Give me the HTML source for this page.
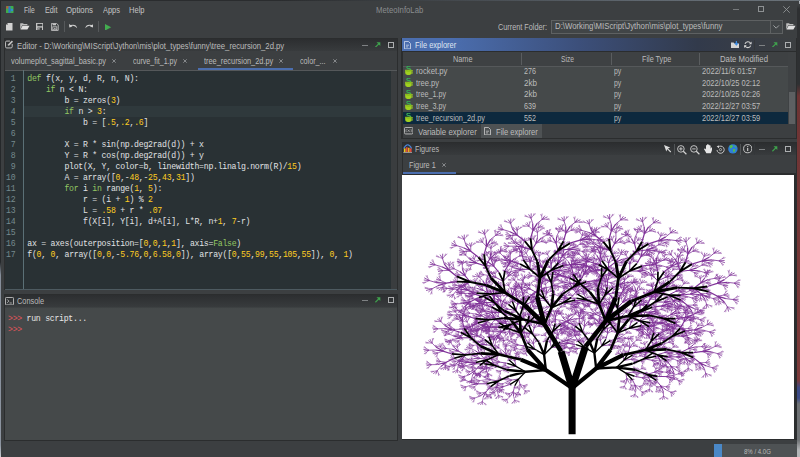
<!DOCTYPE html>
<html><head><meta charset="utf-8"><title>MeteoInfoLab</title>
<style>
html,body{margin:0;padding:0;background:#3c3f41;}
body{width:800px;height:457px;position:relative;overflow:hidden;font-family:"Liberation Sans", sans-serif;}
div,span,svg{position:absolute;box-sizing:border-box;}
.t{white-space:pre;line-height:12px;height:12px;transform-origin:0 50%;font-family:"Liberation Sans", sans-serif;}
.cl,.ln,.con{letter-spacing:-0.27px;}
.cl,.ln{font-family:"Liberation Mono", monospace;font-size:8.2px;line-height:12px;height:12px;white-space:pre;color:#E0E2E4;}
.cl{left:27.3px;}
.ln{left:5px;width:10.3px;text-align:right;color:#768a8e;}
b{font-weight:normal;}
.k{color:#93C763;} .n{color:#FFCD22;}
.con{font-family:"Liberation Mono", monospace;font-size:8.2px;line-height:12px;height:12px;white-space:pre;color:#e6e6e6;left:8px;}
.con i{font-style:normal;color:#e0555a;}
</style></head><body>
<!-- window frame -->
<div style="left:0;top:0;width:800px;height:457px;background:#3c3f41;"></div>
<div style="left:0;top:0;width:1.4px;height:457px;background:linear-gradient(#25282a 0,#25282a 262px,#868e9a 275px,#8c94a0 445px,#c8ccd0 457px);"></div>
<div style="left:797.3px;top:0;width:2.7px;height:457px;background:linear-gradient(#3c3f41 0,#3c3f41 5px,#2e3032 9px,#2e3032 84px,#6e3434 96px,#7c3a3a 380px,#3c4a86 388px,#3c4a86 398px,#6e7174 404px,#6e7174 440px,#b4b6b8 450px);"></div>
<div style="left:798.7px;top:0;width:1.3px;height:4px;background:linear-gradient(#c8ccd2,#9aa0a6);"></div>
<div style="left:0;top:0;width:800px;height:1px;background:linear-gradient(90deg,#2a2c2e 0,#2a2c2e 35%,#5f676f 80%,#6a7279 100%);"></div>

<!-- editor panel -->
<div style="left:3.5px;top:37.6px;width:394.5px;height:252.4px;background:#2b2d2e;"></div>
<div style="left:4.5px;top:38.8px;width:392.5px;height:12.2px;background:linear-gradient(#2c2e30,#383b3d);"></div>
<div style="left:4.5px;top:51px;width:392.5px;height:19.6px;background:#3c3f41;"></div>
<div style="left:4.5px;top:69.8px;width:392.5px;height:0.9px;background:#55585a;"></div>
<div style="left:197.5px;top:68px;width:95px;height:1.8px;background:#4b6eaf;"></div>
<div style="left:4.5px;top:70.7px;width:386.5px;height:218.3px;background:#293134;"></div>
<div style="left:391px;top:70.7px;width:6px;height:218.3px;background:#3a3d3f;"></div>
<div style="left:23.5px;top:105.8px;width:367.5px;height:11px;background:#2F393C;"></div>
<div style="left:23.2px;top:70px;width:1px;height:219px;background:#5b7076;"></div>
<div style="left:4.5px;top:288.6px;width:392.5px;height:1px;background:#4d5a60;"></div>
<div class="cl" style="top:72.80px"><b class="k">def</b> f(x, y, d, R, n, N):</div><div class="ln" style="top:72.80px">1</div><div class="cl" style="top:83.82px">    <b class="k">if</b> n &lt; N:</div><div class="ln" style="top:83.82px">2</div><div class="cl" style="top:94.84px">        b = zeros(<b class="n">3</b>)</div><div class="ln" style="top:94.84px">3</div><div class="cl" style="top:105.86px">        <b class="k">if</b> n &gt; <b class="n">3</b>:</div><div class="ln" style="top:105.86px">4</div><div class="cl" style="top:116.88px">            b = [<b class="n">.5</b>,<b class="n">.2</b>,<b class="n">.6</b>]</div><div class="ln" style="top:116.88px">5</div><div class="cl" style="top:127.90px"></div><div class="ln" style="top:127.90px">6</div><div class="cl" style="top:138.92px">        X = R * sin(np.deg2rad(d)) + x</div><div class="ln" style="top:138.92px">7</div><div class="cl" style="top:149.94px">        Y = R * cos(np.deg2rad(d)) + y</div><div class="ln" style="top:149.94px">8</div><div class="cl" style="top:160.96px">        plot(X, Y, color=b, linewidth=np.linalg.norm(R)/<b class="n">15</b>)</div><div class="ln" style="top:160.96px">9</div><div class="cl" style="top:171.98px">        A = array([<b class="n">0</b>,-<b class="n">48</b>,-<b class="n">25</b>,<b class="n">43</b>,<b class="n">31</b>])</div><div class="ln" style="top:171.98px">10</div><div class="cl" style="top:183.00px">        <b class="k">for</b> i <b class="k">in</b> range(<b class="n">1</b>, <b class="n">5</b>):</div><div class="ln" style="top:183.00px">11</div><div class="cl" style="top:194.02px">            r = (i + <b class="n">1</b>) % <b class="n">2</b></div><div class="ln" style="top:194.02px">12</div><div class="cl" style="top:205.04px">            L = <b class="n">.58</b> + r * <b class="n">.07</b></div><div class="ln" style="top:205.04px">13</div><div class="cl" style="top:216.06px">            f(X[i], Y[i], d+A[i], L*R, n+<b class="n">1</b>, <b class="n">7</b>-r)</div><div class="ln" style="top:216.06px">14</div><div class="cl" style="top:227.08px"></div><div class="ln" style="top:227.08px">15</div><div class="cl" style="top:238.10px">ax = axes(outerposition=[<b class="n">0</b>,<b class="n">0</b>,<b class="n">1</b>,<b class="n">1</b>], axis=<b class="k">False</b>)</div><div class="ln" style="top:238.10px">16</div><div class="cl" style="top:249.12px">f(<b class="n">0</b>, <b class="n">0</b>, array([<b class="n">0</b>,<b class="n">0</b>,-<b class="n">5.76</b>,<b class="n">0</b>,<b class="n">6.58</b>,<b class="n">0</b>]), array([<b class="n">0</b>,<b class="n">55</b>,<b class="n">99</b>,<b class="n">55</b>,<b class="n">105</b>,<b class="n">55</b>]), <b class="n">0</b>, <b class="n">1</b>)</div><div class="ln" style="top:249.12px">17</div>

<!-- console panel -->
<div style="left:3.5px;top:293.5px;width:394.5px;height:147.5px;background:#2b2d2e;"></div>
<div style="left:4.5px;top:294.5px;width:392.5px;height:12.4px;background:linear-gradient(#2c2e30,#383b3d);"></div>
<div style="left:4.5px;top:307px;width:392.5px;height:133px;background:linear-gradient(#3a3d3f 0,#45494a 1.6px);"></div>
<div class="con" style="top:313px"><i>&gt;&gt;&gt;</i> run script...</div>
<div class="con" style="top:324px"><i>&gt;&gt;&gt;</i></div>

<!-- file explorer panel -->
<div style="left:401.3px;top:37.8px;width:395.7px;height:101.7px;background:#2b2d2e;"></div>
<div style="left:402px;top:38.2px;width:394px;height:13px;background:linear-gradient(90deg,#4b6eaf 0,#4b6eaf 12%,#3c4f7a 45%,#323a4b 75%,#3c3f41 100%);"></div>
<div style="left:402.5px;top:51.5px;width:393.5px;height:72.5px;background:#45494a;"></div>
<div style="left:402.5px;top:51.5px;width:385.5px;height:14.5px;background:#3e4143;"></div>
<div style="left:402.5px;top:65.6px;width:385.5px;height:1px;background:#55585a;"></div>
<div style="left:521.3px;top:52.5px;width:1px;height:12.5px;background:#5a5d5f;"></div>
<div style="left:610.8px;top:52.5px;width:1px;height:12.5px;background:#5a5d5f;"></div>
<div style="left:698.8px;top:52.5px;width:1px;height:12.5px;background:#5a5d5f;"></div>
<div style="left:402.5px;top:112.2px;width:385.5px;height:11.4px;background:#0d293e;"></div>
<div style="left:788px;top:51.5px;width:8px;height:72.5px;background:#3f4244;"></div>
<div style="left:789.4px;top:92px;width:5.2px;height:31.6px;background:#5d6062;"></div>
<div style="left:402.5px;top:124.2px;width:393.5px;height:14px;background:#3c3f41;"></div>
<div style="left:481.2px;top:124.2px;width:61px;height:13.6px;background:#4e5254;"></div>

<!-- figures panel -->
<div style="left:401.5px;top:142px;width:395.5px;height:297.5px;background:#2b2d2e;"></div>
<div style="left:402.5px;top:143px;width:393.5px;height:12.4px;background:linear-gradient(#2c2e30,#383b3d);"></div>
<div style="left:402.5px;top:155.4px;width:393.5px;height:17.8px;background:#3c3f41;"></div>
<div style="left:402.5px;top:172.3px;width:53px;height:1.6px;background:#4b6eaf;"></div>
<div style="left:402.1px;top:174.5px;width:392.2px;height:264px;background:#fff;"></div>
<svg style="left:0;top:0" width="800" height="457" viewBox="0 0 800 457" fill="none" stroke-linecap="butt" stroke-linejoin="miter" stroke-miterlimit="10">
<path stroke="#803399" stroke-width=".8" d="M518.6 379l1.4 5.2l2.3 3.8m-2.3-3.8l-.2 4.8M518.6 379l-6.8 1l-5.1 1.8m5.1-1.8l-6.3-.2M516.1 366.3l-6.8 1l-5.1 1.7m5.1-1.7l-6.4-.2M516.1 366.3l-1.2-5.1l-2.2-3.9m2.2 3.9l.4-4.8M534.6 349.2l-6.7 1l-5.1 1.7m5.1-1.7l-6.4-.2M534.6 349.2l-1.2-5.1l-2.1-3.9m2.1 3.9l.4-4.9M551.4 347.5l-1.2-5.1l-2.2-3.9m2.2 3.9l.4-4.8M551.4 347.5l6.8-.8l5.2-1.6m-5.2 1.6l6.3 .4M584.9 347.5l-6.8 1l-5.1 1.8m5.1-1.8l-6.3-.2M584.9 347.5l-1.2-5.1l-2.2-3.9m2.2 3.9l.4-4.8M601.7 345.9l-1.2-5.2l-2.2-3.9m2.2 3.9l.4-4.8M601.7 345.9l6.8-.9l5.2-1.5m-5.2 1.5l6.3 .4M623.9 360.3l-1.2-5.2l-2.2-3.9m2.2 3.9l.4-4.8M623.9 360.3l6.8-.9l5.2-1.5m-5.2 1.5l6.3 .4M625.8 373l6.8-.8l5.2-1.6m-5.2 1.6l6.3 .4M625.8 373l1 5.2l1.9 4m-1.9-4l-.7 4.8"/>
<path stroke="#803399" stroke-width=".89" d="M514.8 385.8l-1.5 5.7l.2 4.8m-.2-4.8l-3 4.9M510.2 384.4l-7.1 2.3l-5.1 2.8m5.1-2.8l-7 .9M498.4 381l-1.5 5.8l.3 4.7m-.3-4.7l-2.9 4.9M498.4 381l-7.5-1.2l-6.3 .1m6.3-.1l-6.4-2.3M507.3 363.3l-7.6-1.2l-6.2 .1m6.2-.1l-6.4-2.3M509.1 359.9l-2.9-5.5l-3.6-3.9m3.6 3.9l-1-5.3M494.8 365.6l-7.1 2.2l-5.1 2.8m5.1-2.8l-7.1 .9M494.8 365.6l-2.9-5.5l-3.6-3.9m3.6 3.9l-1.1-5.3M487.5 359.6l-1.4 5.8l.2 4.7m-.2-4.7l-3 4.9M487.5 359.6l-7.5-1.2l-6.3 .1m6.3-.1l-6.4-2.3M492.3 345.7l-7.5-1.2l-6.3 0m6.3 0l-6.5-2.4M492.3 345.7l1.7-5.7l0-4.8m0 4.8l3.2-4.8M525.8 346.2l-7.5-1.2l-6.3 .1m6.3-.1l-6.4-2.3M527.7 342.8l-2.9-5.5l-3.6-3.9m3.6 3.9l-1-5.3M532.4 333.9l-7.6-1.2l-6.3 0m6.3 0l-6.4-2.4M532.4 333.9l1.7-5.7l0-4.8m0 4.8l3.2-4.9M555.5 340.9l1.7-5.7l0-4.7m0 4.7l3.2-4.8M560 342.4l7.2-2.1l5.2-2.7m-5.2 2.7l7.1-.7M552.8 331.4l-2.9-5.5l-3.6-3.9m3.6 3.9l-1-5.3M552.8 331.4l7.2-2.1l5.2-2.7m-5.2 2.7l7.1-.7M508.8 328.8l-7.1 2.3l-5.1 2.7m5.1-2.7l-7 .8M508.8 328.8l-2.9-5.5l-3.6-3.9m3.6 3.9l-1-5.3M526.7 324l-2.9-5.5l-3.6-3.9m3.6 3.9l-1.1-5.3M526.7 324l7.2-2.1l5.2-2.7m-5.2 2.7l7-.7M511.1 324.4l-1.5 5.8l.2 4.7m-.2-4.7l-3 4.9M511.1 324.4l-7.6-1.2l-6.2 .1m6.2-.1l-6.4-2.4M515.8 310.5l-7.5-1.3l-6.3 .1m6.3-.1l-6.4-2.3M515.8 310.5l1.8-5.8l0-4.7m0 4.7l3.2-4.8M544.8 299l-7.5-1.2l-6.3 0m6.3 0l-6.4-2.4M544.8 299l1.8-5.7l0-4.8m0 4.8l3.2-4.9M563.1 302.8l1.8-5.7l0-4.7m0 4.7l3.2-4.8M563.1 302.8l7.5 1.4l6.3 .1m-6.3-.1l6.3 2.6M576.1 344.6l-7.5-1.3l-6.3 .1m6.3-.1l-6.4-2.3M578 341.1l-2.9-5.4l-3.6-3.9m3.6 3.9l-1.1-5.4M582.6 332.2l-7.5-1.2l-6.3 .1m6.3-.1l-6.4-2.3M582.6 332.2l1.8-5.7l0-4.7m0 4.7l3.2-4.8M605.8 339.2l1.7-5.7l0-4.7m0 4.7l3.2-4.8M610.3 340.7l7.2-2.1l5.2-2.6m-5.2 2.6l7-.7M603.1 329.7l-2.9-5.4l-3.6-3.9m3.6 3.9l-1-5.4M603.1 329.7l7.2-2.1l5.2-2.6m-5.2 2.6l7-.7M611 324.3l-7.6-1.2l-6.2 .1m6.2-.1l-6.4-2.3M611 324.3l1.7-5.7l0-4.7m0 4.7l3.2-4.8M629.3 328.2l1.7-5.7l0-4.8m0 4.8l3.2-4.8M629.3 328.2l7.4 1.4l6.3 .1m-6.3-.1l6.3 2.5M628 353.6l1.7-5.7l0-4.7m0 4.7l3.2-4.8M632.5 355.1l7.2-2.1l5.2-2.6m-5.2 2.6l7-.7M644.1 358.8l1.7-5.7l0-4.7m0 4.7l3.2-4.8M644.1 358.8l7.5 1.4l6.2 .1m-6.2-.1l6.3 2.5M634.4 376.3l7.5 1.4l6.3 .1m-6.3-.1l6.3 2.5M632.4 379.7l2.7 5.5l3.4 4m-3.4-4l.8 5.3M647 374.4l7.2-2.1l5.2-2.7m-5.2 2.7l7.1-.7M647 374.4l2.7 5.5l3.4 4m-3.4-4l.8 5.4M651.3 341l-2.9-5.4l-3.6-3.9m3.6 3.9l-1.1-5.4M651.3 341l7.2-2.1l5.2-2.6m-5.2 2.6l7-.7M657.3 354.7l7.2-2.1l5.2-2.7m-5.2 2.7l7-.7M657.3 354.7l2.6 5.5l3.4 4m-3.4-4l.8 5.3M587 300l-7.1 2.3l-5.1 2.7m5.1-2.7l-7 .8M587 300l-2.9-5.5l-3.6-3.9m3.6 3.9l-1-5.3M604.9 295.2l-2.9-5.5l-3.6-3.9m3.6 3.9l-1-5.3M604.9 295.2l7.2-2.1l5.2-2.7m-5.2 2.7l7.1-.7M633.6 307l-2.8-5.4l-3.6-3.9m3.6 3.9l-1.1-5.4M633.6 307l7.2-2.1l5.2-2.6m-5.2 2.6l7.1-.7M639.7 320.7l7.2-2.1l5.2-2.7m-5.2 2.7l7-.7M639.7 320.7l2.6 5.5l3.4 4m-3.4-4l.8 5.4"/>
<path stroke="#803399" stroke-width="1" d="M490.6 386.7l-4.8 5.4l-2.5 5m2.5-5l-5.9 4.1M486.7 383.8l-8.6 0l-6.9 1.2m6.9-1.2l-7.8-1.4M484.2 363.8l-8.6 0l-6.9 1.2m6.9-1.2l-7.8-1.4M485.2 359.7l-4.9-5.4l-5.1-3.7m5.1 3.7l-2.7-5.7M479.8 365.3l-4.9 5.5l-2.5 4.9m2.5-4.9l-5.9 4M475.8 362.4l-8.6 0l-6.9 1.2m6.9-1.2l-7.8-1.4M465.6 355l-4.8 5.4l-2.5 5m2.5-5l-5.9 4.1M465.6 355l-7.1-3.8l-6.4-2m6.4 2l-5.2-4.5M485 339.7l-7.1-3.8l-6.5-2m6.5 2l-5.3-4.5M488.9 336.7l.1-6.5l-1.4-5.2m1.4 5.2l2-5.9M470.8 337.8l-8.7 0l-6.8 1.2m6.8-1.2l-7.7-1.4M470.8 337.8l.1-6.5l-1.4-5.3m1.4 5.3l2.1-5.9M525 327.9l-7.1-3.8l-6.5-2m6.5 2l-5.2-4.5M528.9 324.9l.2-6.5l-1.5-5.2m1.5 5.2l2-5.9M555.2 323.4l.2-6.6l-1.5-5.2m1.5 5.2l2-5.8M560.6 324.2l7.3-3.6l4.9-3.8m-4.9 3.8l7.5-2M498.2 327l-8.6 0l-6.9 1.2m6.9-1.2l-7.8-1.4M499.2 322.9l-4.8-5.4l-5.2-3.7m5.2 3.7l-2.8-5.7M501.6 312.4l-8.7 0l-6.8 1.2m6.8-1.2l-7.7-1.5M501.6 312.4l.1-6.6l-1.4-5.2m1.4 5.2l2.1-5.9M529.1 316l.2-6.6l-1.5-5.2m1.5 5.2l2-5.9M534.5 316.8l7.3-3.6l4.8-3.8m-4.8 3.8l7.5-2M523.2 306l-4.8-5.4l-5.1-3.7m5.1 3.7l-2.8-5.7M523.2 306l7.3-3.6l4.9-3.8m-4.9 3.8l7.5-2M503.3 330.1l-4.8 5.4l-2.6 5m2.6-5l-5.9 4.1M499.3 327.2l-8.6 0l-6.8 1.2m6.8-1.2l-7.7-1.5M489.2 319.8l-4.9 5.4l-2.5 5m2.5-5l-5.9 4.1M489.2 319.8l-7.1-3.8l-6.5-2m6.5 2l-5.3-4.6M508.5 304.4l-7.1-3.7l-6.5-2m6.5 2l-5.3-4.6M512.4 301.5l.1-6.6l-1.4-5.2m1.4 5.2l2.1-5.8M494.3 302.6l-8.6 0l-6.9 1.2m6.9-1.2l-7.8-1.5M494.3 302.6l.2-6.6l-1.5-5.2m1.5 5.2l2-5.8M490.3 294.1l-4.9 5.4l-2.5 5m2.5-5l-5.9 4.1M490.3 294.1l-7.1-3.8l-6.5-2m6.5 2l-5.3-4.5M503.2 281.3l-7.1-3.8l-6.5-2m6.5 2l-5.2-4.5M503.2 281.3l5.1-5.3l2.7-4.9m-2.7 4.9l6.1-4M537.5 293l-7.1-3.8l-6.5-2m6.5 2l-5.3-4.5M541.4 290l.1-6.5l-1.4-5.2m1.4 5.2l2.1-5.9M551.3 282.4l-7-3.7l-6.5-2.1m6.5 2.1l-5.3-4.6M551.3 282.4l5.1-5.3l2.8-4.9m-2.8 4.9l6.1-3.9M571.2 297.4l5-5.4l2.8-4.8m-2.8 4.8l6.1-3.9M575 300.4l8.6 .2l6.9-1m-6.9 1l7.7 1.6M573.9 286.6l.1-6.5l-1.4-5.3m1.4 5.3l2-5.9M573.9 286.6l8.6 .3l6.9-1m-6.9 1l7.7 1.6M530 269.3l-8.7 0l-6.8 1.2m6.8-1.2l-7.7-1.4M530 269.3l.1-6.6l-1.4-5.2m1.4 5.2l2-5.8M551.2 270.3l.1-6.6l-1.4-5.2m1.4 5.2l2.1-5.8M551.2 270.3l8.6 .2l6.9-1m-6.9 1l7.7 1.6M575.3 326.2l-7.1-3.8l-6.5-2m6.5 2l-5.3-4.5M579.2 323.3l.1-6.6l-1.4-5.2m1.4 5.2l2.1-5.9M605.5 321.7l.2-6.5l-1.5-5.2m1.5 5.2l2-5.9M610.9 322.5l7.3-3.5l4.8-3.9m-4.8 3.9l7.5-2M603.6 318.3l-7.1-3.7l-6.5-2m6.5 2l-5.2-4.6M607.5 315.4l.2-6.6l-1.5-5.2m1.5 5.2l2-5.8M617.5 307.8l-7.1-3.8l-6.5-2m6.5 2l-5.3-4.5M617.5 307.8l5-5.3l2.8-4.9m-2.8 4.9l6.1-4M637.3 322.7l5.1-5.3l2.7-4.9m-2.7 4.9l6.1-3.9M641.1 325.7l8.6 .3l6.9-1m-6.9 1l7.7 1.6M640 312l.1-6.6l-1.4-5.2m1.4 5.2l2.1-5.8M640 312l8.6 .2l6.9-1m-6.9 1l7.7 1.7M652.1 353.3l5.1-5.3l2.8-4.9m-2.8 4.9l6.1-3.9M655.9 356.4l8.7 .2l6.9-1m-6.9 1l7.7 1.6M657.5 376.4l8.6 .2l6.9-1m-6.9 1l7.7 1.6M656.3 380.5l4.6 5.5l5 3.8m-5-3.8l2.5 5.8M653.7 333l.2-6.5l-1.5-5.3m1.5 5.3l2-5.9M659.1 333.8l7.2-3.5l4.9-3.9m-4.9 3.9l7.6-2M673 335.8l.1-6.5l-1.4-5.2m1.4 5.2l2-5.9M673 335.8l8.6 .3l6.9-1m-6.9 1l7.7 1.6M667.7 356.7l8.7 .2l6.9-1m-6.9 1l7.7 1.6M666.6 360.7l4.6 5.6l4.9 3.8m-4.9-3.8l2.5 5.8M681 352.4l7.2-3.6l4.9-3.8m-4.9 3.8l7.5-2M681 352.4l4.5 5.5l5 3.8m-5-3.8l2.6 5.8M576.5 298.2l-8.7 0l-6.8 1.2m6.8-1.2l-7.7-1.4M577.4 294.1l-4.8-5.4l-5.1-3.7m5.1 3.7l-2.8-5.7M579.8 283.6l-8.6 0l-6.9 1.2m6.9-1.2l-7.8-1.5M579.8 283.6l.2-6.6l-1.5-5.2m1.5 5.2l2-5.9M607.3 287.2l.2-6.6l-1.4-5.2m1.4 5.2l2-5.9M612.7 288l7.3-3.6l4.9-3.8m-4.9 3.8l7.5-2M601.5 277.2l-4.9-5.4l-5.1-3.7m5.1 3.7l-2.7-5.7M601.5 277.2l7.2-3.6l4.9-3.8m-4.9 3.8l7.5-2M608.5 269.9l-8.7 0l-6.8 1.2m6.8-1.2l-7.7-1.4M608.5 269.9l.1-6.6l-1.4-5.2m1.4 5.2l2-5.8M629.7 270.9l.1-6.6l-1.4-5.2m1.4 5.2l2.1-5.8M629.7 270.9l8.6 .2l6.9-1m-6.9 1l7.7 1.7M636.1 299l.1-6.5l-1.4-5.3m1.4 5.3l2.1-5.9M641.5 299.8l7.2-3.5l4.9-3.9m-4.9 3.9l7.6-2M655.4 301.8l.1-6.5l-1.4-5.2m1.4 5.2l2-5.9M655.4 301.8l8.6 .3l6.9-1m-6.9 1l7.7 1.6M650.1 322.7l8.7 .2l6.9-1m-6.9 1l7.7 1.6M649 326.8l4.6 5.5l4.9 3.8m-4.9-3.8l2.5 5.8M663.4 318.4l7.2-3.6l4.9-3.8m-4.9 3.8l7.5-2M663.4 318.4l4.5 5.5l5 3.8m-5-3.8l2.5 5.8M657.7 281l-4.8-5.4l-5.1-3.6m5.1 3.6l-2.8-5.7M657.7 281l7.3-3.5l4.9-3.9m-4.9 3.9l7.5-2M668.5 295l7.3-3.6l4.9-3.8m-4.9 3.8l7.5-2M668.5 295l4.6 5.5l5 3.8m-5-3.8l2.5 5.8"/>
<path stroke="#803399" stroke-width="1.12" d="M454.3 358.3l-8.1 4l-5.5 4.3m5.5-4.3l-8.4 2.2M451.9 354l-8.9-2.9l-7.7-1.1m7.7 1.1l-7.1-4.1M460.9 332.5l-8.9-2.8l-7.8-1.1m7.8 1.1l-7.2-4.1M464.3 328.6l-1.9-7.2l-3.2-5.5m3.2 5.5l.4-6.8M491.7 307.1l-8.9-2.9l-7.8-1m7.8 1l-7.2-4.1M495.1 303.2l-1.9-7.3l-3.2-5.4m3.2 5.4l.5-6.7M523.5 296.8l-1.9-7.2l-3.2-5.5m3.2 5.5l.4-6.8M529.6 296.8l6.9-5.3l4.2-5m-4.2 5l7.6-3.5M477.9 323l-8.2 4l-5.4 4.3m5.4-4.3l-8.4 2.3M475.5 318.7l-9-2.9l-7.7-1m7.7 1l-7.1-4M484.4 297.3l-8.9-2.9l-7.7-1m7.7 1l-7.2-4M487.8 293.4l-1.9-7.2l-3.1-5.5m3.1 5.5l.5-6.8M479 297.4l-8.2 4l-5.4 4.3m5.4-4.3l-8.4 2.2M476.6 293l-8.9-2.8l-7.8-1.1m7.8 1.1l-7.2-4.1M470.3 282l-8.1 4l-5.5 4.3m5.5-4.3l-8.4 2.3M470.3 282l-5.1-6.2l-5.5-4.3m5.5 4.3l-2.8-6.5M499.1 272.6l-5.1-6.2l-5.6-4.2m5.6 4.2l-2.8-6.5M504.8 270.9l4-6.7l1.5-5.9m-1.5 5.9l5.4-5.4M485.5 266l-8.9-2.9l-7.7-1m7.7 1l-7.1-4M485.5 266l4-6.7l1.5-5.9m-1.5 5.9l5.5-5.4M547.2 273.8l-5.1-6.3l-5.6-4.2m5.6 4.2l-2.8-6.4M552.9 272l4-6.7l1.5-5.8m-1.5 5.8l5.5-5.4M581 279.2l3.9-6.7l1.6-5.9m-1.6 5.9l5.5-5.4M586.1 281.8l9.5-1.2l7.3-2.4m-7.3 2.4l9 .4M520.1 264l-8.9-2.9l-7.8-1m7.8 1l-7.2-4M523.5 260.1l-1.9-7.2l-3.2-5.5m3.2 5.5l.4-6.8M532 250l-8.9-2.9l-7.7-1m7.7 1l-7.2-4M532 250l4-6.7l1.5-5.9m-1.5 5.9l5.4-5.4M558.3 262.9l4-6.8l1.5-5.8m-1.5 5.8l5.4-5.3M563.4 265.5l9.6-1.3l7.2-2.3m-7.2 2.3l8.9 .4M558 250.6l-1.8-7.2l-3.2-5.5m3.2 5.5l.4-6.8M558 250.6l9.5-1.3l7.3-2.3m-7.3 2.3l9 .5M613.4 299.1l-5.2-6.2l-5.5-4.2m5.5 4.2l-2.8-6.5M619.1 297.4l3.9-6.7l1.5-5.9m-1.5 5.9l5.5-5.4M647.1 304.6l4-6.8l1.5-5.8m-1.5 5.8l5.4-5.3M652.2 307.2l9.6-1.3l7.2-2.3m-7.2 2.3l8.9 .5M680.1 328.4l3.9-6.7l1.6-5.9m-1.6 5.9l5.5-5.4M685.2 331l9.5-1.2l7.3-2.4m-7.3 2.4l9 .4M693.1 352.7l9.5-1.3l7.2-2.3m-7.2 2.3l8.9 .5M693 357.4l6.8 5.3l6.5 3.2m-6.5-3.2l4.5 5.8M569.9 278.3l-8.9-2.9l-7.7-1m7.7 1l-7.1-4.1M573.3 274.4l-1.8-7.3l-3.2-5.4m3.2 5.4l.4-6.7M601.7 268l-1.8-7.2l-3.2-5.5m3.2 5.5l.4-6.8M607.9 268l6.8-5.3l4.2-5m-4.2 5l7.6-3.5M598.6 264.6l-8.9-2.8l-7.8-1.1m7.8 1.1l-7.2-4.1M601.9 260.7l-1.8-7.2l-3.2-5.5m3.2 5.5l.4-6.8M610.5 250.6l-8.9-2.9l-7.7-1m7.7 1l-7.2-4M610.5 250.6l4-6.7l1.5-5.9m-1.5 5.9l5.4-5.4M636.8 263.5l4-6.7l1.5-5.9m-1.5 5.9l5.4-5.4M641.9 266.1l9.6-1.3l7.2-2.3m-7.2 2.3l8.9 .5M636.5 251.2l-1.9-7.2l-3.1-5.4m3.1 5.4l.5-6.8M636.5 251.2l9.5-1.2l7.3-2.4m-7.3 2.4l9 .4M662.5 294.4l3.9-6.7l1.5-5.9m-1.5 5.9l5.5-5.4M667.6 297.1l9.5-1.3l7.3-2.3m-7.3 2.3l8.9 .4M675.4 318.7l9.6-1.3l7.2-2.3m-7.2 2.3l8.9 .5M675.4 323.4l6.8 5.3l6.5 3.3m-6.5-3.3l4.5 5.9M658 271.9l-1.9-7.3l-3.1-5.4m3.1 5.4l.5-6.7M664.1 271.8l6.9-5.2l4.2-5.1m-4.2 5.1l7.6-3.5M680 271.5l-1.9-7.2l-3.2-5.4m3.2 5.4l.4-6.8M680 271.5l9.5-1.2l7.2-2.4m-7.2 2.4l8.9 .4M680.6 295.3l9.6-1.3l7.2-2.3m-7.2 2.3l8.9 .5M680.6 300l6.7 5.3l6.6 3.2m-6.6-3.2l4.5 5.8M693.8 288.3l6.9-5.3l4.1-5m-4.1 5l7.6-3.5M693.8 288.3l6.7 5.2l6.6 3.3m-6.6-3.3l4.5 5.9"/>
<path stroke="#803399" stroke-width="1.26" d="M456.8 281.6l-10.7 1.5l-8.1 2.6m8.1-2.6l-10-.5M456.8 276.4l-7.5-6l-7.4-3.6m7.4 3.6l-5.1-6.5M478.4 257.3l-7.6-6l-7.3-3.6m7.3 3.6l-5-6.5M484.1 254.3l2.3-8l-.1-6.7m.1 6.7l4.3-6.9M524.9 241.2l-7.6-5.9l-7.4-3.6m7.4 3.6l-5-6.6M530.6 238.3l2.3-8l-.2-6.7m.2 6.7l4.3-6.9M563.5 241.2l2.3-8l-.1-6.7m.1 6.7l4.3-6.9M569.9 243.2l10.1-3.1l7.2-3.8m-7.2 3.8l9.9-1.1M603.4 241.9l-7.6-6l-7.4-3.6m7.4 3.6l-5-6.5M609.1 238.9l2.2-8l-.1-6.7m.1 6.7l4.4-6.9M642 241.8l2.3-8l-.1-6.7m.1 6.7l4.3-6.9M648.4 243.8l10.1-3.1l7.2-3.8m-7.2 3.8l9.9-1.1M685.5 262.1l2.3-8l-.2-6.7m.2 6.7l4.3-6.9M691.9 264.1l10.1-3.1l7.2-3.8m-7.2 3.8l9.9-1.1M707.2 286.5l10-3.1l7.2-3.8m-7.2 3.8l9.9-1.1M708.6 291.6l9 4.6l8.2 2.4m-8.2-2.4l6.7 5.7"/>
<path stroke="#803399" stroke-width=".55" d="M520 384.2l3.4 1.5l3.1 .7m-3.1-.7l2.7 1.9M522.3 388l2.7 2.7l2.8 1.8m-2.8-1.8l1.7 2.9M520 384.2l-2.1 2.6l-1 2.3m1-2.3l-2.6 1.9M519.8 389l-1.5 3.2l-.3 2.7m.3-2.7l-2.2 2.6M513.3 391.5l2.7 2.7l2.8 1.8m-2.8-1.8l1.6 2.9M513.3 391.5l-3.6 2l-2.4 2.1m2.4-2.1l-3.8 1.2M511.8 380l-2.1 2.6l-1 2.4m1-2.4l-2.6 2M506.7 381.8l-3.6 1.9l-2.4 2.1m2.4-2.1l-3.9 1.2M511.8 380l-3.4-1.6l-3-.8m3 .8l-2.6-2M505.5 379.8l-4.3-1.2l-3.6-.3m3.6 .3l-3.4-1.7M503.1 386.7l-1.5 3.2l-.3 2.8m.3-2.8l-2.2 2.7M503.1 386.7l-4.2-1.2l-3.6-.3m3.6 .3l-3.4-1.7M496.9 386.8l2.7 2.7l2.8 1.8m-2.8-1.8l1.7 2.9M496.9 386.8l-3.6 2l-2.4 2.1m2.4-2.1l-3.8 1.2M490.9 379.8l-3.6 2l-2.4 2.1m2.4-2.1l-3.9 1.2M490.9 379.8l-2.6-2.8l-2.7-1.8m2.7 1.8l-1.5-2.9M509.3 367.3l-2.1 2.6l-1 2.4m1-2.4l-2.6 2M504.2 369l-3.6 2l-2.4 2.1m2.4-2.1l-3.9 1.2M509.3 367.3l-3.4-1.6l-3.1-.8m3.1 .8l-2.6-2M502.9 367.1l-4.2-1.2l-3.6-.3m3.6 .3l-3.4-1.7M499.7 362.1l-3.6 2l-2.4 2.1m2.4-2.1l-3.8 1.2M499.7 362.1l-2.5-2.8l-2.7-1.8m2.7 1.8l-1.5-2.9M514.9 361.2l-3.4-1.6l-3.1-.8m3.1 .8l-2.6-2M512.7 357.3l-2.6-2.8l-2.7-1.9m2.7 1.9l-1.5-2.9M514.9 361.2l2.1-2.6l1.1-2.3m-1.1 2.3l2.7-1.9M515.3 356.4l1.6-3.2l.5-2.7m-.5 2.7l2.3-2.6M506.2 354.4l-4.2-1.1l-3.6-.4m3.6 .4l-3.4-1.8M506.2 354.4l1.6-3.1l.5-2.8m-.5 2.8l2.4-2.6M487.7 367.8l-1.5 3.3l-.4 2.7m.4-2.7l-2.2 2.6M487.7 367.8l-4.2-1.1l-3.6-.4m3.6 .4l-3.5-1.8M491.9 360.1l-4.2-1.1l-3.6-.4m3.6 .4l-3.5-1.8M491.9 360.1l1.6-3.2l.5-2.7m-.5 2.7l2.3-2.5M486.1 365.4l2.7 2.7l2.7 1.8m-2.7-1.8l1.6 2.9M486.1 365.4l-3.6 2l-2.4 2.1m2.4-2.1l-3.9 1.2M480 358.4l-3.6 2l-2.4 2.1m2.4-2.1l-3.8 1.2M480 358.4l-2.6-2.8l-2.7-1.8m2.7 1.8l-1.5-2.9M484.8 344.5l-3.7 2l-2.4 2.1m2.4-2.1l-3.8 1.2M484.8 344.5l-2.6-2.8l-2.7-1.9m2.7 1.9l-1.5-2.9M494 340l-2.5-2.8l-2.7-1.8m2.7 1.8l-1.5-2.9M494 340l3.7-1.9l2.5-2m-2.5 2l3.9-1.1M527.9 350.2l-2.1 2.6l-1 2.3m1-2.3l-2.6 2M522.8 351.9l-3.7 2l-2.4 2.1m2.4-2.1l-3.8 1.2M527.9 350.2l-3.4-1.6l-3.1-.8m3.1 .8l-2.6-2M521.5 350l-4.2-1.2l-3.6-.3m3.6 .3l-3.4-1.7M518.3 345l-3.6 2l-2.4 2.1m2.4-2.1l-3.9 1.2M518.3 345l-2.6-2.8l-2.7-1.8m2.7 1.8l-1.5-2.9M533.4 344.1l-3.4-1.6l-3-.8m3 .8l-2.5-2M531.3 340.2l-2.6-2.8l-2.7-1.9m2.7 1.9l-1.5-3M533.4 344.1l2.2-2.6l1.1-2.3m-1.1 2.3l2.7-1.9M533.8 339.2l1.6-3.1l.6-2.8m-.6 2.8l2.4-2.6M524.8 337.3l-4.2-1.1l-3.6-.4m3.6 .4l-3.4-1.8M524.8 337.3l1.6-3.1l.5-2.8m-.5 2.8l2.3-2.6M524.8 332.7l-3.6 2l-2.4 2m2.4-2l-3.8 1.2M524.8 332.7l-2.6-2.8l-2.7-1.9m2.7 1.9l-1.5-2.9M534.1 328.2l-2.6-2.8l-2.7-1.9m2.7 1.9l-1.5-2.9M534.1 328.2l3.7-1.9l2.5-2m-2.5 2l3.9-1.1M550.2 342.4l-3.4-1.6l-3-.8m3 .8l-2.5-2M548 338.5l-2.5-2.8l-2.7-1.9m2.7 1.9l-1.5-2.9M550.2 342.4l2.2-2.6l1.1-2.3m-1.1 2.3l2.7-1.9M550.6 337.6l1.6-3.2l.5-2.7m-.5 2.7l2.4-2.6M557.2 335.2l-2.5-2.8l-2.7-1.8m2.7 1.8l-1.5-2.9M557.2 335.2l3.7-1.9l2.5-2m-2.5 2l3.9-1.1M558.2 346.7l2.2-2.5l1.1-2.3m-1.1 2.3l2.7-1.9M563.4 345.1l3.7-1.9l2.5-2m-2.5 2l3.9-1.1M558.2 346.7l3.3 1.7l3 .9m-3-.9l2.5 2.1M564.5 347.1l4.2 1.3l3.6 .4m-3.6-.4l3.3 1.8M567.2 340.3l1.6-3.2l.5-2.7m-.5 2.7l2.4-2.6M567.2 340.3l4.2 1.3l3.5 .4m-3.5-.4l3.3 1.8M549.9 325.9l-4.2-1.1l-3.6-.4m3.6 .4l-3.4-1.8M549.9 325.9l1.6-3.1l.5-2.8m-.5 2.8l2.4-2.6M560 329.3l1.6-3.2l.5-2.7m-.5 2.7l2.3-2.6M560 329.3l4.1 1.3l3.6 .4m-3.6-.4l3.4 1.8M501.7 331.1l-1.5 3.2l-.4 2.7m.4-2.7l-2.2 2.6M501.7 331.1l-4.2-1.2l-3.6-.4m3.6 .4l-3.5-1.8M505.9 323.3l-4.2-1.1l-3.6-.4m3.6 .4l-3.4-1.8M505.9 323.3l1.6-3.1l.5-2.8m-.5 2.8l2.3-2.6M523.8 318.5l-4.2-1.1l-3.6-.4m3.6 .4l-3.5-1.8M523.8 318.5l1.6-3.2l.5-2.7m-.5 2.7l2.3-2.5M533.9 321.9l1.6-3.2l.5-2.7m-.5 2.7l2.3-2.6M533.9 321.9l4.1 1.2l3.6 .5m-3.6-.5l3.4 1.9M509.6 330.2l2.7 2.7l2.8 1.7m-2.8-1.7l1.6 2.9M509.6 330.2l-3.6 2l-2.4 2m2.4-2l-3.8 1.1M503.5 323.2l-3.6 2l-2.4 2.1m2.4-2.1l-3.8 1.2M503.5 323.2l-2.5-2.8l-2.7-1.8m2.7 1.8l-1.5-2.9M508.3 309.2l-3.6 2l-2.4 2.1m2.4-2.1l-3.9 1.2M508.3 309.2l-2.6-2.7l-2.7-1.9m2.7 1.9l-1.5-3M517.6 304.7l-2.6-2.7l-2.7-1.9m2.7 1.9l-1.5-3M517.6 304.7l3.7-1.9l2.4-2m-2.4 2l3.8-1M537.3 297.8l-3.6 2l-2.4 2m2.4-2l-3.8 1.1M537.3 297.8l-2.6-2.8l-2.7-1.9m2.7 1.9l-1.5-2.9M546.6 293.3l-2.6-2.8l-2.7-1.9m2.7 1.9l-1.5-2.9M546.6 293.3l3.7-1.9l2.5-2m-2.5 2l3.9-1.1M564.9 297.1l-2.6-2.8l-2.7-1.8m2.7 1.8l-1.5-2.9M564.9 297.1l3.7-1.9l2.4-2m-2.4 2l3.8-1.1M570.6 304.2l3.7-1.9l2.5-2m-2.5 2l3.9-1M570.6 304.2l2.4 2.9l2.6 1.9m-2.6-1.9l1.4 3M578.1 348.5l-2 2.6l-1 2.4m1-2.4l-2.6 2M573 350.3l-3.6 2l-2.4 2m2.4-2l-3.8 1.1M578.1 348.5l-3.3-1.6l-3.1-.8m3.1 .8l-2.6-2M571.8 348.3l-4.2-1.1l-3.6-.4m3.6 .4l-3.4-1.8M568.6 343.3l-3.7 2l-2.3 2.1m2.3-2.1l-3.8 1.2M568.6 343.3l-2.6-2.7l-2.7-1.9m2.7 1.9l-1.5-3M583.7 342.4l-3.4-1.6l-3-.8m3 .8l-2.6-2M581.5 338.5l-2.5-2.8l-2.7-1.8m2.7 1.8l-1.5-2.9M583.7 342.4l2.2-2.5l1.1-2.4m-1.1 2.4l2.7-2M584.1 337.6l1.6-3.2l.5-2.7m-.5 2.7l2.4-2.6M575.1 335.7l-4.2-1.2l-3.6-.3m3.6 .3l-3.5-1.7M575.1 335.7l1.6-3.2l.5-2.7m-.5 2.7l2.3-2.6M575.1 331l-3.6 2l-2.4 2.1m2.4-2.1l-3.9 1.2M575.1 331l-2.6-2.8l-2.7-1.8m2.7 1.8l-1.5-2.9M584.4 326.5l-2.6-2.8l-2.7-1.8m2.7 1.8l-1.5-2.9M584.4 326.5l3.7-1.9l2.5-2m-2.5 2l3.9-1.1M600.5 340.7l-3.4-1.6l-3.1-.8m3.1 .8l-2.6-2M598.3 336.8l-2.5-2.8l-2.7-1.8m2.7 1.8l-1.5-2.9M600.5 340.7l2.2-2.5l1.1-2.3m-1.1 2.3l2.6-1.9M600.9 335.9l1.6-3.2l.5-2.7m-.5 2.7l2.4-2.5M607.5 333.5l-2.6-2.7l-2.6-1.9m2.6 1.9l-1.5-3M607.5 333.5l3.7-1.9l2.5-2m-2.5 2l3.9-1.1M608.5 345l2.2-2.5l1.1-2.3m-1.1 2.3l2.6-1.9M613.7 343.5l3.7-1.9l2.5-2m-2.5 2l3.8-1.1M608.5 345l3.3 1.7l3 .9m-3-.9l2.5 2.1M614.8 345.4l4.2 1.3l3.5 .5m-3.5-.5l3.3 1.8M617.5 338.6l1.6-3.2l.5-2.7m-.5 2.7l2.3-2.5M617.5 338.6l4.1 1.3l3.6 .4m-3.6-.4l3.4 1.8M600.2 324.3l-4.2-1.2l-3.6-.3m3.6 .3l-3.5-1.7M600.2 324.3l1.6-3.2l.5-2.7m-.5 2.7l2.3-2.6M610.3 327.6l1.6-3.2l.5-2.7m-.5 2.7l2.3-2.5M610.3 327.6l4.1 1.3l3.6 .4m-3.6-.4l3.4 1.8M603.4 323.1l-3.6 2l-2.4 2.1m2.4-2.1l-3.8 1.2M603.4 323.1l-2.5-2.8l-2.7-1.8m2.7 1.8l-1.5-2.9M612.7 318.6l-2.6-2.8l-2.7-1.8m2.7 1.8l-1.5-2.9M612.7 318.6l3.7-1.9l2.5-2m-2.5 2l3.9-1.1M631 322.5l-2.6-2.8l-2.7-1.9m2.7 1.9l-1.5-2.9M631 322.5l3.7-1.9l2.5-2m-2.5 2l3.9-1.1M636.7 329.6l3.7-1.9l2.5-2m-2.5 2l3.9-1.1M636.7 329.6l2.5 2.9l2.6 1.9m-2.6-1.9l1.3 2.9M622.7 355.1l-3.4-1.6l-3.1-.8m3.1 .8l-2.6-2M620.5 351.2l-2.5-2.8l-2.7-1.8m2.7 1.8l-1.5-2.9M622.7 355.1l2.2-2.5l1.1-2.3m-1.1 2.3l2.6-1.9M623.1 350.3l1.6-3.2l.5-2.7m-.5 2.7l2.4-2.5M629.7 347.9l-2.6-2.7l-2.7-1.9m2.7 1.9l-1.5-3M629.7 347.9l3.7-1.9l2.5-2m-2.5 2l3.9-1.1M630.7 359.4l2.2-2.5l1.1-2.3m-1.1 2.3l2.6-1.9M635.9 357.9l3.7-1.9l2.5-2m-2.5 2l3.8-1.1M630.7 359.4l3.3 1.7l3 .9m-3-.9l2.5 2.1M637 359.8l4.2 1.3l3.5 .5m-3.5-.5l3.3 1.8M639.7 353l1.6-3.2l.5-2.7m-.5 2.7l2.3-2.5M639.7 353l4.1 1.3l3.6 .4m-3.6-.4l3.4 1.8M645.8 353.1l-2.5-2.8l-2.7-1.8m2.7 1.8l-1.5-2.9M645.8 353.1l3.7-1.9l2.5-2m-2.5 2l3.9-1.1M651.6 360.2l3.7-1.9l2.5-2m-2.5 2l3.9-1.1M651.6 360.2l2.4 2.9l2.6 1.9m-2.6-1.9l1.4 2.9M632.6 372.2l2.2-2.5l1.1-2.3m-1.1 2.3l2.7-1.9M637.8 370.6l3.7-1.9l2.5-2m-2.5 2l3.9-1M632.6 372.2l3.3 1.7l3 .9m-3-.9l2.5 2.1M638.9 372.6l4.2 1.3l3.6 .4m-3.6-.4l3.3 1.8M641.9 377.7l3.7-1.9l2.5-2m-2.5 2l3.9-1.1M641.9 377.7l2.5 2.8l2.6 1.9m-2.6-1.9l1.3 3M626.8 378.2l3.3 1.7l3 .9m-3-.9l2.4 2.1M628.7 382.2l2.5 2.8l2.6 2m-2.6-2l1.3 3M626.8 378.2l-2.3 2.5l-1.3 2.3m1.3-2.3l-2.8 1.8M626.1 383l-1.7 3.1l-.7 2.8m.7-2.8l-2.5 2.6M635.1 385.2l4.1 1.2l3.6 .5m-3.6-.5l3.4 1.9M635.1 385.2l-1.8 3.1l-.6 2.7m.6-2.7l-2.4 2.5M654.2 372.3l1.6-3.2l.6-2.7m-.6 2.7l2.4-2.6M654.2 372.3l4.2 1.2l3.6 .5m-3.6-.5l3.3 1.9M649.7 379.9l4.1 1.3l3.6 .4m-3.6-.4l3.4 1.8M649.7 379.9l-1.8 3.1l-.6 2.7m.6-2.7l-2.4 2.5M648.4 335.6l-4.2-1.2l-3.6-.3m3.6 .3l-3.5-1.7M648.4 335.6l1.6-3.2l.5-2.7m-.5 2.7l2.3-2.6M658.5 338.9l1.6-3.2l.5-2.7m-.5 2.7l2.3-2.5M658.5 338.9l4.1 1.3l3.6 .4m-3.6-.4l3.4 1.8M664.5 352.6l1.6-3.2l.5-2.7m-.5 2.7l2.3-2.6M664.5 352.6l4.1 1.2l3.6 .5m-3.6-.5l3.4 1.9M659.9 360.2l4.2 1.2l3.5 .5m-3.5-.5l3.3 1.9M659.9 360.2l-1.7 3.1l-.7 2.7m.7-2.7l-2.5 2.5M579.9 302.3l-1.4 3.2l-.4 2.7m.4-2.7l-2.3 2.6M579.9 302.3l-4.2-1.2l-3.6-.4m3.6 .4l-3.4-1.7M584.1 294.5l-4.2-1.1l-3.6-.4m3.6 .4l-3.4-1.8M584.1 294.5l1.6-3.1l.5-2.8m-.5 2.8l2.4-2.6M602 289.7l-4.2-1.1l-3.6-.4m3.6 .4l-3.4-1.8M602 289.7l1.6-3.2l.5-2.7m-.5 2.7l2.4-2.5M612.1 293.1l1.6-3.2l.5-2.7m-.5 2.7l2.4-2.6M612.1 293.1l4.1 1.2l3.6 .5m-3.6-.5l3.4 1.9M630.8 301.6l-4.2-1.2l-3.6-.3m3.6 .3l-3.5-1.7M630.8 301.6l1.6-3.2l.5-2.7m-.5 2.7l2.3-2.6M640.8 304.9l1.7-3.2l.5-2.7m-.5 2.7l2.3-2.5M640.8 304.9l4.2 1.3l3.6 .4m-3.6-.4l3.4 1.8M646.9 318.6l1.6-3.2l.5-2.7m-.5 2.7l2.3-2.6M646.9 318.6l4.1 1.2l3.6 .5m-3.6-.5l3.4 1.9M642.3 326.2l4.2 1.3l3.5 .4m-3.5-.4l3.3 1.8M642.3 326.2l-1.7 3.1l-.7 2.7m.7-2.7l-2.5 2.5"/>
<path stroke="#803399" stroke-width=".58" d="M513.5 396.3l1.2 3.7l1.9 2.7m-1.9-2.7l0 3.5M510.3 396.4l-3.3 2.9l-2 2.7m2-2.7l-3.9 1.9M498 389.5l-3.3 2.8l-2 2.7m2-2.7l-3.9 2M496.1 387.6l-5-.6l-4 .3m4-.3l-4.3-1.3M497.2 391.5l1.2 3.7l1.8 2.8m-1.8-2.8l0 3.5M494 391.7l-3.4 2.8l-2 2.7m2-2.7l-3.8 2M485.8 392.1l1.2 3.7l1.9 2.8m-1.9-2.8l0 3.6M485.8 392.1l-4.9 .9l-3.6 1.4m3.6-1.4l-4.6 0M484.6 379.9l-4.9 .8l-3.6 1.4m3.6-1.4l-4.6 0M484.5 377.5l-3.7-2.6l-3.5-1.6m3.5 1.6l-2.5-3M478.1 383.8l-3.4 2.8l-2 2.7m2-2.7l-3.8 2M478.1 383.8l-3.7-2.6l-3.5-1.6m3.5 1.6l-2.6-2.9M493.5 362.2l-4.9 .8l-3.7 1.4m3.7-1.4l-4.7 0M493.3 359.8l-3.7-2.6l-3.5-1.6m3.5 1.6l-2.5-3M502.6 350.5l-3.6-2.5l-3.5-1.6m3.5 1.6l-2.6-3M505.2 349.1l.8-3.8l-.3-3m.3 3l1.8-3.2M482.6 370.6l-3.4 2.9l-1.9 2.7m1.9-2.7l-3.8 1.9M480.6 368.7l-4.9-.5l-4.1 .2m4.1-.2l-4.3-1.3M475.6 363.8l-3.4 2.9l-2 2.7m2-2.7l-3.8 1.9M475.6 363.8l-3.7-2.6l-3.5-1.5m3.5 1.5l-2.5-2.9M488.3 356.2l-3.7-2.6l-3.5-1.5m3.5 1.5l-2.5-2.9M490.8 354.8l.8-3.8l-.2-3.1m.2 3.1l1.8-3.2M480.3 354.3l-4.9-.6l-4.1 .3m4.1-.3l-4.3-1.3M480.3 354.3l.8-3.8l-.2-3.1m.2 3.1l1.8-3.2M486.3 370.1l1.2 3.7l1.8 2.8m-1.8-2.8l0 3.6M483.1 370.3l-3.4 2.8l-1.9 2.7m1.9-2.7l-3.8 2M474.9 370.8l1.2 3.7l1.9 2.7m-1.9-2.7l.1 3.5M474.9 370.8l-4.9 .8l-3.6 1.4m3.6-1.4l-4.6 0M473.7 358.5l-4.8 .9l-3.7 1.3m3.7-1.3l-4.7-.1M473.6 356.1l-3.7-2.6l-3.5-1.6m3.5 1.6l-2.5-3M467.2 362.4l-3.4 2.8l-2 2.7m2-2.7l-3.8 2M467.2 362.4l-3.7-2.6l-3.5-1.5m3.5 1.5l-2.5-2.9M460.8 360.4l1.2 3.7l1.8 2.8m-1.8-2.8l0 3.6M460.8 360.4l-4.9 .9l-3.7 1.3m3.7-1.3l-4.6 0M458.5 351.2l-4.8 .9l-3.7 1.3m3.7-1.3l-4.7-.1M458.5 351.2l-1-3.7l-1.7-2.8m1.7 2.8l.1-3.5M478.5 344.5l-4.9 .9l-3.7 1.4m3.7-1.4l-4.6 0M478.3 342.1l-3.6-2.6l-3.5-1.5m3.5 1.5l-2.6-2.9M477.9 335.9l-4.9 .9l-3.7 1.3m3.7-1.3l-4.6-.1M477.9 335.9l-1.1-3.7l-1.7-2.8m1.7 2.8l.2-3.5M494 335.2l-1-3.7l-1.7-2.8m1.7 2.8l.1-3.5M497.2 335.2l3.5-2.8l2.1-2.6m-2.1 2.6l3.9-1.9M489 330.2l-3.7-2.6l-3.5-1.6m3.5 1.6l-2.5-3M489 330.2l3.5-2.8l2.1-2.6m-2.1 2.6l3.9-1.8M462.1 337.8l-3.3 2.9l-2 2.7m2-2.7l-3.8 1.9M462.1 337.8l-3.6-2.6l-3.6-1.5m3.6 1.5l-2.6-2.9M470.9 331.3l-3.6-2.6l-3.6-1.6m3.6 1.6l-2.6-3M470.9 331.3l3.5-2.8l2.1-2.6m-2.1 2.6l3.9-1.9M512 345.1l-4.9 .8l-3.6 1.4m3.6-1.4l-4.6 0M511.9 342.7l-3.7-2.6l-3.5-1.6m3.5 1.6l-2.5-3M521.2 333.4l-3.7-2.6l-3.5-1.5m3.5 1.5l-2.5-2.9M523.8 332l.8-3.8l-.3-3.1m.3 3.1l1.7-3.2M518.5 332.7l-4.8 .9l-3.7 1.3m3.7-1.3l-4.7 0M518.4 330.3l-3.7-2.6l-3.5-1.5m3.5 1.5l-2.5-2.9M517.9 324.1l-4.9 .9l-3.6 1.3m3.6-1.3l-4.6-.1M517.9 324.1l-1-3.7l-1.7-2.8m1.7 2.8l.1-3.5M534.1 323.4l-1-3.7l-1.7-2.8m1.7 2.8l.1-3.5M537.3 323.3l3.5-2.7l2.1-2.6m-2.1 2.6l3.9-1.9M529.1 318.4l-3.7-2.6l-3.5-1.6m3.5 1.6l-2.5-3M529.1 318.4l3.4-2.8l2.1-2.6m-2.1 2.6l4-1.8M557.2 330.5l-1-3.8l-1.7-2.8m1.7 2.8l.1-3.5M560.4 330.4l3.5-2.8l2.1-2.6m-2.1 2.6l3.9-1.8M572.4 337.6l3.5-2.7l2.1-2.7m-2.1 2.7l3.9-1.9M574.3 339.6l4.9 .7l4.1-.2m-4.1 .2l4.2 1.4M546.3 322l-3.6-2.5l-3.6-1.6m3.6 1.6l-2.6-3M548.9 320.6l.8-3.8l-.3-3m.3 3l1.7-3.2M555.4 316.8l-3.7-2.6l-3.5-1.5m3.5 1.5l-2.5-2.9M555.4 316.8l3.5-2.7l2.1-2.6m-2.1 2.6l3.9-1.9M565.2 326.6l3.5-2.7l2.1-2.7m-2.1 2.7l3.9-1.9M567.1 328.6l4.9 .7l4.1-.2m-4.1 .2l4.2 1.4M567.9 320.6l.8-3.7l-.3-3.1m.3 3.1l1.8-3.3M567.9 320.6l4.9 .7l4.1-.2m-4.1 .2l4.3 1.4M496.6 333.8l-3.3 2.9l-2 2.7m2-2.7l-3.9 1.9M494.7 331.9l-5-.5l-4.1 .3m4.1-.3l-4.3-1.3M489.6 327l-3.4 2.9l-2 2.7m2-2.7l-3.8 2M489.6 327l-3.7-2.6l-3.5-1.5m3.5 1.5l-2.5-2.9M502.3 319.4l-3.7-2.6l-3.5-1.5m3.5 1.5l-2.5-2.9M504.9 318l.7-3.8l-.2-3.1m.2 3.1l1.8-3.2M494.4 317.5l-5-.5l-4.1 .2m4.1-.2l-4.3-1.3M494.4 317.5l.8-3.8l-.3-3.1m.3 3.1l1.7-3.2M492.9 312.4l-3.3 2.8l-2 2.7m2-2.7l-3.8 2M492.9 312.4l-3.6-2.6l-3.5-1.6m3.5 1.6l-2.6-3M501.7 305.8l-3.6-2.6l-3.5-1.5m3.5 1.5l-2.6-2.9M501.7 305.8l3.5-2.7l2.1-2.7m-2.1 2.7l3.9-1.9M520.2 314.6l-3.7-2.6l-3.5-1.5m3.5 1.5l-2.5-2.9M522.7 313.2l.8-3.8l-.2-3.1m.2 3.1l1.8-3.2M529.3 309.4l-3.7-2.6l-3.5-1.5m3.5 1.5l-2.5-2.9M529.3 309.4l3.5-2.7l2.1-2.7m-2.1 2.7l3.9-1.9M539.1 319.2l3.4-2.7l2.2-2.7m-2.2 2.7l4-1.9M540.9 321.2l5 .6l4-.1m-4 .1l4.2 1.4M541.8 313.2l.7-3.8l-.2-3m.2 3l1.8-3.2M541.8 313.2l4.9 .7l4.1-.2m-4.1 .2l4.2 1.4M518.4 300.6l-5-.6l-4 .3m4-.3l-4.3-1.3M518.4 300.6l.8-3.8l-.3-3.1m.3 3.1l1.8-3.2M530.5 302.4l.8-3.7l-.3-3.1m.3 3.1l1.7-3.3M530.5 302.4l4.9 .7l4.1-.2m-4.1 .2l4.3 1.4M509.8 334.9l1.2 3.7l1.9 2.8m-1.9-2.8l0 3.5M506.6 335.1l-3.3 2.8l-2 2.7m2-2.7l-3.9 2M498.5 335.5l1.2 3.7l1.8 2.8m-1.8-2.8l0 3.5M498.5 335.5l-4.9 .9l-3.7 1.3m3.7-1.3l-4.7-.1M497.3 323.3l-4.9 .8l-3.7 1.4m3.7-1.4l-4.6 0M497.1 320.8l-3.7-2.6l-3.5-1.5m3.5 1.5l-2.5-2.9M490.7 327.2l-3.4 2.8l-1.9 2.7m1.9-2.7l-3.8 2M490.7 327.2l-3.7-2.6l-3.5-1.6m3.5 1.6l-2.5-3M484.3 325.2l1.2 3.7l1.9 2.8m-1.9-2.8l.1 3.5M484.3 325.2l-4.9 .9l-3.6 1.3m3.6-1.3l-4.6-.1M482.1 316l-4.9 .8l-3.7 1.4m3.7-1.4l-4.6 0M482.1 316l-1.1-3.7l-1.7-2.8m1.7 2.8l.2-3.5M502 309.3l-4.9 .9l-3.6 1.3m3.6-1.3l-4.6-.1M501.9 306.9l-3.7-2.6l-3.5-1.6m3.5 1.6l-2.5-2.9M501.4 300.7l-4.9 .8l-3.7 1.4m3.7-1.4l-4.6 0M501.4 300.7l-1-3.7l-1.8-2.8m1.8 2.8l.1-3.6M517.6 300l-1.1-3.7l-1.7-2.8m1.7 2.8l.2-3.5M520.8 299.9l3.4-2.7l2.1-2.7m-2.1 2.7l4-1.9M512.5 294.9l-3.6-2.6l-3.6-1.5m3.6 1.5l-2.6-2.9M512.5 294.9l3.5-2.7l2.1-2.6m-2.1 2.6l3.9-1.9M485.7 302.6l-3.4 2.8l-2 2.7m2-2.7l-3.8 2M485.7 302.6l-3.7-2.6l-3.5-1.6m3.5 1.6l-2.6-3M494.5 296l-3.7-2.6l-3.5-1.5m3.5 1.5l-2.6-2.9M494.5 296l3.4-2.7l2.1-2.7m-2.1 2.7l3.9-1.9M485.4 299.5l1.2 3.7l1.9 2.8m-1.9-2.8l.1 3.5M485.4 299.5l-4.9 .9l-3.6 1.3m3.6-1.3l-4.6-.1M483.2 290.3l-4.9 .9l-3.7 1.3m3.7-1.3l-4.6-.1M483.2 290.3l-1.1-3.7l-1.7-2.8m1.7 2.8l.2-3.5M496.1 277.5l-4.9 .9l-3.6 1.3m3.6-1.3l-4.6-.1M496.1 277.5l-1-3.7l-1.7-2.8m1.7 2.8l.1-3.5M508.3 276l-1.1-3.8l-1.7-2.8m1.7 2.8l.2-3.5M508.3 276l4.9-.8l3.7-1.2m-3.7 1.2l4.6 .2M531 297.8l-4.9 .9l-3.6 1.3m3.6-1.3l-4.6-.1M530.9 295.4l-3.7-2.6l-3.5-1.5m3.5 1.5l-2.5-2.9M530.4 289.2l-4.9 .9l-3.6 1.3m3.6-1.3l-4.6-.1M530.4 289.2l-1-3.7l-1.7-2.8m1.7 2.8l.1-3.5M546.6 288.5l-1.1-3.7l-1.7-2.8m1.7 2.8l.2-3.5M549.8 288.4l3.5-2.7l2.1-2.6m-2.1 2.6l3.9-1.9M541.5 283.5l-3.6-2.6l-3.5-1.6m3.5 1.6l-2.6-3M541.5 283.5l3.5-2.8l2.1-2.6m-2.1 2.6l3.9-1.9M544.3 278.7l-4.9 .8l-3.7 1.4m3.7-1.4l-4.7 0M544.3 278.7l-1.1-3.8l-1.7-2.8m1.7 2.8l.1-3.5M556.4 277.1l-1-3.7l-1.7-2.8m1.7 2.8l.1-3.5M556.4 277.1l4.9-.7l3.8-1.3m-3.8 1.3l4.7 .1M564.9 292.4l-1.1-3.8l-1.7-2.8m1.7 2.8l.2-3.5M568.1 292.3l3.4-2.7l2.1-2.7m-2.1 2.7l4-1.9M576.2 292l-1-3.7l-1.7-2.8m1.7 2.8l.1-3.5M576.2 292l5-.7l3.7-1.2m-3.7 1.2l4.6 .2M576.9 304.3l4.9-.7l3.7-1.2m-3.7 1.2l4.6 .2M576.9 306.8l3.6 2.7l3.4 1.6m-3.4-1.6l2.4 3M583.6 300.6l3.5-2.7l2.1-2.7m-2.1 2.7l3.9-1.9M583.6 300.6l3.5 2.7l3.5 1.6m-3.5-1.6l2.5 3M574 280.1l-3.7-2.6l-3.5-1.6m3.5 1.6l-2.5-3M574 280.1l3.5-2.8l2.1-2.6m-2.1 2.6l3.9-1.9M582.5 286.9l3.5-2.8l2.1-2.6m-2.1 2.6l3.9-1.9M582.5 286.9l3.5 2.6l3.5 1.7m-3.5-1.7l2.5 3.1M521.3 269.3l-3.3 2.8l-2 2.7m2-2.7l-3.9 2M521.3 269.3l-3.6-2.6l-3.6-1.6m3.6 1.6l-2.6-2.9M530.1 262.7l-3.6-2.6l-3.6-1.5m3.6 1.5l-2.6-2.9M530.1 262.7l3.5-2.7l2.1-2.7m-2.1 2.7l3.9-1.9M551.3 263.7l-3.6-2.6l-3.5-1.5m3.5 1.5l-2.6-2.9M551.3 263.7l3.5-2.7l2.1-2.7m-2.1 2.7l3.9-1.9M559.8 270.5l3.5-2.7l2.1-2.7m-2.1 2.7l3.9-1.9M559.8 270.5l3.6 2.7l3.4 1.6m-3.4-1.6l2.4 3M562.3 343.4l-4.9 .9l-3.6 1.3m3.6-1.3l-4.6-.1M562.2 341l-3.7-2.6l-3.5-1.6m3.5 1.6l-2.6-2.9M571.5 331.8l-3.7-2.6l-3.5-1.6m3.5 1.6l-2.5-3M574 330.3l.8-3.7l-.2-3.1m.2 3.1l1.8-3.3M568.8 331.1l-4.9 .8l-3.6 1.4m3.6-1.4l-4.6 0M568.7 328.7l-3.7-2.6l-3.5-1.6m3.5 1.6l-2.5-3M568.2 322.4l-4.9 .9l-3.6 1.4m3.6-1.4l-4.6 0M568.2 322.4l-1-3.7l-1.7-2.8m1.7 2.8l.1-3.5M584.4 321.8l-1.1-3.8l-1.7-2.8m1.7 2.8l.2-3.5M587.6 321.7l3.5-2.8l2.1-2.6m-2.1 2.6l3.9-1.8M579.3 316.7l-3.6-2.6l-3.5-1.5m3.5 1.5l-2.6-2.9M579.3 316.7l3.5-2.7l2.1-2.7m-2.1 2.7l3.9-1.9M607.5 328.8l-1-3.7l-1.7-2.8m1.7 2.8l.1-3.6M610.7 328.7l3.5-2.7l2.1-2.7m-2.1 2.7l3.9-1.9M622.7 336l3.5-2.8l2.1-2.6m-2.1 2.6l3.9-1.9M624.5 337.9l5 .7l4-.2m-4 .2l4.2 1.4M596.6 320.4l-3.7-2.6l-3.5-1.6m3.5 1.6l-2.5-3M599.2 318.9l.7-3.7l-.2-3.1m.2 3.1l1.8-3.3M605.7 315.2l-3.7-2.6l-3.5-1.6m3.5 1.6l-2.5-3M605.7 315.2l3.5-2.8l2.1-2.6m-2.1 2.6l3.9-1.8M615.5 325l3.5-2.8l2.1-2.6m-2.1 2.6l3.9-1.9M617.3 326.9l5 .7l4-.2m-4 .2l4.2 1.4M618.2 319l.7-3.8l-.2-3.1m.2 3.1l1.8-3.2M618.2 319l4.9 .6l4.1-.1m-4.1 .1l4.2 1.4M597.2 323.2l-4.9 .8l-3.7 1.4m3.7-1.4l-4.6 0M597 320.8l-3.7-2.6l-3.5-1.6m3.5 1.6l-2.5-3M596.5 314.6l-4.8 .8l-3.7 1.4m3.7-1.4l-4.7 0M596.5 314.6l-1-3.8l-1.7-2.8m1.7 2.8l.1-3.5M612.7 313.9l-1-3.7l-1.7-2.9m1.7 2.9l.1-3.6M615.9 313.8l3.5-2.7l2.1-2.7m-2.1 2.7l3.9-1.9M607.7 308.8l-3.7-2.6l-3.5-1.5m3.5 1.5l-2.5-2.9M607.7 308.8l3.5-2.7l2.1-2.7m-2.1 2.7l3.9-1.9M610.4 304l-4.9 .9l-3.7 1.3m3.7-1.3l-4.6-.1M610.4 304l-1.1-3.7l-1.7-2.8m1.7 2.8l.2-3.5M622.5 302.5l-1-3.8l-1.7-2.8m1.7 2.8l.1-3.5M622.5 302.5l5-.8l3.7-1.2m-3.7 1.2l4.6 .2M631 317.7l-1-3.7l-1.8-2.8m1.8 2.8l.1-3.5M634.2 317.7l3.5-2.8l2.1-2.6m-2.1 2.6l3.9-1.9M642.4 317.4l-1.1-3.7l-1.7-2.8m1.7 2.8l.2-3.5M642.4 317.4l4.9-.7l3.7-1.3m-3.7 1.3l4.6 .1M643 329.7l4.9-.7l3.7-1.3m-3.7 1.3l4.6 .1M643 332.1l3.6 2.7l3.4 1.7m-3.4-1.7l2.4 3M649.7 326l3.5-2.8l2.1-2.6m-2.1 2.6l3.9-1.9M649.7 326l3.6 2.7l3.4 1.6m-3.4-1.6l2.4 3M640.1 305.4l-3.6-2.6l-3.5-1.5m3.5 1.5l-2.6-2.9M640.1 305.4l3.5-2.7l2.1-2.7m-2.1 2.7l3.9-1.9M648.6 312.2l3.5-2.7l2.1-2.7m-2.1 2.7l3.9-1.9M648.6 312.2l3.6 2.7l3.4 1.7m-3.4-1.7l2.4 3M629.7 343.2l-1-3.7l-1.7-2.8m1.7 2.8l.1-3.6M632.9 343.1l3.5-2.7l2.1-2.7m-2.1 2.7l3.9-1.9M644.9 350.4l3.5-2.8l2.1-2.6m-2.1 2.6l3.9-1.9M646.7 352.3l5 .7l4-.2m-4 .2l4.2 1.4M645.8 348.4l-1-3.8l-1.7-2.8m1.7 2.8l.1-3.5M649 348.3l3.5-2.8l2.1-2.6m-2.1 2.6l3.9-1.8M657.2 348l-1-3.7l-1.7-2.8m1.7 2.8l.1-3.5M657.2 348l4.9-.7l3.8-1.2m-3.8 1.2l4.7 .2M657.8 360.3l5-.7l3.7-1.3m-3.7 1.3l4.6 .2M657.9 362.7l3.5 2.7l3.5 1.7m-3.5-1.7l2.4 3M664.6 356.6l3.5-2.8l2.1-2.6m-2.1 2.6l3.9-1.8M664.6 356.6l3.5 2.7l3.5 1.6m-3.5-1.6l2.4 3M648.2 377.8l4.9-.8l3.7-1.2m-3.7 1.2l4.6 .2M648.2 380.2l3.6 2.7l3.4 1.6m-3.4-1.6l2.4 3M638.5 389.2l3.5 2.7l3.5 1.6m-3.5-1.6l2.4 3M635.9 390.5l-1 3.8l.1 3.1m-.1-3.1l-1.9 3.2M659.4 369.6l3.5-2.7l2.1-2.7m-2.1 2.7l3.9-1.9M661.3 371.6l4.9 .7l4.1-.2m-4.1 .2l4.3 1.4M666.1 376.6l3.5-2.7l2.1-2.7m-2.1 2.7l3.9-1.9M666.1 376.6l3.6 2.7l3.4 1.6m-3.4-1.6l2.4 3M653.1 383.9l3.5 2.7l3.5 1.6m-3.5-1.6l2.4 3M650.5 385.3l-1 3.7l.1 3.1m-.1-3.1l-1.9 3.2M660.9 386l5 .7l4-.2m-4 .2l4.2 1.4M660.9 386l-.9 3.8l.1 3.1m-.1-3.1l-2 3.2M644.8 331.7l-3.7-2.6l-3.5-1.6m3.5 1.6l-2.5-3M647.3 330.2l.8-3.7l-.3-3.1m.3 3.1l1.8-3.3M653.9 326.5l-3.7-2.6l-3.5-1.6m3.5 1.6l-2.6-3M653.9 326.5l3.4-2.8l2.1-2.6m-2.1 2.6l4-1.9M663.7 336.3l3.4-2.8l2.1-2.6m-2.1 2.6l3.9-1.9M665.5 338.2l5 .7l4-.2m-4 .2l4.2 1.4M666.3 330.3l.8-3.8l-.2-3.1m.2 3.1l1.8-3.3M666.3 330.3l5 .6l4-.1m-4 .1l4.2 1.4M673.1 329.3l-3.7-2.6l-3.5-1.6m3.5 1.6l-2.5-3M673.1 329.3l3.5-2.8l2.1-2.6m-2.1 2.6l3.9-1.9M681.6 336.1l3.5-2.8l2.1-2.6m-2.1 2.6l3.9-1.9M681.6 336.1l3.6 2.7l3.4 1.6m-3.4-1.6l2.4 3M669.7 349.9l3.5-2.7l2.1-2.7m-2.1 2.7l3.9-1.9M671.5 351.9l5 .6l4-.1m-4 .1l4.2 1.5M676.4 356.9l3.5-2.7l2.1-2.7m-2.1 2.7l3.9-1.9M676.4 356.9l3.5 2.7l3.5 1.6m-3.5-1.6l2.4 3M663.3 364.2l3.6 2.7l3.4 1.6m-3.4-1.6l2.4 3M660.7 365.5l-1 3.8l.2 3.1m-.2-3.1l-1.9 3.2M671.2 366.3l4.9 .7l4.1-.2m-4.1 .2l4.2 1.4M671.2 366.3l-1 3.8l.1 3m-.1-3l-1.9 3.1M688.2 348.8l.8-3.8l-.3-3.1m.3 3.1l1.8-3.2M688.2 348.8l5 .7l4-.2m-4 .2l4.2 1.4M685.5 357.9l5 .7l4.1-.2m-4.1 .2l4.2 1.4M685.5 357.9l-.9 3.8l.1 3.1m-.1-3.1l-1.9 3.2M574.8 305l-3.3 2.9l-2 2.7m2-2.7l-3.8 1.9M572.9 303.1l-5-.5l-4 .3m4-.3l-4.3-1.3M567.8 298.2l-3.3 2.9l-2 2.7m2-2.7l-3.9 2M567.8 298.2l-3.7-2.6l-3.5-1.5m3.5 1.5l-2.5-2.9M580.5 290.6l-3.6-2.6l-3.5-1.5m3.5 1.5l-2.6-2.9M583.1 289.2l.8-3.8l-.3-3.1m.3 3.1l1.8-3.2M572.6 288.7l-5-.5l-4 .2m4-.2l-4.3-1.3M572.6 288.7l.8-3.8l-.3-3.1m.3 3.1l1.8-3.2M571.2 283.6l-3.4 2.8l-2 2.7m2-2.7l-3.8 2M571.2 283.6l-3.7-2.6l-3.5-1.6m3.5 1.6l-2.5-3M580 277l-3.7-2.6l-3.5-1.5m3.5 1.5l-2.5-2.9M580 277l3.5-2.7l2.1-2.7m-2.1 2.7l3.9-1.9M598.4 285.8l-3.6-2.6l-3.6-1.5m3.6 1.5l-2.6-2.9M601 284.4l.8-3.8l-.3-3.1m.3 3.1l1.8-3.2M607.5 280.6l-3.7-2.6l-3.5-1.5m3.5 1.5l-2.5-2.9M607.5 280.6l3.5-2.7l2.1-2.7m-2.1 2.7l3.9-1.9M617.3 290.4l3.5-2.7l2.1-2.7m-2.1 2.7l3.9-1.9M619.2 292.4l4.9 .6l4.1-.1m-4.1 .1l4.2 1.4M620 284.4l.8-3.8l-.3-3m.3 3l1.8-3.2M620 284.4l4.9 .7l4.1-.2m-4.1 .2l4.3 1.4M596.6 271.8l-4.9-.6l-4.1 .3m4.1-.3l-4.3-1.3M596.6 271.8l.8-3.8l-.3-3.1m.3 3.1l1.8-3.2M608.7 273.6l.8-3.7l-.3-3.1m.3 3.1l1.8-3.3M608.7 273.6l4.9 .7l4.1-.2m-4.1 .2l4.3 1.4M599.8 269.9l-3.3 2.8l-2 2.7m2-2.7l-3.9 2M599.8 269.9l-3.6-2.6l-3.6-1.5m3.6 1.5l-2.6-2.9M608.6 263.3l-3.6-2.6l-3.6-1.5m3.6 1.5l-2.6-2.9M608.6 263.3l3.5-2.7l2.1-2.6m-2.1 2.6l3.9-1.9M629.8 264.3l-3.6-2.6l-3.5-1.5m3.5 1.5l-2.6-2.9M629.8 264.3l3.5-2.7l2.1-2.7m-2.1 2.7l3.9-1.9M638.3 271.1l3.5-2.7l2.1-2.7m-2.1 2.7l3.9-1.9M638.3 271.1l3.6 2.7l3.4 1.7m-3.4-1.7l2.4 3M627.2 297.7l-3.7-2.6l-3.5-1.6m3.5 1.6l-2.5-3M629.7 296.2l.8-3.7l-.3-3.1m.3 3.1l1.8-3.3M636.2 292.5l-3.6-2.6l-3.5-1.6m3.5 1.6l-2.6-3M636.2 292.5l3.5-2.8l2.1-2.6m-2.1 2.6l3.9-1.9M646 302.3l3.5-2.8l2.1-2.6m-2.1 2.6l3.9-1.9M647.9 304.2l4.9 .7l4.1-.2m-4.1 .2l4.3 1.4M648.7 296.3l.8-3.8l-.2-3.1m.2 3.1l1.8-3.2M648.7 296.3l5 .6l4-.1m-4 .1l4.2 1.4M655.5 295.3l-3.7-2.6l-3.5-1.6m3.5 1.6l-2.5-3M655.5 295.3l3.5-2.8l2.1-2.6m-2.1 2.6l3.9-1.8M664 302.1l3.5-2.8l2.1-2.6m-2.1 2.6l3.9-1.8M664 302.1l3.5 2.7l3.5 1.6m-3.5-1.6l2.4 3M652.1 315.9l3.5-2.7l2.1-2.7m-2.1 2.7l3.9-1.9M653.9 317.9l5 .7l4-.2m-4 .2l4.2 1.4M658.8 322.9l3.5-2.7l2.1-2.7m-2.1 2.7l3.9-1.9M658.8 322.9l3.5 2.7l3.5 1.6m-3.5-1.6l2.4 3M645.7 330.2l3.5 2.7l3.5 1.6m-3.5-1.6l2.5 3M643.1 331.6l-1 3.7l.2 3.1m-.2-3.1l-1.9 3.2M653.6 332.3l4.9 .7l4.1-.2m-4.1 .2l4.2 1.4M653.6 332.3l-1 3.8l.1 3.1m-.1-3.1l-1.9 3.2M670.6 314.8l.8-3.8l-.3-3m.3 3l1.8-3.2M670.6 314.8l5 .7l4-.2m-4 .2l4.2 1.4M667.9 323.9l5 .7l4-.1m-4 .1l4.2 1.4M667.9 323.9l-.9 3.8l.1 3.1m-.1-3.1l-1.9 3.2M652.9 275.6l-5-.5l-4 .2m4-.2l-4.3-1.3M652.9 275.6l.8-3.8l-.3-3m.3 3l1.8-3.2M665 277.5l.8-3.8l-.3-3.1m.3 3.1l1.8-3.2M665 277.5l4.9 .6l4.1-.1m-4.1 .1l4.3 1.4M675.8 291.4l.8-3.8l-.3-3.1m.3 3.1l1.8-3.2M675.8 291.4l4.9 .6l4.1-.1m-4.1 .1l4.3 1.5M673.1 300.5l5 .7l4-.2m-4 .2l4.2 1.4M673.1 300.5l-.9 3.8l.1 3.1m-.1-3.1l-2 3.2"/>
<path stroke="#803399" stroke-width=".65" d="M483.3 397.1l-.9 4.2l.3 3.5m-.3-3.5l-2 3.7M479.9 396.2l-5.1 1.8l-3.6 2.2m3.6-2.2l-5.1 .8M471.2 385l-5.1 1.8l-3.6 2.1m3.6-2.1l-5.1 .8M470.3 382.4l-4.8-2.2l-4.3-1.1m4.3 1.1l-3.7-2.8M468.7 365l-5.1 1.8l-3.6 2.1m3.6-2.1l-5.1 .8M467.8 362.4l-4.8-2.2l-4.3-1.1m4.3 1.1l-3.7-2.8M475.2 350.6l-4.8-2.2l-4.3-1m4.3 1l-3.7-2.7M477.6 348.6l-.3-4.3l-1.3-3.3m1.3 3.3l1-3.8M472.4 375.7l-.9 4.3l.3 3.4m-.3-3.4l-2 3.6M469 374.8l-5.1 1.9l-3.6 2.1m3.6-2.1l-5 .7M460.3 363.6l-5.1 1.8l-3.5 2.1m3.5-2.1l-5 .8M459.4 361l-4.8-2.2l-4.3-1.1m4.3 1.1l-3.7-2.8M458.3 365.4l-.9 4.2l.3 3.5m-.3-3.5l-2 3.7M454.9 364.5l-5.1 1.8l-3.6 2.2m3.6-2.2l-5.1 .8M446.2 362.3l-.9 4.2l.3 3.5m-.3-3.5l-2 3.6M446.2 362.3l-5.5-.8l-4.6 .2m4.6-.2l-4.8-1.5M452.1 349.2l-5.6-.7l-4.5 .2m4.5-.2l-4.7-1.6M453.3 346.7l-2.3-3.9l-2.7-2.8m2.7 2.8l-.9-3.9M443 351.1l-5.1 1.8l-3.6 2.1m3.6-2.1l-5.1 .8M443 351.1l-2.3-3.9l-2.7-2.8m2.7 2.8l-.9-3.9M471.4 333.9l-5.6-.7l-4.5 .1m4.5-.1l-4.7-1.6M472.6 331.4l-2.3-3.9l-2.7-2.8m2.7 2.8l-.9-3.9M487.6 325l-2.3-3.9l-2.8-2.8m2.8 2.8l-.9-3.9M491 324.3l3-3.6l1.5-3.3m-1.5 3.3l3.7-2.7M455.3 339l-5.1 1.8l-3.6 2.1m3.6-2.1l-5.1 .8M454.4 336.4l-4.8-2.2l-4.4-1.1m4.4 1.1l-3.7-2.8M452 329.7l-5.1 1.8l-3.6 2.1m3.6-2.1l-5.1 .7M452 329.7l-2.3-3.9l-2.8-2.8m2.8 2.8l-.9-3.9M469.5 326l-2.3-3.9l-2.7-2.7m2.7 2.7l-.9-3.8M473 325.4l2.9-3.6l1.5-3.3m-1.5 3.3l3.7-2.8M462.4 321.4l-4.8-2.2l-4.3-1.1m4.3 1.1l-3.7-2.8M462.4 321.4l3-3.6l1.5-3.3m-1.5 3.3l3.7-2.8M511.4 322.1l-5.5-.7l-4.6 .1m4.6-.1l-4.7-1.6M512.7 319.6l-2.3-3.9l-2.8-2.8m2.8 2.8l-.9-3.9M527.6 313.2l-2.3-3.9l-2.7-2.8m2.7 2.8l-.9-3.9M531.1 312.5l3-3.6l1.5-3.3m-1.5 3.3l3.7-2.8M553.9 311.6l-2.2-3.9l-2.8-2.7m2.8 2.7l-1-3.9M557.4 311l3-3.6l1.5-3.3m-1.5 3.3l3.7-2.8M572.8 316.8l2.9-3.6l1.5-3.3m-1.5 3.3l3.8-2.8M575.4 318.6l5.6-.1l4.4-.9m-4.4 .9l5.1 .8M482.7 328.2l-5 1.8l-3.6 2.2m3.6-2.2l-5.1 .8M481.8 325.6l-4.8-2.2l-4.3-1.1m4.3 1.1l-3.7-2.8M489.2 313.8l-4.8-2.2l-4.3-1m4.3 1l-3.7-2.7M491.6 311.8l-.3-4.3l-1.2-3.3m1.2 3.3l1-3.8M486.1 313.6l-5.1 1.8l-3.6 2.1m3.6-2.1l-5.1 .7M485.2 310.9l-4.8-2.2l-4.4-1m4.4 1l-3.7-2.7M482.8 304.2l-5.1 1.8l-3.6 2.1m3.6-2.1l-5.1 .8M482.8 304.2l-2.3-3.9l-2.7-2.8m2.7 2.8l-.9-3.9M500.3 300.6l-2.3-3.9l-2.7-2.8m2.7 2.8l-.9-3.9M503.8 299.9l3-3.6l1.4-3.3m-1.4 3.3l3.7-2.7M493.2 295.9l-4.8-2.2l-4.3-1m4.3 1l-3.7-2.7M493.2 295.9l3-3.6l1.5-3.2m-1.5 3.2l3.7-2.7M527.8 304.2l-2.3-3.9l-2.7-2.8m2.7 2.8l-.9-3.9M531.3 303.5l3-3.6l1.5-3.2m-1.5 3.2l3.7-2.7M546.6 309.4l3-3.6l1.5-3.3m-1.5 3.3l3.7-2.8M549.3 311.2l5.6-.1l4.4-.9m-4.4 .9l5.1 .8M513.3 296.9l-4.8-2.2l-4.4-1.1m4.4 1.1l-3.7-2.8M515.6 294.9l-.3-4.3l-1.2-3.3m1.2 3.3l1-3.9M521.6 289.6l-4.8-2.2l-4.3-1.1m4.3 1.1l-3.7-2.8M521.6 289.6l3-3.6l1.5-3.3m-1.5 3.3l3.7-2.8M535.4 298.6l2.9-3.6l1.5-3.3m-1.5 3.3l3.8-2.8M538 300.4l5.6-.1l4.4-.9m-4.4 .9l5.1 .8M536.5 291.5l-.3-4.2l-1.3-3.3m1.3 3.3l.9-3.9M536.5 291.5l5.6-.1l4.4-.9m-4.4 .9l5.1 .8M495.9 340.5l-.9 4.2l.4 3.5m-.4-3.5l-2 3.6M492.6 339.6l-5.1 1.8l-3.6 2.1m3.6-2.1l-5.1 .8M483.9 328.4l-5.1 1.8l-3.6 2.1m3.6-2.1l-5.1 .7M483 325.7l-4.9-2.2l-4.3-1m4.3 1l-3.7-2.7M481.8 330.2l-.9 4.2l.3 3.4m-.3-3.4l-2 3.6M478.4 329.3l-5.1 1.8l-3.6 2.1m3.6-2.1l-5.1 .8M469.7 327l-.9 4.3l.4 3.4m-.4-3.4l-2 3.6M469.7 327l-5.5-.7l-4.6 .2m4.6-.2l-4.8-1.6M475.6 314l-5.6-.8l-4.5 .2m4.5-.2l-4.7-1.5M476.8 311.4l-2.3-3.9l-2.7-2.7m2.7 2.7l-.9-3.8M466.5 315.8l-5 1.8l-3.6 2.2m3.6-2.2l-5.1 .8M466.5 315.8l-2.2-3.9l-2.8-2.7m2.8 2.7l-1-3.8M494.9 298.7l-5.5-.8l-4.6 .2m4.6-.2l-4.8-1.6M496.1 296.1l-2.3-3.9l-2.7-2.7m2.7 2.7l-.9-3.8M511.1 289.7l-2.3-3.9l-2.7-2.7m2.7 2.7l-.9-3.8M514.6 289.1l2.9-3.6l1.5-3.3m-1.5 3.3l3.7-2.8M478.8 303.8l-5.1 1.8l-3.6 2.1m3.6-2.1l-5.1 .7M477.9 301.1l-4.8-2.2l-4.3-1m4.3 1l-3.7-2.7M475.5 294.4l-5.1 1.8l-3.6 2.1m3.6-2.1l-5.1 .8M475.5 294.4l-2.3-3.9l-2.7-2.8m2.7 2.8l-.9-3.9M493 290.8l-2.3-3.9l-2.7-2.8m2.7 2.8l-.9-3.9M496.5 290.2l3-3.7l1.5-3.2m-1.5 3.2l3.7-2.7M485.9 286.2l-4.8-2.2l-4.3-1.1m4.3 1.1l-3.7-2.8M485.9 286.2l3-3.7l1.5-3.2m-1.5 3.2l3.7-2.7M482.9 304.5l-.9 4.2l.3 3.5m-.3-3.5l-2 3.7M479.5 303.6l-5.1 1.8l-3.6 2.1m3.6-2.1l-5.1 .8M470.8 301.4l-.8 4.2l.3 3.4m-.3-3.4l-2 3.6M470.8 301.4l-5.5-.8l-4.6 .2m4.6-.2l-4.7-1.6M476.7 288.3l-5.6-.7l-4.5 .1m4.5-.1l-4.7-1.6M477.9 285.8l-2.3-3.9l-2.7-2.8m2.7 2.8l-.9-3.9M467.7 290.2l-5.1 1.8l-3.6 2.1m3.6-2.1l-5.1 .7M467.7 290.2l-2.3-3.9l-2.8-2.8m2.8 2.8l-1-3.9M462.2 286l-.9 4.2l.3 3.5m-.3-3.5l-2 3.7M462.2 286l-5.5-.7l-4.6 .1m4.6-.1l-4.8-1.6M465.2 275.8l-5.5-.8l-4.6 .2m4.6-.2l-4.8-1.6M465.2 275.8l1.1-4.2l-.2-3.5m.2 3.5l2.1-3.6M489.6 275.5l-5.5-.7l-4.6 .1m4.6-.1l-4.8-1.6M490.9 273l-2.3-3.9l-2.8-2.8m2.8 2.8l-1-3.9M494 266.4l-5.6-.7l-4.5 .1m4.5-.1l-4.7-1.6M494 266.4l1-4.2l-.1-3.5m.1 3.5l2.2-3.6M511 271.1l1.1-4.2l-.1-3.5m.1 3.5l2.2-3.6M514.4 272l5.1-1.6l3.7-2.1m-3.7 2.1l5.2-.7M508.8 264.2l-2.3-3.9l-2.8-2.8m2.8 2.8l-1-3.9M508.8 264.2l5.1-1.7l3.7-2m-3.7 2l5.1-.6M476.6 263.1l-5.1 1.8l-3.6 2.2m3.6-2.2l-5 .8M476.6 263.1l-2.3-3.9l-2.7-2.7m2.7 2.7l-.9-3.9M489.5 259.3l-2.3-3.9l-2.7-2.8m2.7 2.8l-.9-3.9M489.5 259.3l5.2-1.7l3.7-2m-3.7 2l5.1-.6M523.9 287.2l-5.5-.7l-4.6 .1m4.6-.1l-4.8-1.6M525.1 284.7l-2.2-3.9l-2.8-2.8m2.8 2.8l-1-3.9M540.1 278.3l-2.3-3.9l-2.7-2.8m2.7 2.8l-.9-3.9M543.6 277.6l2.9-3.6l1.5-3.3m-1.5 3.3l3.8-2.8M537.8 276.6l-5.6-.7l-4.5 .2m4.5-.2l-4.7-1.6M539 274.1l-2.3-3.9l-2.7-2.8m2.7 2.8l-.9-3.9M542.1 267.5l-5.5-.7l-4.6 .2m4.6-.2l-4.8-1.6M542.1 267.5l1.1-4.2l-.2-3.4m.2 3.4l2.1-3.5M559.2 272.2l1-4.2l-.1-3.4m.1 3.4l2.2-3.6M562.5 273.2l5.2-1.7l3.7-2m-3.7 2l5.1-.6M556.9 265.3l-2.3-3.9l-2.7-2.8m2.7 2.8l-.9-3.9M556.9 265.3l5.2-1.6l3.7-2.1m-3.7 2.1l5.1-.7M579 287.2l1.1-4.2l-.2-3.5m.2 3.5l2.1-3.6M582.3 288.1l5.2-1.6l3.7-2.1m-3.7 2.1l5.1-.7M590.5 299.6l5.2-1.7l3.7-2m-3.7 2l5.1-.6M591.3 302.2l4.7 2.4l4.3 1.2m-4.3-1.2l3.6 2.8M572.6 274.8l-2.3-3.9l-2.8-2.7m2.8 2.7l-.9-3.8M576 274.2l3-3.6l1.5-3.3m-1.5 3.3l3.7-2.8M584.9 272.5l-2.3-3.9l-2.7-2.8m2.7 2.8l-.9-3.9M584.9 272.5l5.2-1.7l3.7-2m-3.7 2l5.1-.6M589.4 285.9l5.2-1.7l3.7-2m-3.7 2l5.1-.7M590.2 288.5l4.7 2.3l4.3 1.2m-4.3-1.2l3.6 2.9M595.6 280.6l3-3.7l1.5-3.2m-1.5 3.2l3.7-2.7M595.6 280.6l4.7 2.3l4.3 1.2m-4.3-1.2l3.6 2.9M514.5 270.5l-5.1 1.8l-3.6 2.1m3.6-2.1l-5.1 .8M513.6 267.9l-4.8-2.2l-4.4-1.1m4.4 1.1l-3.7-2.8M511.2 261.1l-5.1 1.8l-3.6 2.2m3.6-2.2l-5.1 .8M511.2 261.1l-2.3-3.9l-2.8-2.7m2.8 2.7l-.9-3.8M528.7 257.5l-2.3-3.9l-2.7-2.8m2.7 2.8l-.9-3.9M532.1 256.9l3-3.7l1.5-3.2m-1.5 3.2l3.7-2.7M521.6 252.9l-4.8-2.2l-4.3-1.1m4.3 1.1l-3.7-2.8M521.6 252.9l3-3.7l1.5-3.2m-1.5 3.2l3.7-2.7M523.1 247.1l-5.1 1.8l-3.6 2.1m3.6-2.1l-5.1 .8M523.1 247.1l-2.3-3.9l-2.7-2.8m2.7 2.8l-.9-3.9M536 243.3l-2.3-3.9l-2.8-2.8m2.8 2.8l-1-3.9M536 243.3l5.1-1.7l3.7-2m-3.7 2l5.1-.6M549.9 258.5l-2.3-3.9l-2.7-2.8m2.7 2.8l-.9-3.9M553.4 257.9l3-3.7l1.4-3.2m-1.4 3.2l3.7-2.7M562.3 256.1l-2.3-3.9l-2.8-2.7m2.8 2.7l-.9-3.8M562.3 256.1l5.1-1.6l3.7-2.1m-3.7 2.1l5.2-.7M566.7 269.5l5.2-1.7l3.7-2m-3.7 2l5.1-.6M567.5 272.1l4.7 2.4l4.3 1.2m-4.3-1.2l3.6 2.8M573 264.2l2.9-3.6l1.5-3.3m-1.5 3.3l3.8-2.8M573 264.2l4.7 2.3l4.3 1.2m-4.3-1.2l3.5 2.9M556.2 243.4l-4.9-2.2l-4.3-1.1m4.3 1.1l-3.7-2.8M556.2 243.4l2.9-3.6l1.5-3.3m-1.5 3.3l3.7-2.8M567.5 249.3l3-3.6l1.5-3.3m-1.5 3.3l3.7-2.7M567.5 249.3l4.8 2.4l4.2 1.2m-4.2-1.2l3.5 2.8M561.7 320.4l-5.5-.7l-4.6 .2m4.6-.2l-4.8-1.6M562.9 317.9l-2.2-3.9l-2.8-2.8m2.8 2.8l-1-3.9M577.9 311.5l-2.3-3.9l-2.7-2.8m2.7 2.8l-.9-3.9M581.4 310.8l2.9-3.6l1.5-3.2m-1.5 3.2l3.8-2.7M604.2 310l-2.3-3.9l-2.7-2.8m2.7 2.8l-.9-3.9M607.7 309.3l3-3.6l1.5-3.3m-1.5 3.3l3.7-2.8M623 315.1l3-3.6l1.5-3.2m-1.5 3.2l3.7-2.7M625.7 317l5.6-.2l4.4-.9m-4.4 .9l5.1 .8M590 312.6l-5.5-.8l-4.5 .2m4.5-.2l-4.7-1.6M591.3 310l-2.3-3.9l-2.7-2.8m2.7 2.8l-.9-3.9M606.2 303.6l-2.3-3.9l-2.7-2.8m2.7 2.8l-.9-3.9M609.7 303l3-3.7l1.5-3.2m-1.5 3.2l3.7-2.7M603.9 302l-5.5-.7l-4.6 .1m4.6-.1l-4.8-1.6M605.1 299.5l-2.3-3.9l-2.7-2.8m2.7 2.8l-.9-3.9M608.2 292.9l-5.5-.7l-4.6 .1m4.6-.1l-4.8-1.6M608.2 292.9l1.1-4.2l-.2-3.5m.2 3.5l2.2-3.6M625.3 297.6l1.1-4.2l-.2-3.5m.2 3.5l2.1-3.6M628.6 298.5l5.2-1.6l3.7-2.1m-3.7 2.1l5.1-.7M623 290.7l-2.3-3.9l-2.7-2.8m2.7 2.8l-.9-3.9M623 290.7l5.2-1.7l3.7-2m-3.7 2l5.1-.6M645.1 312.5l1.1-4.2l-.2-3.4m.2 3.4l2.2-3.6M648.5 313.5l5.1-1.7l3.7-2m-3.7 2l5.1-.6M656.6 325l5.2-1.7l3.7-2m-3.7 2l5.1-.6M657.4 327.6l4.7 2.3l4.3 1.2m-4.3-1.2l3.6 2.9M638.7 300.2l-2.3-3.9l-2.7-2.8m2.7 2.8l-.9-3.9M642.2 299.6l2.9-3.7l1.5-3.2m-1.5 3.2l3.8-2.7M651.1 297.8l-2.3-3.9l-2.8-2.7m2.8 2.7l-.9-3.8M651.1 297.8l5.1-1.6l3.7-2.1m-3.7 2.1l5.2-.7M655.5 311.2l5.2-1.7l3.7-2m-3.7 2l5.1-.6M656.3 313.9l4.7 2.3l4.3 1.2m-4.3-1.2l3.6 2.8M661.8 305.9l2.9-3.6l1.5-3.3m-1.5 3.3l3.8-2.8M661.8 305.9l4.7 2.3l4.3 1.2m-4.3-1.2l3.5 2.9M660 343.1l1-4.2l-.1-3.4m.1 3.4l2.2-3.5M663.3 344.1l5.2-1.7l3.7-2m-3.7 2l5.1-.6M671.5 355.6l5.1-1.7l3.7-2m-3.7 2l5.2-.6M672.3 358.2l4.7 2.3l4.3 1.2m-4.3-1.2l3.5 2.9M673 375.6l5.2-1.7l3.7-2m-3.7 2l5.1-.6M673.8 378.2l4.7 2.4l4.3 1.2m-4.3-1.2l3.6 2.8M665.9 389.8l4.7 2.3l4.3 1.2m-4.3-1.2l3.5 2.9M663.4 391.8l.1 4.2l1.1 3.4m-1.1-3.4l-1.1 3.9M652.4 321.2l-2.3-3.9l-2.7-2.7m2.7 2.7l-.9-3.8M655.9 320.6l3-3.6l1.5-3.3m-1.5 3.3l3.7-2.8M671.2 326.4l3-3.6l1.5-3.3m-1.5 3.3l3.7-2.7M673.9 328.3l5.6-.2l4.4-.9m-4.4 .9l5.1 .8M671.7 324.1l-2.3-3.9l-2.7-2.8m2.7 2.8l-.9-3.9M675.1 323.4l3-3.6l1.5-3.3m-1.5 3.3l3.7-2.8M684 321.7l-2.2-3.9l-2.8-2.8m2.8 2.8l-1-3.9M684 321.7l5.2-1.7l3.7-2m-3.7 2l5.1-.6M688.5 335.1l5.2-1.7l3.7-2m-3.7 2l5.1-.6M689.3 337.7l4.7 2.3l4.3 1.2m-4.3-1.2l3.6 2.9M694.7 329.8l3-3.7l1.5-3.2m-1.5 3.2l3.7-2.7M694.7 329.8l4.7 2.3l4.3 1.2m-4.3-1.2l3.6 2.9M683.3 355.9l5.1-1.7l3.7-2m-3.7 2l5.2-.6M684.1 358.5l4.7 2.4l4.3 1.2m-4.3-1.2l3.5 2.8M676.1 370.1l4.7 2.3l4.3 1.2m-4.3-1.2l3.6 2.9M673.7 372.1l.1 4.2l1.1 3.4m-1.1-3.4l-1.2 3.9M693.1 345l3-3.7l1.5-3.2m-1.5 3.2l3.7-2.7M695.7 346.8l5.7-.2l4.4-.8m-4.4 .8l5 .8M702.6 351.4l3-3.6l1.5-3.3m-1.5 3.3l3.7-2.7M702.6 351.4l4.7 2.4l4.3 1.1m-4.3-1.1l3.6 2.8M690.5 361.7l4.7 2.3l4.3 1.2m-4.3-1.2l3.6 2.9M688.1 363.7l.1 4.3l1 3.3m-1-3.3l-1.2 3.8M699.8 362.7l5.6-.2l4.4-.9m-4.4 .9l5.1 .8M699.8 362.7l.1 4.2l1.1 3.4m-1.1-3.4l-1.2 3.9M561 299.4l-5.1 1.8l-3.6 2.2m3.6-2.2l-5.1 .8M560.1 296.8l-4.9-2.2l-4.3-1.1m4.3 1.1l-3.6-2.8M567.5 285l-4.8-2.2l-4.4-1m4.4 1l-3.7-2.7M569.8 283l-.3-4.3l-1.2-3.3m1.2 3.3l1-3.8M564.3 284.8l-5 1.8l-3.6 2.1m3.6-2.1l-5.1 .7M563.4 282.1l-4.8-2.2l-4.3-1m4.3 1l-3.7-2.7M561 275.4l-5.1 1.8l-3.6 2.1m3.6-2.1l-5.1 .8M561 275.4l-2.3-3.9l-2.7-2.8m2.7 2.8l-.9-3.9M578.5 271.8l-2.2-3.9l-2.8-2.8m2.8 2.8l-1-3.9M582 271.1l3-3.6l1.5-3.3m-1.5 3.3l3.7-2.7M571.5 267.1l-4.9-2.2l-4.3-1m4.3 1l-3.6-2.7M571.5 267.1l2.9-3.6l1.5-3.2m-1.5 3.2l3.8-2.7M606.1 275.4l-2.3-3.9l-2.8-2.8m2.8 2.8l-1-3.9M609.5 274.7l3-3.6l1.5-3.2m-1.5 3.2l3.7-2.7M624.9 280.6l3-3.6l1.4-3.3m-1.4 3.3l3.7-2.8M627.5 282.4l5.6-.1l4.4-.9m-4.4 .9l5.1 .8M591.5 268.1l-4.8-2.2l-4.3-1.1m4.3 1.1l-3.7-2.8M593.9 266.1l-.3-4.3l-1.3-3.3m1.3 3.3l.9-3.9M599.9 260.8l-4.9-2.2l-4.3-1.1m4.3 1.1l-3.7-2.8M599.9 260.8l2.9-3.6l1.5-3.3m-1.5 3.3l3.7-2.8M613.6 269.8l3-3.6l1.5-3.3m-1.5 3.3l3.7-2.8M616.2 271.6l5.7-.1l4.4-.9m-4.4 .9l5 .8M614.7 262.7l-.3-4.2l-1.2-3.3m1.2 3.3l1-3.9M614.7 262.7l5.6-.1l4.4-.9m-4.4 .9l5.1 .8M593 271.1l-5.1 1.8l-3.6 2.1m3.6-2.1l-5.1 .8M592.1 268.5l-4.8-2.2l-4.4-1.1m4.4 1.1l-3.7-2.8M589.7 261.8l-5.1 1.8l-3.6 2.1m3.6-2.1l-5.1 .7M589.7 261.8l-2.3-3.9l-2.8-2.8m2.8 2.8l-1-3.9M607.2 258.1l-2.3-3.9l-2.7-2.7m2.7 2.7l-.9-3.8M610.6 257.5l3-3.6l1.5-3.3m-1.5 3.3l3.7-2.8M600.1 253.5l-4.8-2.2l-4.3-1.1m4.3 1.1l-3.7-2.8M600.1 253.5l3-3.6l1.5-3.3m-1.5 3.3l3.7-2.8M601.6 247.7l-5.1 1.8l-3.6 2.2m3.6-2.2l-5.1 .8M601.6 247.7l-2.3-3.9l-2.7-2.7m2.7 2.7l-.9-3.8M614.5 243.9l-2.3-3.9l-2.8-2.8m2.8 2.8l-1-3.9M614.5 243.9l5.1-1.7l3.7-2m-3.7 2l5.1-.6M628.4 259.1l-2.3-3.9l-2.7-2.8m2.7 2.8l-.9-3.9M631.9 258.5l2.9-3.6l1.5-3.3m-1.5 3.3l3.8-2.8M640.8 256.8l-2.3-3.9l-2.8-2.8m2.8 2.8l-.9-3.9M640.8 256.8l5.1-1.7l3.7-2m-3.7 2l5.2-.6M645.2 270.1l5.2-1.6l3.7-2.1m-3.7 2.1l5.1-.7M646 272.8l4.7 2.3l4.3 1.2m-4.3-1.2l3.6 2.9M651.5 264.8l2.9-3.6l1.5-3.3m-1.5 3.3l3.7-2.7M651.5 264.8l4.7 2.4l4.3 1.1m-4.3-1.1l3.5 2.8M634.6 244l-4.8-2.2l-4.3-1.1m4.3 1.1l-3.7-2.8M634.6 244l3-3.6l1.5-3.3m-1.5 3.3l3.7-2.8M646 250l3-3.7l1.5-3.2m-1.5 3.2l3.7-2.7M646 250l4.8 2.3l4.2 1.2m-4.2-1.2l3.5 2.8M634.8 287.2l-2.3-3.8l-2.7-2.8m2.7 2.8l-.9-3.9M638.3 286.6l3-3.6l1.4-3.3m-1.4 3.3l3.7-2.8M653.6 292.4l3-3.6l1.5-3.3m-1.5 3.3l3.7-2.7M656.3 294.3l5.6-.2l4.4-.9m-4.4 .9l5.1 .8M654.1 290.1l-2.3-3.9l-2.8-2.8m2.8 2.8l-.9-3.9M657.5 289.4l3-3.6l1.5-3.3m-1.5 3.3l3.7-2.8M666.4 287.7l-2.3-3.9l-2.7-2.8m2.7 2.8l-.9-3.9M666.4 287.7l5.2-1.7l3.7-2m-3.7 2l5.1-.6M670.9 301.1l5.2-1.7l3.7-2m-3.7 2l5.1-.6M671.7 303.7l4.7 2.3l4.3 1.2m-4.3-1.2l3.5 2.9M677.1 295.8l3-3.6l1.5-3.3m-1.5 3.3l3.7-2.8M677.1 295.8l4.7 2.3l4.3 1.2m-4.3-1.2l3.6 2.9M665.7 321.9l5.1-1.7l3.7-2m-3.7 2l5.2-.6M666.5 324.5l4.7 2.4l4.2 1.2m-4.2-1.2l3.5 2.8M658.5 336.1l4.7 2.3l4.3 1.2m-4.3-1.2l3.6 2.9M656.1 338.1l.1 4.2l1 3.4m-1-3.4l-1.2 3.9M675.5 311l3-3.6l1.5-3.3m-1.5 3.3l3.7-2.8M678.1 312.8l5.7-.1l4.4-.9m-4.4 .9l5 .8M685 317.4l3-3.6l1.5-3.2m-1.5 3.2l3.7-2.7M685 317.4l4.7 2.4l4.3 1.2m-4.3-1.2l3.6 2.8M672.9 327.7l4.7 2.3l4.3 1.2m-4.3-1.2l3.6 2.9M670.4 329.7l.1 4.3l1.1 3.3m-1.1-3.3l-1.1 3.8M682.2 328.7l5.6-.2l4.4-.8m-4.4 .8l5.1 .8M682.2 328.7l.1 4.3l1 3.3m-1-3.3l-1.2 3.8M647.8 272l-4.8-2.2l-4.4-1.1m4.4 1.1l-3.7-2.8M650.1 269.9l-.3-4.2l-1.2-3.4m1.2 3.4l1-3.9M656.1 264.6l-4.8-2.2l-4.3-1m4.3 1l-3.7-2.7M656.1 264.6l3-3.6l1.5-3.2m-1.5 3.2l3.7-2.7M669.9 273.6l3-3.6l1.4-3.2m-1.4 3.2l3.7-2.7M672.5 275.5l5.6-.2l4.4-.9m-4.4 .9l5.1 .8M671 266.6l-.3-4.3l-1.3-3.3m1.3 3.3l1-3.8M671 266.6l5.6-.2l4.4-.8m-4.4 .8l5.1 .8M678.1 264.3l-4.8-2.2l-4.3-1.1m4.3 1.1l-3.7-2.8M678.1 264.3l3-3.6l1.5-3.3m-1.5 3.3l3.7-2.8M689.5 270.3l3-3.7l1.5-3.2m-1.5 3.2l3.7-2.7M689.5 270.3l4.7 2.3l4.3 1.2m-4.3-1.2l3.6 2.9M680.7 287.6l2.9-3.7l1.5-3.2m-1.5 3.2l3.8-2.7M683.3 289.4l5.6-.2l4.4-.9m-4.4 .9l5.1 .8M690.2 294l2.9-3.6l1.5-3.3m-1.5 3.3l3.8-2.7M690.2 294l4.7 2.4l4.3 1.1m-4.3-1.1l3.5 2.8M678.1 304.3l4.7 2.3l4.3 1.2m-4.3-1.2l3.5 2.9M675.6 306.3l.1 4.3l1.1 3.3m-1.1-3.3l-1.1 3.8M687.3 305.3l5.6-.2l4.5-.9m-4.5 .9l5.1 .8M687.3 305.3l.1 4.2l1.1 3.4m-1.1-3.4l-1.1 3.9M700.7 283l-.3-4.2l-1.3-3.3m1.3 3.3l.9-3.9M700.7 283l5.6-.1l4.4-.9m-4.4 .9l5 .8M700.5 293.5l5.6-.1l4.5-.9m-4.5 .9l5.1 .8M700.5 293.5l.1 4.3l1.1 3.4m-1.1-3.4l-1.1 3.9"/>
<path stroke="#803399" stroke-width=".73" d="M440.7 366.6l-3.3 4l-1.7 3.7m1.7-3.7l-4.2 3.1M437.8 364.5l-6.3 .2l-5 1m5-1l-5.7-.9M435.3 350l-6.3 .2l-4.9 1m4.9-1l-5.7-.9M435.9 347l-3.7-3.8l-3.9-2.6m3.9 2.6l-2.3-4.1M444.2 328.6l-6.3 .2l-4.9 1m4.9-1l-5.7-.9M444.8 325.6l-3.7-3.9l-3.8-2.5m3.8 2.5l-2.2-4.1M459.2 315.9l-3.7-3.8l-3.8-2.6m3.8 2.6l-2.2-4.1M462.8 314.6l2.2-4.5l.6-3.8m-.6 3.8l3.2-3.7M475 303.2l-6.2 .1l-5 1m5-1l-5.7-.9M475.6 300.1l-3.7-3.8l-3.8-2.6m3.8 2.6l-2.2-4.1M490 290.5l-3.7-3.9l-3.8-2.5m3.8 2.5l-2.2-4.1M493.7 289.2l2.1-4.5l.6-3.9m-.6 3.9l3.2-3.7M518.4 284.1l-3.7-3.8l-3.8-2.6m3.8 2.6l-2.2-4.1M522 282.8l2.2-4.5l.6-3.8m-.6 3.8l3.2-3.7M540.7 286.5l2.1-4.5l.6-3.9m-.6 3.9l3.2-3.7M544.1 288l6.1-1.1l4.6-1.8m-4.6 1.8l5.8-.1M464.3 331.3l-3.4 4.1l-1.7 3.6m1.7-3.6l-4.1 3.1M461.3 329.3l-6.3 .1l-4.9 1m4.9-1l-5.7-.8M458.8 314.8l-6.3 .2l-4.9 1m4.9-1l-5.7-.9M459.4 311.8l-3.7-3.9l-3.9-2.5m3.9 2.5l-2.2-4.1M467.8 293.4l-6.3 .1l-5 1m5-1l-5.7-.9M468.3 290.4l-3.7-3.9l-3.8-2.6m3.8 2.6l-2.2-4.1M482.8 280.7l-3.7-3.9l-3.9-2.5m3.9 2.5l-2.3-4.1M486.4 279.4l2.1-4.5l.6-3.9m-.6 3.9l3.2-3.7M465.4 305.7l-3.4 4l-1.7 3.7m1.7-3.7l-4.1 3.1M462.4 303.6l-6.3 .2l-4.9 1m4.9-1l-5.7-.9M459.9 289.1l-6.3 .2l-4.9 1m4.9-1l-5.7-.9M460.5 286.1l-3.7-3.9l-3.9-2.5m3.9 2.5l-2.2-4M456.7 290.3l-3.3 4.1l-1.7 3.6m1.7-3.6l-4.2 3M453.8 288.3l-6.3 .1l-5 1m5-1l-5.7-.9M446.1 283.1l-3.3 4l-1.7 3.7m1.7-3.7l-4.2 3.1M446.1 283.1l-5.3-2.6l-4.8-1.4m4.8 1.4l-4-3.3M459.7 271.5l-5.3-2.6l-4.8-1.3m4.8 1.3l-4-3.2M462.4 269.3l-.1-4.8l-1.2-3.7m1.2 3.7l1.3-4.3M449.3 270.4l-6.3 .2l-5 1m5-1l-5.7-.9M449.3 270.4l-.1-4.7l-1.3-3.8m1.3 3.8l1.2-4.3M488.4 262.2l-5.3-2.6l-4.8-1.4m4.8 1.4l-3.9-3.3M491.2 259.9l-.2-4.7l-1.2-3.8m1.2 3.8l1.3-4.3M510.3 258.3l-.1-4.8l-1.3-3.7m1.3 3.7l1.2-4.3M514.2 258.8l5.2-2.7l3.4-2.9m-3.4 2.9l5.4-1.6M468.9 262.1l-6.3 .1l-4.9 1m4.9-1l-5.7-.9M469.5 259.1l-3.7-3.9l-3.9-2.6m3.9 2.6l-2.2-4.1M470.8 251.3l-6.2 .2l-5 1m5-1l-5.7-.9M470.8 251.3l-.1-4.8l-1.2-3.7m1.2 3.7l1.3-4.3M491 253.4l-.1-4.8l-1.2-3.7m1.2 3.7l1.3-4.3M495 253.9l5.1-2.7l3.4-2.9m-3.4 2.9l5.4-1.6M486.4 246.3l-3.7-3.9l-3.9-2.6m3.9 2.6l-2.2-4.1M486.4 246.3l5.1-2.8l3.5-2.8m-3.5 2.8l5.5-1.6M536.5 263.3l-5.2-2.6l-4.8-1.3m4.8 1.3l-4-3.2M539.3 261.1l-.1-4.8l-1.2-3.8m1.2 3.8l1.3-4.3M558.4 259.5l-.1-4.8l-1.2-3.8m1.2 3.8l1.3-4.3M562.4 259.9l5.1-2.7l3.4-2.9m-3.4 2.9l5.4-1.6M586.5 266.6l-.2-4.8l-1.2-3.7m1.2 3.7l1.3-4.3M590.4 267.1l5.2-2.7l3.4-2.9m-3.4 2.9l5.4-1.6M602.9 278.2l5.1-2.7l3.5-2.9m-3.5 2.9l5.4-1.6M604.6 281l5.8 1.7l5.1 .6m-5.1-.6l4.8 2.5M503.4 260.1l-6.3 .1l-4.9 1m4.9-1l-5.7-.8M504 257.1l-3.7-3.9l-3.9-2.6m3.9 2.6l-2.2-4.1M518.4 247.4l-3.7-3.9l-3.8-2.5m3.8 2.5l-2.2-4M522 246.1l2.2-4.5l.6-3.9m-.6 3.9l3.2-3.7M515.4 246.1l-6.3 .1l-5 1m5-1l-5.7-.9M515.9 243.1l-3.7-3.9l-3.8-2.6m3.8 2.6l-2.2-4.1M517.3 235.3l-6.3 .2l-4.9 1m4.9-1l-5.7-.9M517.3 235.3l-.1-4.8l-1.2-3.7m1.2 3.7l1.3-4.3M537.5 237.4l-.1-4.8l-1.3-3.7m1.3 3.7l1.2-4.3M541.4 237.9l5.2-2.8l3.4-2.8m-3.4 2.8l5.4-1.6M532.9 230.3l-3.8-3.9l-3.8-2.6m3.8 2.6l-2.2-4.1M532.9 230.3l5.1-2.8l3.4-2.9m-3.4 2.9l5.4-1.6M563.8 250.3l-.1-4.8l-1.2-3.8m1.2 3.8l1.3-4.3M567.7 250.8l5.2-2.8l3.4-2.9m-3.4 2.9l5.4-1.6M580.2 261.9l5.2-2.8l3.4-2.8m-3.4 2.8l5.4-1.6M581.9 264.6l5.9 1.8l5 .5m-5-.5l4.7 2.5M553 237.9l-3.7-3.8l-3.9-2.6m3.9 2.6l-2.2-4.1M556.6 236.6l2.1-4.5l.7-3.8m-.7 3.8l3.3-3.7M565.8 233.2l-3.7-3.9l-3.9-2.6m3.9 2.6l-2.2-4.1M565.8 233.2l5.2-2.8l3.4-2.9m-3.4 2.9l5.4-1.6M574.8 247l5.1-2.7l3.5-2.9m-3.5 2.9l5.5-1.6M576.5 249.8l5.8 1.7l5.1 .5m-5.1-.5l4.8 2.5M580 240.1l2.2-4.5l.6-3.8m-.6 3.8l3.2-3.7M580 240.1l5.9 1.7l5 .6m-5-.6l4.8 2.5M602.7 288.7l-5.3-2.6l-4.8-1.4m4.8 1.4l-4-3.3M605.4 286.4l-.1-4.7l-1.2-3.8m1.2 3.8l1.3-4.3M624.5 284.8l-.1-4.8l-1.2-3.7m1.2 3.7l1.3-4.3M628.5 285.3l5.1-2.7l3.5-2.9m-3.5 2.9l5.5-1.6M652.6 292l-.1-4.8l-1.3-3.8m1.3 3.8l1.3-4.3M656.5 292.5l5.2-2.8l3.4-2.8m-3.4 2.8l5.4-1.6M669 303.6l5.2-2.7l3.4-2.9m-3.4 2.9l5.4-1.6M670.7 306.4l5.9 1.7l5 .5m-5-.5l4.7 2.5M685.6 315.8l-.2-4.7l-1.2-3.8m1.2 3.8l1.3-4.4M689.5 316.3l5.2-2.7l3.4-2.9m-3.4 2.9l5.4-1.6M702 327.4l5.1-2.7l3.5-2.9m-3.5 2.9l5.5-1.6M703.7 330.2l5.8 1.7l5.1 .6m-5.1-.6l4.8 2.5M709.8 349.1l5.2-2.7l3.4-2.9m-3.4 2.9l5.4-1.6M711.5 351.9l5.9 1.7l5.1 .5m-5.1-.5l4.8 2.5M706.3 365.9l5.9 1.8l5.1 .5m-5.1-.5l4.8 2.5M704.3 368.5l1.4 4.7l2.2 3.5m-2.2-3.5l-.1 4.4M553.3 274.4l-6.3 .1l-5 1m5-1l-5.7-.9M553.9 271.3l-3.8-3.8l-3.8-2.6m3.8 2.6l-2.2-4.1M568.3 261.7l-3.7-3.9l-3.9-2.5m3.9 2.5l-2.2-4.1M571.9 260.4l2.1-4.5l.7-3.9m-.7 3.9l3.3-3.7M596.7 255.3l-3.7-3.8l-3.9-2.6m3.9 2.6l-2.2-4.1M600.3 254l2.1-4.5l.7-3.8m-.7 3.8l3.3-3.7M618.9 257.7l2.1-4.5l.7-3.9m-.7 3.9l3.3-3.7M622.3 259.2l6.2-1.1l4.5-1.8m-4.5 1.8l5.8-.1M581.9 260.7l-6.3 .2l-4.9 1m4.9-1l-5.7-.9M582.5 257.7l-3.7-3.9l-3.9-2.5m3.9 2.5l-2.2-4.1M596.9 248l-3.7-3.8l-3.8-2.6m3.8 2.6l-2.2-4.1M600.5 246.7l2.2-4.5l.6-3.8m-.6 3.8l3.2-3.7M593.9 246.7l-6.3 .1l-5 1m5-1l-5.7-.8M594.4 243.7l-3.7-3.9l-3.8-2.6m3.8 2.6l-2.2-4.1M595.8 235.9l-6.3 .2l-4.9 1m4.9-1l-5.7-.9M595.8 235.9l-.1-4.8l-1.2-3.7m1.2 3.7l1.3-4.3M616 238l-.1-4.8l-1.3-3.7m1.3 3.7l1.2-4.3M619.9 238.5l5.2-2.7l3.4-2.9m-3.4 2.9l5.4-1.6M611.3 230.9l-3.7-3.9l-3.8-2.5m3.8 2.5l-2.2-4.1M611.3 230.9l5.2-2.8l3.4-2.8m-3.4 2.8l5.4-1.6M642.3 250.9l-.1-4.8l-1.3-3.8m1.3 3.8l1.3-4.3M646.2 251.4l5.2-2.8l3.4-2.8m-3.4 2.8l5.4-1.6M658.7 262.5l5.2-2.7l3.4-2.9m-3.4 2.9l5.4-1.6M660.4 265.3l5.9 1.7l5 .5m-5-.5l4.7 2.5M631.5 238.6l-3.7-3.9l-3.9-2.6m3.9 2.6l-2.2-4.1M635.1 237.2l2.1-4.5l.7-3.8m-.7 3.8l3.2-3.6M644.3 233.8l-3.7-3.9l-3.9-2.5m3.9 2.5l-2.2-4.1M644.3 233.8l5.2-2.8l3.4-2.8m-3.4 2.8l5.4-1.6M653.3 247.6l5.1-2.7l3.5-2.9m-3.5 2.9l5.5-1.6M655 250.4l5.8 1.7l5.1 .6m-5.1-.6l4.8 2.5M658.5 240.7l2.1-4.5l.7-3.8m-.7 3.8l3.3-3.6M658.5 240.7l5.9 1.7l5 .6m-5-.6l4.8 2.6M667.9 281.8l-.1-4.7l-1.2-3.8m1.2 3.8l1.3-4.3M671.9 282.3l5.2-2.7l3.4-2.9m-3.4 2.9l5.4-1.6M684.4 293.5l5.1-2.8l3.5-2.9m-3.5 2.9l5.4-1.6M686 296.2l5.9 1.7l5.1 .6m-5.1-.6l4.8 2.5M692.2 315.1l5.2-2.7l3.4-2.9m-3.4 2.9l5.4-1.6M693.9 317.9l5.9 1.7l5 .5m-5-.5l4.8 2.5M688.7 332l5.9 1.7l5.1 .5m-5.1-.5l4.8 2.5M686.7 334.6l1.4 4.6l2.2 3.5m-2.2-3.5l-.1 4.4M653 259.2l-3.8-3.9l-3.8-2.5m3.8 2.5l-2.2-4.1M656.6 257.9l2.1-4.5l.6-3.9m-.6 3.9l3.2-3.7M675.2 261.5l2.1-4.5l.7-3.8m-.7 3.8l3.3-3.6M678.6 263.1l6.1-1.2l4.6-1.7m-4.6 1.7l5.9 0M674.9 258.9l-3.7-3.9l-3.8-2.6m3.8 2.6l-2.2-4.1M678.5 257.5l2.2-4.5l.6-3.8m-.6 3.8l3.2-3.6M687.8 254.1l-3.7-3.9l-3.9-2.5m3.9 2.5l-2.3-4.1M687.8 254.1l5.1-2.8l3.4-2.8m-3.4 2.8l5.4-1.6M696.7 267.9l5.2-2.7l3.4-2.9m-3.4 2.9l5.4-1.6M698.4 270.7l5.9 1.7l5.1 .6m-5.1-.6l4.8 2.5M702 261l2.1-4.5l.6-3.8m-.6 3.8l3.2-3.6M702 261l5.8 1.7l5.1 .6m-5.1-.6l4.8 2.6M697.4 291.7l5.2-2.7l3.4-2.9m-3.4 2.9l5.4-1.6M699.1 294.5l5.9 1.7l5 .5m-5-.5l4.7 2.5M693.9 308.5l5.9 1.8l5 .5m-5-.5l4.8 2.5M691.8 311.1l1.5 4.7l2.2 3.5m-2.2-3.5l-.1 4.4M704.8 278l2.2-4.5l.6-3.9m-.6 3.9l3.2-3.7M708.3 279.5l6.1-1.1l4.6-1.8m-4.6 1.8l5.8-.1M717.2 283.4l2.2-4.5l.6-3.8m-.6 3.8l3.2-3.7M717.2 283.4l5.9 1.7l5.1 .6m-5.1-.6l4.8 2.5M707.1 296.8l5.9 1.7l5.1 .6m-5.1-.6l4.8 2.5M705 299.4l1.5 4.7l2.2 3.5m-2.2-3.5l-.1 4.4M717.6 296.2l6.1-1.1l4.5-1.8m-4.5 1.8l5.8 0M717.6 296.2l1.4 4.7l2.2 3.5m-2.2-3.5l-.1 4.4"/>
<path stroke="#803399" stroke-width=".82" d="M438 285.7l-5.8 3l-3.8 3.3m3.8-3.3l-6.1 1.8M436.1 282.6l-6.6-2l-5.7-.6m5.7 .6l-5.3-2.8M441.9 266.8l-6.6-1.9l-5.7-.6m5.7 .6l-5.4-2.8M444.2 263.9l-1.6-5.2l-2.5-4m2.5 4l.1-5M463.5 247.7l-6.6-2l-5.7-.6m5.7 .6l-5.4-2.8M465.8 244.8l-1.6-5.3l-2.5-3.9m2.5 3.9l.1-4.9M486.3 239.6l-1.6-5.2l-2.5-4m2.5 4l0-5M490.7 239.4l4.8-3.9l2.9-3.8m-2.9 3.8l5.5-2.7M509.9 231.7l-6.5-2l-5.7-.6m5.7 .6l-5.4-2.8M512.3 228.7l-1.6-5.2l-2.5-3.9m2.5 3.9l.1-4.9M532.7 223.6l-1.6-5.3l-2.5-3.9m2.5 3.9l.1-4.9M537.2 223.4l4.8-3.9l2.9-3.8m-2.9 3.8l5.5-2.7M565.7 226.5l-1.6-5.3l-2.5-3.9m2.5 3.9l.1-4.9M570.1 226.3l4.9-3.9l2.8-3.8m-2.8 3.8l5.4-2.7M587.2 236.3l4.8-3.9l2.9-3.8m-2.9 3.8l5.5-2.7M589.9 239l7 .9l5.7-.3m-5.7 .3l6 1.9M588.4 232.3l-6.6-1.9l-5.6-.7m5.6 .7l-5.3-2.9M590.8 229.4l-1.6-5.3l-2.5-3.9m2.5 3.9l.1-4.9M611.2 224.2l-1.6-5.2l-2.5-3.9m2.5 3.9l.1-5M615.7 224l4.8-3.9l2.9-3.8m-2.9 3.8l5.5-2.7M644.2 227.1l-1.6-5.2l-2.5-4m2.5 4l.1-5M648.6 226.9l4.9-3.9l2.8-3.8m-2.8 3.8l5.4-2.7M665.7 236.9l4.8-3.9l2.9-3.8m-2.9 3.8l5.5-2.7M668.4 239.6l7 .9l5.7-.3m-5.7 .3l6 1.9M687.6 247.4l-1.6-5.2l-2.5-3.9m2.5 3.9l.1-5M692.1 247.2l4.8-3.9l2.9-3.8m-2.9 3.8l5.5-2.7M709.2 257.2l4.8-3.9l2.9-3.8m-2.9 3.8l5.4-2.7M711.9 259.9l6.9 .9l5.8-.3m-5.8 .3l6.1 1.9M724.4 279.6l4.9-3.9l2.8-3.8m-2.8 3.8l5.4-2.8M727.1 282.3l7 .8l5.7-.3m-5.7 .3l6 2M725.8 298.6l7 .9l5.7-.3m-5.7 .3l6 1.9M724.3 301.9l3 4.8l3.5 3.5m-3.5-3.5l1.3 4.9"/>
<path stroke="#803399" stroke-width=".55" d="M523.4 385.7l2.2-.6l1.7-.7m-1.7 .7l2.2-.1M523.4 385.7l.7 1.6l1 1.3m-1-1.3l.1 1.7M525 390.7l2.6 .2l2.1-.2m-2.1 .2l2.3 .6M525 390.7l-.2 2l.2 1.6m-.2-1.6l-.9 1.7M517.9 386.8l.7 1.6l.9 1.3m-.9-1.3l.1 1.7M517.9 386.8l-2.2 .4l-1.6 .7m1.6-.7l-2.1 .1M518.3 392.2l1.3 1.7l1.4 1.2m-1.4-1.2l.6 1.8M518.3 392.2l-2.3 .9l-1.5 1.1m1.5-1.1l-2.3 .5M516 394.2l2.6 .2l2.1-.2m-2.1 .2l2.2 .6M516 394.2l-.3 2l.3 1.6m-.3-1.6l-.8 1.7M514.7 400l2.6 1l2.3 .5m-2.3-.5l2 1.4M514.7 400l-1.4 1.9l-.7 1.7m.7-1.7l-1.8 1.5M509.7 393.5l-.3 2l.3 1.6m-.3-1.6l-.8 1.7M509.7 393.5l-2.6-.2l-2.1 .1m2.1-.1l-2.2-.7M507 399.3l.3 2.2l.7 1.6m-.7-1.6l-.4 2M507 399.3l-2.9 .1l-2.3 .6m2.3-.6l-2.7-.3M509.7 382.6l.7 1.7l1 1.3m-1-1.3l.1 1.6M509.7 382.6l-2.2 .5l-1.6 .7m1.6-.7l-2.1 .1M503.1 383.7l-.3 2l.2 1.6m-.2-1.6l-.8 1.7M503.1 383.7l-2.6-.2l-2.1 .2m2.1-.2l-2.2-.6M508.4 378.4l-2.2 .5l-1.7 .7m1.7-.7l-2.2 .1M508.4 378.4l-.6-1.7l-.9-1.2m.9 1.2l0-1.6M501.2 378.6l-2.2 1l-1.6 1m1.6-1l-2.4 .4M501.2 378.6l-1.1-1.7l-1.4-1.2m1.4 1.2l-.6-1.8M501.6 389.9l1.3 1.7l1.4 1.2m-1.4-1.2l.6 1.8M501.6 389.9l-2.3 .9l-1.5 1.1m1.5-1.1l-2.3 .5M494.7 392.3l.3 2.2l.7 1.7m-.7-1.7l-.4 2M494.7 392.3l-2.9 .2l-2.3 .6m2.3-.6l-2.7-.3M498.9 385.5l-2.3 1l-1.6 1m1.6-1l-2.3 .4M498.9 385.5l-1.2-1.7l-1.3-1.2m1.3 1.2l-.5-1.8M491.1 387l-2.2 1.5l-1.4 1.4m1.4-1.4l-2.4 .9M491.1 387l-1.8-1.7l-1.9-1.1m1.9 1.1l-1.2-1.8M499.6 389.5l2.6 .2l2.1-.3m-2.1 .3l2.3 .5M499.6 389.5l-.2 2l.2 1.5m-.2-1.5l-.8 1.7M498.4 395.2l2.5 1.1l2.3 .4m-2.3-.4l2 1.3M498.4 395.2l-1.4 2l-.7 1.7m.7-1.7l-1.9 1.5M493.3 388.8l-.2 1.9l.2 1.6m-.2-1.6l-.9 1.7M493.3 388.8l-2.5-.3l-2.1 .2m2.1-.2l-2.3-.6M490.6 394.5l.3 2.2l.8 1.7m-.8-1.7l-.3 2M490.6 394.5l-2.9 .2l-2.2 .6m2.2-.6l-2.6-.3M487 395.8l2.6 1.1l2.3 .4m-2.3-.4l2 1.3M487 395.8l-1.4 2l-.6 1.7m.6-1.7l-1.8 1.5M482.4 401.3l2 2l2.1 1.2m-2.1-1.2l1.3 2M482.4 401.3l-2.6 1.6l-1.6 1.5m1.6-1.5l-2.7 .9M480.9 393l-1.4 1.9l-.6 1.8m.6-1.8l-1.8 1.5M480.9 393l-2.5-1.1l-2.3-.5m2.3 .5l-1.9-1.4M474.8 398l-.9 2.4l-.2 2m.2-2l-1.6 2M474.8 398l-3.1-.7l-2.6-.2m2.6 .2l-2.5-1.2M487.3 381.8l-.3 2l.2 1.6m-.2-1.6l-.8 1.7M487.3 381.8l-2.6-.2l-2.1 .1m2.1-.1l-2.3-.7M479.7 380.7l-1.4 2l-.6 1.7m.6-1.7l-1.8 1.5M479.7 380.7l-2.5-1.1l-2.2-.5m2.2 .5l-1.9-1.4M488.3 377l-2.6-.2l-2.1 .1m2.1-.1l-2.2-.7M488.3 377l.4-1.9l-.2-1.6m.2 1.6l.9-1.7M480.8 374.9l-2.9 .2l-2.3 .5m2.3-.5l-2.7-.4M480.8 374.9l-.2-2.2l-.7-1.8m.7 1.8l.4-2M474.7 386.6l.3 2.2l.8 1.7m-.8-1.7l-.4 2M474.7 386.6l-2.9 .2l-2.2 .6m2.2-.6l-2.7-.3M466.1 386.8l-.9 2.4l-.2 2m.2-2l-1.6 1.9M466.1 386.8l-3.1-.8l-2.6-.2m2.6 .2l-2.5-1.2M474.4 381.2l-2.9 .2l-2.3 .5m2.3-.5l-2.7-.3M474.4 381.2l-.2-2.2l-.7-1.7m.7 1.7l.4-2M465.5 380.2l-3.1 .7l-2.3 1m2.3-1l-3 .1M465.5 380.2l-.9-2.4l-1.3-1.8m1.3 1.8l-.1-2.3M507.2 369.9l.7 1.7l.9 1.2m-.9-1.2l.1 1.6M507.2 369.9l-2.2 .5l-1.6 .7m1.6-.7l-2.1 .1M500.6 371l-.3 2l.2 1.6m-.2-1.6l-.8 1.7M500.6 371l-2.6-.2l-2.1 .2m2.1-.2l-2.2-.7M505.9 365.7l-2.2 .5l-1.7 .7m1.7-.7l-2.2 .1M505.9 365.7l-.6-1.7l-.9-1.2m.9 1.2l0-1.6M498.7 365.9l-2.2 1l-1.6 1m1.6-1l-2.4 .4M498.7 365.9l-1.1-1.7l-1.4-1.3m1.4 1.3l-.6-1.8M496.1 364.1l-.3 2l.3 1.6m-.3-1.6l-.8 1.7M496.1 364.1l-2.6-.2l-2.1 .1m2.1-.1l-2.2-.7M488.6 363l-1.4 2l-.7 1.7m.7-1.7l-1.9 1.5M488.6 363l-2.5-1.1l-2.3-.5m2.3 .5l-2-1.4M497.2 359.3l-2.6-.2l-2.1 .2m2.1-.2l-2.3-.7M497.2 359.3l.3-1.9l-.2-1.6m.2 1.6l.9-1.7M489.6 357.2l-2.9 .2l-2.2 .5m2.2-.5l-2.6-.3M489.6 357.2l-.2-2.2l-.7-1.8m.7 1.8l.5-2M511.5 359.6l-2.3 .4l-1.6 .7m1.6-.7l-2.1 .1M511.5 359.6l-.6-1.7l-.9-1.3m.9 1.3l-.1-1.7M510.1 354.5l-2.6-.3l-2.1 .2m2.1-.2l-2.2-.6M510.1 354.5l.4-2l-.2-1.6m.2 1.6l.9-1.7M517 358.6l-.6-1.7l-.8-1.2m.8 1.2l0-1.6M517 358.6l2.3-.4l1.7-.6m-1.7 .6l2.1 0M516.9 353.2l-1.2-1.8l-1.4-1.2m1.4 1.2l-.6-1.7M516.9 353.2l2.3-.9l1.6-1m-1.6 1l2.3-.4M502 353.3l-2.3 .9l-1.6 1.1m1.6-1.1l-2.3 .5M502 353.3l-1.2-1.8l-1.3-1.2m1.3 1.2l-.5-1.7M499 348l-2.9 .1l-2.3 .6m2.3-.6l-2.7-.3M499 348l-.2-2.3l-.7-1.7m.7 1.7l.4-2M507.8 351.3l-1.1-1.8l-1.4-1.2m1.4 1.2l-.6-1.8M507.8 351.3l2.4-.9l1.6-1m-1.6 1l2.3-.4M506 345.3l-1.8-1.7l-1.9-1.1m1.9 1.1l-1.2-1.8M506 345.3l2.3-1.3l1.5-1.4m-1.5 1.4l2.4-.9M486.2 371.1l1.3 1.7l1.4 1.2m-1.4-1.2l.6 1.7M486.2 371.1l-2.3 .9l-1.6 1m1.6-1l-2.3 .4M479.2 373.5l.3 2.2l.8 1.6m-.8-1.6l-.3 2M479.2 373.5l-2.9 .1l-2.2 .6m2.2-.6l-2.6-.3M483.5 366.7l-2.3 .9l-1.6 1m1.6-1l-2.4 .5M483.5 366.7l-1.2-1.8l-1.4-1.2m1.4 1.2l-.6-1.7M475.7 368.2l-2.3 1.4l-1.4 1.4m1.4-1.4l-2.4 .9M475.7 368.2l-1.9-1.7l-1.8-1.1m1.8 1.1l-1.1-1.9M472.2 366.7l.3 2.2l.8 1.7m-.8-1.7l-.3 2M472.2 366.7l-2.9 .2l-2.2 .5m2.2-.5l-2.6-.4M463.6 366.8l-.9 2.4l-.2 2m.2-2l-1.6 1.9M463.6 366.8l-3.1-.7l-2.6-.2m2.6 .2l-2.5-1.2M471.9 361.2l-2.9 .2l-2.2 .6m2.2-.6l-2.7-.3M471.9 361.2l-.2-2.2l-.7-1.7m.7 1.7l.4-2M463 360.2l-3.1 .7l-2.3 1m2.3-1l-3 .1M463 360.2l-.9-2.4l-1.3-1.7m1.3 1.7l-.1-2.3M487.7 359l-2.3 .9l-1.6 1m1.6-1l-2.3 .4M487.7 359l-1.2-1.8l-1.4-1.2m1.4 1.2l-.6-1.8M484.6 353.6l-2.9 .2l-2.2 .6m2.2-.6l-2.6-.3M484.6 353.6l-.2-2.2l-.7-1.7m.7 1.7l.5-2M493.5 356.9l-1.2-1.7l-1.4-1.2m1.4 1.2l-.6-1.8M493.5 356.9l2.3-.8l1.6-1m-1.6 1l2.3-.4M491.6 351l-1.8-1.7l-1.9-1.1m1.9 1.1l-1.1-1.9M491.6 351l2.3-1.4l1.5-1.3m-1.5 1.3l2.5-.8M475.4 353.7l-2.2 1.5l-1.5 1.4m1.5-1.4l-2.5 .9M475.4 353.7l-1.8-1.7l-1.9-1.1m1.9 1.1l-1.2-1.8M470.4 348.4l-3.1 .8l-2.3 1m2.3-1l-3 .1M470.4 348.4l-.9-2.3l-1.3-1.8m1.3 1.8l-.1-2.3M481.1 350.5l-1.8-1.7l-1.9-1.1m1.9 1.1l-1.1-1.8M481.1 350.5l2.3-1.3l1.5-1.4m-1.5 1.4l2.5-.9M477.3 344.3l-2.5-1.5l-2.4-.9m2.4 .9l-1.9-1.8M477.3 344.3l2.1-1.9l1.2-1.8m-1.2 1.8l2.4-1.3M488.8 368.1l2.6 .2l2-.2m-2 .2l2.2 .6M488.8 368.1l-.3 2l.2 1.6m-.2-1.6l-.8 1.7M487.5 373.8l2.6 1.1l2.2 .4m-2.2-.4l2 1.3M487.5 373.8l-1.4 2l-.7 1.7m.7-1.7l-1.8 1.5M482.5 367.4l-.3 2l.2 1.5m-.2-1.5l-.8 1.7M482.5 367.4l-2.6-.2l-2.1 .1m2.1-.1l-2.3-.7M479.7 373.1l.3 2.2l.8 1.7m-.8-1.7l-.3 2.1M479.7 373.1l-2.9 .2l-2.2 .6m2.2-.6l-2.6-.3M476.1 374.5l2.6 1l2.3 .5m-2.3-.5l2 1.4M476.1 374.5l-1.4 1.9l-.6 1.7m.6-1.7l-1.8 1.5M471.5 380l2.1 1.9l2.1 1.2m-2.1-1.2l1.3 2M471.5 380l-2.5 1.5l-1.7 1.5m1.7-1.5l-2.8 .9M470 371.6l-1.4 2l-.6 1.7m.6-1.7l-1.8 1.5M470 371.6l-2.5-1.1l-2.2-.5m2.2 .5l-1.9-1.4M463.9 376.7l-.9 2.3l-.2 2m.2-2l-1.6 2M463.9 376.7l-3.1-.8l-2.6-.2m2.6 .2l-2.5-1.2M476.4 360.4l-.3 2l.3 1.6m-.3-1.6l-.8 1.7M476.4 360.4l-2.6-.2l-2.1 .1m2.1-.1l-2.2-.7M468.9 359.4l-1.5 1.9l-.6 1.7m.6-1.7l-1.8 1.5M468.9 359.4l-2.6-1.1l-2.2-.6m2.2 .6l-1.9-1.5M477.4 355.6l-2.5-.2l-2.1 .2m2.1-.2l-2.3-.6M477.4 355.6l.4-1.9l-.2-1.6m.2 1.6l.9-1.7M469.9 353.5l-2.9 .2l-2.2 .5m2.2-.5l-2.6-.3M469.9 353.5l-.2-2.2l-.7-1.7m.7 1.7l.5-2M463.8 365.2l.3 2.2l.8 1.7m-.8-1.7l-.3 2.1M463.8 365.2l-2.9 .2l-2.2 .6m2.2-.6l-2.6-.3M455.2 365.4l-.9 2.4l-.2 2m.2-2l-1.5 1.9M455.2 365.4l-3-.8l-2.7-.1m2.7 .1l-2.6-1.2M463.5 359.8l-2.9 .2l-2.2 .6m2.2-.6l-2.6-.3M463.5 359.8l-.2-2.2l-.7-1.7m.7 1.7l.5-2M454.6 358.8l-3.1 .7l-2.3 1m2.3-1l-3 .1M454.6 358.8l-.9-2.4l-1.3-1.8m1.3 1.8l-.1-2.3M462 364.1l2.6 1.1l2.3 .4m-2.3-.4l2 1.3M462 364.1l-1.4 2l-.7 1.7m.7-1.7l-1.8 1.5M457.4 369.6l2 2l2.1 1.2m-2.1-1.2l1.3 2M457.4 369.6l-2.6 1.6l-1.6 1.5m1.6-1.5l-2.7 .9M455.9 361.3l-1.4 1.9l-.7 1.8m.7-1.8l-1.8 1.5M455.9 361.3l-2.5-1.1l-2.3-.5m2.3 .5l-1.9-1.4M449.8 366.3l-1 2.4l-.1 2m.1-2l-1.5 2M449.8 366.3l-3.1-.7l-2.6-.2m2.6 .2l-2.6-1.2M445.3 366.5l2.1 1.9l2.1 1.3m-2.1-1.3l1.3 2.1M445.3 366.5l-2.5 1.5l-1.7 1.6m1.7-1.6l-2.8 1M437.4 370.6l1 2.7l1.4 2m-1.4-2l.1 2.5M437.4 370.6l-3.5 .7l-2.7 1.1m2.7-1.1l-3.4 .1M440.7 361.5l-2.6 1.6l-1.7 1.5m1.7-1.5l-2.7 .9M440.7 361.5l-2-1.9l-2-1.3m2 1.3l-1.2-2.1M431.5 364.7l-2.4 2.1l-1.3 2m1.3-2l-2.7 1.5M431.5 364.7l-2.8-1.8l-2.6-1.1m2.6 1.1l-1.9-2.1M453.7 352.1l-1.4 1.9l-.7 1.7m.7-1.7l-1.9 1.5M453.7 352.1l-2.6-1.1l-2.2-.5m2.2 .5l-1.9-1.4M446.5 348.5l-2.6 1.5l-1.6 1.6m1.6-1.6l-2.7 1M446.5 348.5l-1.9-2l-2.1-1.3m2.1 1.3l-1.2-2.1M457.5 347.5l-2.5-1.1l-2.3-.5m2.3 .5l-2-1.4M457.5 347.5l1.5-1.9l.7-1.7m-.7 1.7l1.9-1.4M451 342.8l-3.1-.8l-2.6-.2m2.6 .2l-2.6-1.2M451 342.8l1.1-2.4l.2-2m-.2 2l1.6-1.9M437.9 352.9l-.9 2.4l-.2 2m.2-2l-1.6 1.9M437.9 352.9l-3.1-.8l-2.6-.2m2.6 .2l-2.5-1.2M429 350.2l-2.4 2.1l-1.3 2m1.3-2l-2.7 1.5M429 350.2l-2.8-1.8l-2.6-1.1m2.6 1.1l-1.9-2.1M440.7 347.2l-3.1-.8l-2.6-.2m2.6 .2l-2.5-1.2M440.7 347.2l1.1-2.4l.3-2m-.3 2l1.6-1.9M432.2 343.2l-3.7-.3l-2.9 .2m2.9-.2l-3.2-.9M432.2 343.2l.4-2.8l-.3-2.2m.3 2.2l1.2-2.4M481.1 346.5l-.2 1.9l.2 1.6m-.2-1.6l-.8 1.7M481.1 346.5l-2.5-.3l-2.1 .2m2.1-.2l-2.3-.6M473.6 345.4l-1.4 1.9l-.7 1.8m.7-1.8l-1.8 1.5M473.6 345.4l-2.5-1.1l-2.3-.5m2.3 .5l-2-1.4M482.2 341.7l-2.6-.2l-2.1 .1m2.1-.1l-2.2-.7M482.2 341.7l.3-2l-.1-1.6m.1 1.6l.9-1.6M474.7 339.5l-2.9 .2l-2.3 .6m2.3-.6l-2.7-.3M474.7 339.5l-.2-2.2l-.7-1.7m.7 1.7l.4-2M473 336.8l-1.4 1.9l-.7 1.7m.7-1.7l-1.8 1.5M473 336.8l-2.5-1.1l-2.3-.6m2.3 .6l-2-1.4M465.8 333.2l-2.5 1.5l-1.7 1.6m1.7-1.6l-2.8 .9M465.8 333.2l-1.9-2l-2-1.3m2 1.3l-1.2-2.1M476.8 332.2l-2.5-1.1l-2.2-.5m2.2 .5l-1.9-1.4M476.8 332.2l1.5-1.9l.8-1.7m-.8 1.7l1.9-1.4M470.3 327.5l-3.1-.8l-2.6-.2m2.6 .2l-2.5-1.2M470.3 327.5l1.1-2.4l.3-2m-.3 2l1.6-1.9M491.5 337.2l-2.6-.2l-2.1 .1m2.1-.1l-2.2-.7M491.5 337.2l.3-1.9l-.2-1.6m.2 1.6l.9-1.7M493 331.5l-2.5-1.1l-2.3-.5m2.3 .5l-2-1.4M493 331.5l1.5-1.9l.7-1.7m-.7 1.7l1.9-1.4M497.7 338.1l.4-2l-.2-1.6m.2 1.6l.9-1.7M497.7 338.1l2.6 .3l2.1-.1m-2.1 .1l2.2 .7M500.7 332.4l-.2-2.2l-.7-1.7m.7 1.7l.5-2M500.7 332.4l2.9-.1l2.3-.5m-2.3 .5l2.7 .4M485.3 327.6l-2.9 .2l-2.2 .5m2.2-.5l-2.6-.3M485.3 327.6l-.2-2.2l-.6-1.7m.6 1.7l.5-2M485.3 321.1l-3.1-.8l-2.7-.2m2.7 .2l-2.6-1.2M485.3 321.1l1-2.4l.3-2m-.3 2l1.7-1.9M492.5 327.4l-.2-2.2l-.7-1.7m.7 1.7l.4-2M492.5 327.4l2.9-.1l2.3-.5m-2.3 .5l2.6 .4M494 320.7l-.9-2.4l-1.3-1.7m1.3 1.7l-.1-2.3M494 320.7l3.2-.6l2.3-1m-2.3 1l3-.1M458.8 340.7l.3 2.1l.7 1.7m-.7-1.7l-.4 2.1M458.8 340.7l-2.9 .1l-2.3 .6m2.3-.6l-2.7-.3M450.2 340.8l-1 2.4l-.1 2m.1-2l-1.5 1.9M450.2 340.8l-3.1-.8l-2.6-.1m2.6 .1l-2.6-1.2M458.5 335.2l-2.9 .2l-2.3 .6m2.3-.6l-2.7-.3M458.5 335.2l-.2-2.2l-.7-1.7m.7 1.7l.4-2M449.6 334.2l-3.2 .7l-2.2 1m2.2-1l-3 .1M449.6 334.2l-.9-2.4l-1.3-1.8m1.3 1.8l-.2-2.3M446.9 331.5l-1 2.3l-.2 2m.2-2l-1.5 2M446.9 331.5l-3.1-.8l-2.7-.2m2.7 .2l-2.6-1.2M437.9 328.8l-2.3 2.1l-1.4 2m1.4-2l-2.7 1.5M437.9 328.8l-2.7-1.8l-2.6-1.1m2.6 1.1l-2-2.1M449.7 325.8l-3.1-.8l-2.6-.2m2.6 .2l-2.6-1.2M449.7 325.8l1-2.4l.3-2m-.3 2l1.7-1.9M441.1 321.7l-3.6-.3l-3 .3m3-.3l-3.2-.8M441.1 321.7l.4-2.7l-.3-2.3m.3 2.3l1.2-2.4M467.3 328.7l-2.9 .2l-2.3 .5m2.3-.5l-2.7-.4M467.3 328.7l-.2-2.2l-.7-1.8m.7 1.8l.4-2.1M467.2 322.1l-3.1-.7l-2.6-.2m2.6 .2l-2.6-1.2M467.2 322.1l1.1-2.3l.2-2m-.2 2l1.6-1.9M474.4 328.5l-.2-2.2l-.7-1.7m.7 1.7l.5-2M474.4 328.5l2.9-.1l2.3-.5m-2.3 .5l2.7 .4M475.9 321.8l-.9-2.4l-1.2-1.8m1.2 1.8l-.1-2.3M475.9 321.8l3.2-.7l2.3-.9m-2.3 .9l3 0M457.6 319.2l-3.1 .7l-2.3 1m2.3-1l-3 .2M457.6 319.2l-.9-2.4l-1.3-1.7m1.3 1.7l-.1-2.3M455.5 312.1l-3.6-.3l-2.9 .2m2.9-.2l-3.2-.9M455.5 312.1l.5-2.8l-.3-2.2m.3 2.2l1.2-2.4M465.4 317.8l-.9-2.4l-1.3-1.8m1.3 1.8l-.1-2.3M465.4 317.8l3.1-.7l2.4-.9m-2.4 .9l3 0M465 310.1l-1.7-2.4l-2-1.7m2 1.7l-.9-2.5M465 310.1l3.2-1.2l2.3-1.5m-2.3 1.5l3.3-.6M525.8 352.8l.7 1.7l.9 1.2m-.9-1.2l.1 1.6M525.8 352.8l-2.2 .5l-1.7 .7m1.7-.7l-2.2 .1M519.1 353.9l-.2 2l.2 1.6m-.2-1.6l-.8 1.7M519.1 353.9l-2.5-.2l-2.1 .1m2.1-.1l-2.3-.7M524.5 348.6l-2.3 .5l-1.6 .7m1.6-.7l-2.1 .1M524.5 348.6l-.6-1.7l-.9-1.3m.9 1.3l-.1-1.6M517.3 348.8l-2.3 .9l-1.6 1.1m1.6-1.1l-2.3 .5M517.3 348.8l-1.2-1.7l-1.3-1.3m1.3 1.3l-.5-1.8M514.7 347l-.3 2l.2 1.5m-.2-1.5l-.8 1.7M514.7 347l-2.6-.2l-2.1 .1m2.1-.1l-2.3-.7M507.1 345.9l-1.4 2l-.6 1.7m.6-1.7l-1.8 1.5M507.1 345.9l-2.5-1.1l-2.2-.5m2.2 .5l-1.9-1.4M515.7 342.2l-2.6-.2l-2.1 .1m2.1-.1l-2.2-.7M515.7 342.2l.4-1.9l-.2-1.6m.2 1.6l.9-1.7M508.2 340.1l-2.9 .2l-2.2 .5m2.2-.5l-2.6-.4M508.2 340.1l-.2-2.2l-.7-1.8m.7 1.8l.5-2.1M530 342.5l-2.2 .4l-1.6 .7m1.6-.7l-2.1 .1M530 342.5l-.6-1.7l-.8-1.3m.8 1.3l0-1.7M528.7 337.4l-2.6-.3l-2.1 .2m2.1-.2l-2.2-.6M528.7 337.4l.3-2l-.1-1.6m.1 1.6l.9-1.7M535.6 341.5l-.6-1.7l-.9-1.2m.9 1.2l0-1.6M535.6 341.5l2.2-.4l1.7-.6m-1.7 .6l2.2 0M535.4 336.1l-1.1-1.8l-1.4-1.2m1.4 1.2l-.6-1.7M535.4 336.1l2.4-.9l1.6-1m-1.6 1l2.3-.4M520.6 336.2l-2.3 .9l-1.6 1.1m1.6-1.1l-2.3 .5M520.6 336.2l-1.2-1.8l-1.3-1.2m1.3 1.2l-.5-1.7M517.5 330.8l-2.8 .2l-2.3 .6m2.3-.6l-2.7-.3M517.5 330.8l-.2-2.2l-.6-1.7m.6 1.7l.5-2M526.4 334.2l-1.2-1.8l-1.3-1.2m1.3 1.2l-.5-1.8M526.4 334.2l2.3-.9l1.7-1m-1.7 1l2.4-.4M524.6 328.2l-1.9-1.7l-1.8-1.1m1.8 1.1l-1.1-1.8M524.6 328.2l2.2-1.3l1.5-1.4m-1.5 1.4l2.5-.9M521.2 334.7l-.3 1.9l.3 1.6m-.3-1.6l-.8 1.7M521.2 334.7l-2.6-.3l-2.1 .2m2.1-.2l-2.2-.6M513.7 333.6l-1.4 1.9l-.7 1.8m.7-1.8l-1.9 1.5M513.7 333.6l-2.6-1.1l-2.2-.5m2.2 .5l-1.9-1.4M522.2 329.9l-2.5-.3l-2.1 .2m2.1-.2l-2.3-.6M522.2 329.9l.4-2l-.2-1.6m.2 1.6l.9-1.7M514.7 327.7l-2.9 .2l-2.2 .6m2.2-.6l-2.6-.3M514.7 327.7l-.2-2.2l-.7-1.7m.7 1.7l.5-2M513 325l-1.4 1.9l-.6 1.7m.6-1.7l-1.8 1.5M513 325l-2.5-1.1l-2.2-.6m2.2 .6l-1.9-1.4M505.9 321.4l-2.6 1.5l-1.6 1.5m1.6-1.5l-2.7 .9M505.9 321.4l-2-2l-2-1.3m2 1.3l-1.2-2.1M516.9 320.4l-2.5-1.1l-2.3-.5m2.3 .5l-2-1.4M516.9 320.4l1.5-1.9l.7-1.7m-.7 1.7l1.9-1.5M510.4 315.7l-3.1-.8l-2.7-.2m2.7 .2l-2.6-1.2M510.4 315.7l1-2.4l.3-2m-.3 2l1.7-1.9M531.5 325.4l-2.6-.2l-2 .1m2-.1l-2.2-.7M531.5 325.4l.4-2l-.2-1.5m.2 1.5l.9-1.6M533.1 319.7l-2.6-1.1l-2.2-.5m2.2 .5l-1.9-1.4M533.1 319.7l1.5-1.9l.7-1.7m-.7 1.7l1.8-1.4M537.8 326.3l.4-2l-.2-1.6m.2 1.6l.8-1.7M537.8 326.3l2.6 .3l2.1-.1m-2.1 .1l2.2 .7M540.8 320.6l-.2-2.2l-.7-1.7m.7 1.7l.4-2M540.8 320.6l2.9-.1l2.2-.5m-2.2 .5l2.6 .4M525.4 315.8l-2.9 .2l-2.2 .5m2.2-.5l-2.7-.3M525.4 315.8l-.2-2.2l-.7-1.7m.7 1.7l.4-2M525.3 309.3l-3.1-.8l-2.6-.2m2.6 .2l-2.5-1.2M525.3 309.3l1.1-2.4l.3-2m-.3 2l1.6-1.9M532.5 315.6l-.2-2.2l-.6-1.7m.6 1.7l.5-2M532.5 315.6l2.9-.1l2.3-.5m-2.3 .5l2.7 .4M534.1 308.9l-.9-2.4l-1.3-1.7m1.3 1.7l-.2-2.3M534.1 308.9l3.1-.6l2.4-1m-2.4 1l3-.1M546.8 340.8l-2.2 .5l-1.6 .7m1.6-.7l-2.1 0M546.8 340.8l-.6-1.7l-.9-1.3m.9 1.3l0-1.6M545.5 335.7l-2.6-.2l-2.1 .1m2.1-.1l-2.2-.7M545.5 335.7l.3-2l-.1-1.6m.1 1.6l.9-1.6M552.4 339.8l-.6-1.7l-.9-1.2m.9 1.2l-.1-1.6M552.4 339.8l2.2-.4l1.7-.6m-1.7 .6l2.2 0M552.2 334.4l-1.2-1.8l-1.3-1.2m1.3 1.2l-.5-1.7M552.2 334.4l2.4-.9l1.6-1m-1.6 1l2.3-.4M554.7 332.4l-2.6-.2l-2.1 .1m2.1-.1l-2.3-.7M554.7 332.4l.3-1.9l-.2-1.6m.2 1.6l.9-1.7M556.2 326.7l-2.5-1.1l-2.3-.5m2.3 .5l-2-1.4M556.2 326.7l1.5-1.9l.7-1.7m-.7 1.7l1.9-1.4M560.9 333.3l.4-1.9l-.2-1.6m.2 1.6l.9-1.7M560.9 333.3l2.6 .3l2.1-.1m-2.1 .1l2.2 .7M563.9 327.6l-.2-2.2l-.7-1.7m.7 1.7l.5-2M563.9 327.6l2.9-.1l2.3-.5m-2.3 .5l2.7 .4M560.4 344.2l-.6-1.7l-.9-1.3m.9 1.3l-.1-1.6M560.4 344.2l2.2-.5l1.7-.6m-1.7 .6l2.2 0M567.1 343.2l.4-1.9l-.2-1.6m.2 1.6l.8-1.7M567.1 343.2l2.6 .3l2.1-.1m-2.1 .1l2.2 .7M561.5 348.4l2.3-.4l1.6-.7m-1.6 .7l2.1 0M561.5 348.4l.5 1.7l.9 1.3m-.9-1.3l0 1.6M568.7 348.4l2.3-.9l1.7-1m-1.7 1l2.4-.4M568.7 348.4l1.1 1.8l1.3 1.2m-1.3-1.2l.4 1.8M568.8 337.1l-1.2-1.7l-1.3-1.3m1.3 1.3l-.5-1.8M568.8 337.1l2.3-.9l1.7-1m-1.7 1l2.4-.3M575.9 334.9l-.2-2.2l-.7-1.7m.7 1.7l.4-2M575.9 334.9l2.9-.1l2.3-.5m-2.3 .5l2.6 .4M571.4 341.6l2.3-.9l1.6-1m-1.6 1l2.3-.4M571.4 341.6l1 1.7l1.3 1.3m-1.3-1.3l.5 1.8M579.2 340.3l2.3-1.4l1.5-1.4m-1.5 1.4l2.4-.8M579.2 340.3l1.8 1.7l1.8 1.2m-1.8-1.2l1 1.9M545.7 324.8l-2.3 .9l-1.6 1.1m1.6-1.1l-2.3 .5M545.7 324.8l-1.2-1.8l-1.3-1.2m1.3 1.2l-.5-1.7M542.7 319.5l-2.9 .1l-2.3 .6m2.3-.6l-2.7-.3M542.7 319.5l-.2-2.3l-.7-1.7m.7 1.7l.4-2M551.5 322.8l-1.2-1.8l-1.3-1.2m1.3 1.2l-.5-1.8M551.5 322.8l2.3-.9l1.7-1m-1.7 1l2.4-.4M549.7 316.8l-1.9-1.7l-1.8-1.1m1.8 1.1l-1.1-1.8M549.7 316.8l2.2-1.3l1.5-1.4m-1.5 1.4l2.5-.9M551.7 314.2l-2.9 .2l-2.2 .6m2.2-.6l-2.6-.3M551.7 314.2l-.2-2.2l-.7-1.7m.7 1.7l.5-2M551.7 307.7l-3.1-.7l-2.7-.2m2.7 .2l-2.6-1.2M551.7 307.7l1-2.3l.3-2m-.3 2l1.7-1.9M558.9 314.1l-.2-2.2l-.7-1.7m.7 1.7l.4-2M558.9 314.1l2.9-.1l2.2-.5m-2.2 .5l2.6 .4M560.4 307.4l-.9-2.4l-1.3-1.8m1.3 1.8l-.1-2.3M560.4 307.4l3.1-.7l2.4-.9m-2.4 .9l3.1 0M561.6 326.1l-1.2-1.7l-1.3-1.3m1.3 1.3l-.5-1.8M561.6 326.1l2.3-.9l1.7-1m-1.7 1l2.4-.3M568.7 323.9l-.2-2.2l-.7-1.7m.7 1.7l.4-2M568.7 323.9l2.9-.1l2.2-.5m-2.2 .5l2.6 .4M564.1 330.6l2.4-.9l1.6-1m-1.6 1l2.3-.4M564.1 330.6l1.1 1.7l1.3 1.3m-1.3-1.3l.5 1.8M572 329.3l2.3-1.4l1.5-1.4m-1.5 1.4l2.4-.8M572 329.3l1.7 1.7l1.8 1.2m-1.8-1.2l1.1 1.9M568.7 316.9l-1.9-1.7l-1.8-1.2m1.8 1.2l-1.1-1.9M568.7 316.9l2.3-1.4l1.4-1.4m-1.4 1.4l2.4-.8M575.7 313.2l-.9-2.4l-1.2-1.7m1.2 1.7l-.1-2.3M575.7 313.2l3.2-.7l2.3-.9m-2.3 .9l3 0M572.8 321.3l2.3-1.4l1.5-1.4m-1.5 1.4l2.5-.8M572.8 321.3l1.8 1.8l1.8 1.1m-1.8-1.1l1 1.8M581 318.5l2.1-1.9l1.2-1.8m-1.2 1.8l2.4-1.4M581 318.5l2.5 1.6l2.3 1m-2.3-1l1.7 1.9M500.2 334.3l1.3 1.7l1.4 1.2m-1.4-1.2l.6 1.7M500.2 334.3l-2.3 .9l-1.6 1m1.6-1l-2.3 .4M493.3 336.7l.3 2.2l.7 1.7m-.7-1.7l-.4 2M493.3 336.7l-2.9 .2l-2.3 .5m2.3-.5l-2.7-.3M497.5 329.9l-2.3 .9l-1.6 1.1m1.6-1.1l-2.3 .5M497.5 329.9l-1.2-1.8l-1.4-1.2m1.4 1.2l-.6-1.7M489.7 331.4l-2.2 1.4l-1.5 1.4m1.5-1.4l-2.4 .9M489.7 331.4l-1.8-1.7l-1.9-1.1m1.9 1.1l-1.2-1.9M486.2 329.9l.3 2.2l.8 1.7m-.8-1.7l-.3 2M486.2 329.9l-2.9 .2l-2.2 .5m2.2-.5l-2.6-.3M477.7 330l-1 2.4l-.2 2m.2-2l-1.5 2M477.7 330l-3.1-.7l-2.7-.2m2.7 .2l-2.6-1.2M485.9 324.4l-2.9 .2l-2.2 .6m2.2-.6l-2.6-.3M485.9 324.4l-.2-2.2l-.7-1.7m.7 1.7l.5-2M477 323.4l-3.1 .7l-2.3 1m2.3-1l-3 .2M477 323.4l-.9-2.4l-1.3-1.7m1.3 1.7l-.1-2.3M501.7 322.2l-2.3 .9l-1.6 1m1.6-1l-2.3 .4M501.7 322.2l-1.2-1.8l-1.3-1.2m1.3 1.2l-.5-1.8M498.6 316.8l-2.9 .2l-2.2 .6m2.2-.6l-2.6-.3M498.6 316.8l-.2-2.2l-.6-1.7m.6 1.7l.5-2M507.5 320.2l-1.2-1.8l-1.3-1.2m1.3 1.2l-.5-1.8M507.5 320.2l2.3-.9l1.7-1m-1.7 1l2.4-.4M505.6 314.2l-1.8-1.7l-1.8-1.1m1.8 1.1l-1.1-1.8M505.6 314.2l2.3-1.3l1.5-1.4m-1.5 1.4l2.5-.9M489.4 317l-2.2 1.4l-1.5 1.4m1.5-1.4l-2.4 .9M489.4 317l-1.8-1.8l-1.9-1.1m1.9 1.1l-1.2-1.8M484.4 311.6l-3.1 .8l-2.3 1m2.3-1l-3 .1M484.4 311.6l-.9-2.3l-1.2-1.8m1.2 1.8l-.1-2.3M495.2 313.7l-1.9-1.7l-1.8-1.1m1.8 1.1l-1.1-1.8M495.2 313.7l2.2-1.3l1.5-1.4m-1.5 1.4l2.5-.9M491.3 307.5l-2.5-1.5l-2.4-.9m2.4 .9l-1.8-1.8M491.3 307.5l2.1-1.9l1.2-1.7m-1.2 1.7l2.4-1.3M489.6 315.2l.3 2.2l.8 1.7m-.8-1.7l-.4 2M489.6 315.2l-2.9 .2l-2.2 .5m2.2-.5l-2.7-.3M481 315.4l-.9 2.3l-.2 2m.2-2l-1.6 2M481 315.4l-3.1-.8l-2.6-.2m2.6 .2l-2.5-1.2M489.3 309.8l-2.9 .2l-2.3 .5m2.3-.5l-2.7-.3M489.3 309.8l-.2-2.2l-.7-1.8m.7 1.8l.4-2M480.4 308.7l-3.1 .8l-2.3 1m2.3-1l-3 .1M480.4 308.7l-.9-2.3l-1.3-1.8m1.3 1.8l-.1-2.3M477.7 306l-1 2.4l-.2 2m.2-2l-1.5 1.9M477.7 306l-3.1-.8l-2.6-.1m2.6 .1l-2.6-1.2M468.8 303.3l-2.4 2.1l-1.3 2m1.3-2l-2.7 1.6M468.8 303.3l-2.8-1.8l-2.6-1.1m2.6 1.1l-1.9-2.1M480.5 300.3l-3.1-.8l-2.6-.1m2.6 .1l-2.6-1.2M480.5 300.3l1.1-2.3l.2-2m-.2 2l1.6-2M471.9 296.3l-3.6-.3l-3 .3m3-.3l-3.2-.9M471.9 296.3l.5-2.8l-.3-2.2m.3 2.2l1.2-2.4M498.1 303.2l-2.9 .2l-2.3 .5m2.3-.5l-2.7-.3M498.1 303.2l-.2-2.2l-.7-1.7m.7 1.7l.4-2M498 296.7l-3.1-.8l-2.6-.2m2.6 .2l-2.5-1.2M498 296.7l1.1-2.4l.3-1.9m-.3 1.9l1.6-1.9M505.2 303.1l-.2-2.2l-.7-1.8m.7 1.8l.5-2.1M505.2 303.1l2.9-.2l2.3-.4m-2.3 .4l2.7 .4M506.8 296.3l-.9-2.4l-1.3-1.7m1.3 1.7l-.2-2.2M506.8 296.3l3.1-.6l2.3-1m-2.3 1l3-.1M488.4 293.7l-3.1 .8l-2.3 1m2.3-1l-3 .1M488.4 293.7l-.9-2.3l-1.3-1.8m1.3 1.8l-.1-2.3M486.3 286.6l-3.6-.3l-2.9 .3m2.9-.3l-3.2-.8M486.3 286.6l.5-2.7l-.3-2.3m.3 2.3l1.2-2.4M496.2 292.3l-.9-2.4l-1.3-1.7m1.3 1.7l-.1-2.2M496.2 292.3l3.2-.6l2.3-1m-2.3 1l3-.1M495.8 284.7l-1.7-2.5l-1.9-1.7m1.9 1.7l-.8-2.5M495.8 284.7l3.3-1.3l2.2-1.4m-2.2 1.4l3.2-.6M519.6 317.4l-2.3 .9l-1.6 1m1.6-1l-2.3 .4M519.6 317.4l-1.2-1.8l-1.4-1.2m1.4 1.2l-.6-1.8M516.5 312l-2.9 .2l-2.2 .6m2.2-.6l-2.6-.3M516.5 312l-.2-2.2l-.7-1.7m.7 1.7l.5-2M525.4 315.3l-1.2-1.7l-1.3-1.2m1.3 1.2l-.5-1.8M525.4 315.3l2.3-.8l1.7-1m-1.7 1l2.4-.4M523.5 309.4l-1.8-1.7l-1.9-1.1m1.9 1.1l-1.1-1.9M523.5 309.4l2.3-1.4l1.5-1.3m-1.5 1.3l2.5-.8M525.6 306.8l-2.9 .2l-2.2 .6m2.2-.6l-2.6-.3M525.6 306.8l-.2-2.2l-.7-1.7m.7 1.7l.5-2M525.5 300.3l-3.1-.8l-2.6-.2m2.6 .2l-2.5-1.2M525.5 300.3l1.1-2.3l.3-2m-.3 2l1.6-2M532.8 306.7l-.3-2.2l-.6-1.8m.6 1.8l.5-2M532.8 306.7l2.9-.1l2.2-.5m-2.2 .5l2.6 .3M534.3 299.9l-.9-2.4l-1.3-1.7m1.3 1.7l-.1-2.2M534.3 299.9l3.1-.6l2.4-1m-2.4 1l3-.1M535.5 318.7l-1.2-1.8l-1.4-1.2m1.4 1.2l-.6-1.7M535.5 318.7l2.3-.9l1.6-1m-1.6 1l2.3-.4M542.5 316.5l-.2-2.2l-.6-1.8m.6 1.8l.5-2M542.5 316.5l3-.2l2.2-.4m-2.2 .4l2.6 .4M538 323.1l2.3-.8l1.7-1m-1.7 1l2.4-.4M538 323.1l1.1 1.8l1.3 1.3m-1.3-1.3l.5 1.8M545.9 321.8l2.3-1.3l1.4-1.4m-1.4 1.4l2.4-.9M545.9 321.8l1.7 1.8l1.8 1.1m-1.8-1.1l1.1 1.9M542.5 309.4l-1.8-1.7l-1.8-1.1m1.8 1.1l-1.1-1.8M542.5 309.4l2.3-1.3l1.5-1.4m-1.5 1.4l2.5-.9M549.6 305.8l-.9-2.4l-1.3-1.8m1.3 1.8l-.1-2.3M549.6 305.8l3.2-.7l2.3-.9m-2.3 .9l3 0M546.7 313.9l2.3-1.4l1.5-1.4m-1.5 1.4l2.4-.8M546.7 313.9l1.7 1.7l1.9 1.2m-1.9-1.2l1.1 1.9M554.9 311.1l2.1-1.9l1.2-1.8m-1.2 1.8l2.4-1.4M554.9 311.1l2.5 1.6l2.3 .9m-2.3-.9l1.7 1.8M513.4 300l-2.2 1.4l-1.4 1.5m1.4-1.5l-2.4 .9M513.4 300l-1.8-1.7l-1.9-1.1m1.9 1.1l-1.1-1.8M508.5 294.7l-3.2 .7l-2.3 1m2.3-1l-3 .2M508.5 294.7l-.9-2.4l-1.3-1.7m1.3 1.7l-.2-2.2M519.2 296.8l-1.9-1.7l-1.8-1.1m1.8 1.1l-1.1-1.9M519.2 296.8l2.3-1.4l1.5-1.4m-1.5 1.4l2.4-.8M515.3 290.6l-2.5-1.5l-2.4-.9m2.4 .9l-1.8-1.9M515.3 290.6l2.1-1.9l1.2-1.8m-1.2 1.8l2.5-1.3M516.8 287.4l-3.1 .7l-2.3 1m2.3-1l-3 .2M516.8 287.4l-.9-2.4l-1.3-1.7m1.3 1.7l-.1-2.3M514.7 280.3l-3.6-.3l-2.9 .2m2.9-.2l-3.2-.9M514.7 280.3l.5-2.8l-.3-2.2m.3 2.2l1.2-2.4M524.6 286l-.9-2.4l-1.3-1.8m1.3 1.8l-.1-2.3M524.6 286l3.1-.7l2.4-.9m-2.4 .9l3.1 0M524.2 278.3l-1.7-2.4l-2-1.7m2 1.7l-.9-2.5M524.2 278.3l3.2-1.2l2.3-1.5m-2.3 1.5l3.3-.6M531.3 298.7l-1.9-1.8l-1.8-1.1m1.8 1.1l-1.1-1.8M531.3 298.7l2.3-1.4l1.4-1.4m-1.4 1.4l2.4-.8M538.3 295l-.9-2.4l-1.2-1.8m1.2 1.8l-.1-2.3M538.3 295l3.2-.7l2.3-.9m-2.3 .9l3 0M535.4 303.1l2.3-1.4l1.5-1.4m-1.5 1.4l2.5-.8M535.4 303.1l1.8 1.8l1.8 1.1m-1.8-1.1l1 1.8M543.6 300.3l2.1-1.9l1.2-1.8m-1.2 1.8l2.4-1.4M543.6 300.3l2.5 1.6l2.3 .9m-2.3-.9l1.7 1.9M536.2 287.3l-2.6-1.6l-2.3-.9m2.3 .9l-1.8-1.8M536.2 287.3l2.1-1.9l1.2-1.8m-1.2 1.8l2.4-1.4M542.8 282l-1.7-2.5l-1.9-1.7m1.9 1.7l-.8-2.4M542.8 282l3.3-1.3l2.2-1.4m-2.2 1.4l3.2-.5M542.1 291.4l2.1-1.9l1.2-1.8m-1.2 1.8l2.4-1.3M542.1 291.4l2.5 1.6l2.3 1m-2.3-1l1.7 1.9M550.2 286.9l1.7-2.5l.8-2.2m-.8 2.2l2.3-1.9M550.2 286.9l3.2 1.3l2.9 .6m-2.9-.6l2.5 1.7M512.3 332.9l2.6 .1l2.1-.2m-2.1 .2l2.2 .6M512.3 332.9l-.3 1.9l.3 1.6m-.3-1.6l-.8 1.7M511 338.6l2.6 1l2.3 .5m-2.3-.5l2 1.4M511 338.6l-1.4 1.9l-.7 1.8m.7-1.8l-1.8 1.5M506 332.2l-.3 1.9l.3 1.6m-.3-1.6l-.8 1.7M506 332.2l-2.6-.3l-2.1 .2m2.1-.2l-2.2-.6M503.3 337.9l.3 2.2l.7 1.7m-.7-1.7l-.4 2M503.3 337.9l-2.9 .2l-2.3 .5m2.3-.5l-2.7-.3M499.7 339.2l2.5 1.1l2.3 .4m-2.3-.4l2 1.3M499.7 339.2l-1.4 2l-.7 1.7m.7-1.7l-1.9 1.5M495 344.7l2.1 1.9l2.1 1.3m-2.1-1.3l1.3 2.1M495 344.7l-2.5 1.5l-1.7 1.6m1.7-1.6l-2.8 1M493.6 336.4l-1.4 1.9l-.7 1.7m.7-1.7l-1.9 1.5M493.6 336.4l-2.6-1.1l-2.2-.5m2.2 .5l-1.9-1.4M487.5 341.4l-1 2.4l-.2 2m.2-2l-1.5 1.9M487.5 341.4l-3.1-.8l-2.7-.1m2.7 .1l-2.6-1.2M499.9 325.2l-.3 1.9l.3 1.6m-.3-1.6l-.8 1.8M499.9 325.2l-2.6-.3l-2.1 .2m2.1-.2l-2.2-.6M492.4 324.1l-1.4 1.9l-.7 1.8m.7-1.8l-1.9 1.5M492.4 324.1l-2.5-1.1l-2.3-.5m2.3 .5l-2-1.4M501 320.4l-2.6-.2l-2.1 .1m2.1-.1l-2.3-.7M501 320.4l.3-1.9l-.2-1.6m.2 1.6l.9-1.7M493.4 318.2l-2.9 .2l-2.2 .6m2.2-.6l-2.6-.3M493.4 318.2l-.2-2.2l-.6-1.7m.6 1.7l.5-2M487.3 330l.4 2.2l.7 1.7m-.7-1.7l-.4 2M487.3 330l-2.8 .2l-2.3 .5m2.3-.5l-2.7-.3M478.8 330.2l-1 2.3l-.2 2m.2-2l-1.5 2M478.8 330.2l-3.1-.8l-2.7-.2m2.7 .2l-2.6-1.2M487 324.6l-2.9 .2l-2.2 .5m2.2-.5l-2.6-.3M487 324.6l-.2-2.2l-.7-1.7m.7 1.7l.5-2M478.1 323.5l-3.1 .8l-2.3 1m2.3-1l-3 .1M478.1 323.5l-.9-2.3l-1.2-1.8m1.2 1.8l-.1-2.3M485.5 328.9l2.6 1l2.3 .5m-2.3-.5l2 1.4M485.5 328.9l-1.4 1.9l-.6 1.8m.6-1.8l-1.8 1.5M480.9 334.4l2.1 1.9l2 1.3m-2-1.3l1.2 2.1M480.9 334.4l-2.6 1.5l-1.6 1.6m1.6-1.6l-2.7 .9M479.4 326.1l-1.4 1.9l-.6 1.7m.6-1.7l-1.8 1.5M479.4 326.1l-2.5-1.1l-2.2-.6m2.2 .6l-1.9-1.5M473.3 331.1l-.9 2.4l-.2 2m.2-2l-1.6 1.9M473.3 331.1l-3.1-.8l-2.6-.2m2.6 .2l-2.5-1.2M468.8 331.3l2.1 1.9l2.1 1.2m-2.1-1.2l1.3 2M468.8 331.3l-2.5 1.5l-1.7 1.5m1.7-1.5l-2.8 .9M460.9 335.4l1 2.6l1.5 2m-1.5-2l.2 2.6M460.9 335.4l-3.5 .7l-2.6 1m2.6-1l-3.4 .1M464.2 326.3l-2.6 1.5l-1.6 1.6m1.6-1.6l-2.7 1M464.2 326.3l-2-2l-2-1.3m2 1.3l-1.2-2.1M455 329.4l-2.4 2.2l-1.3 2m1.3-2l-2.7 1.5M455 329.4l-2.8-1.8l-2.6-1m2.6 1l-1.9-2.1M477.2 316.8l-1.4 2l-.7 1.7m.7-1.7l-1.8 1.5M477.2 316.8l-2.5-1.1l-2.3-.5m2.3 .5l-2-1.4M470 313.2l-2.5 1.6l-1.7 1.5m1.7-1.5l-2.8 .9M470 313.2l-1.9-1.9l-2-1.3m2 1.3l-1.2-2.1M481 312.3l-2.5-1.1l-2.2-.6m2.2 .6l-1.9-1.4M481 312.3l1.5-1.9l.8-1.7m-.8 1.7l1.9-1.5M474.5 307.5l-3.1-.7l-2.6-.2m2.6 .2l-2.5-1.2M474.5 307.5l1.1-2.3l.3-2m-.3 2l1.6-1.9M461.5 317.6l-1 2.4l-.2 2m.2-2l-1.5 2M461.5 317.6l-3.1-.7l-2.7-.2m2.7 .2l-2.6-1.2M452.5 315l-2.3 2.1l-1.4 2m1.4-2l-2.8 1.5M452.5 315l-2.7-1.9l-2.7-1m2.7 1l-2-2.1M464.3 311.9l-3.1-.7l-2.7-.2m2.7 .2l-2.6-1.2M464.3 311.9l1-2.3l.3-2m-.3 2l1.6-1.9M455.7 307.9l-3.7-.3l-2.9 .3m2.9-.3l-3.1-.8M455.7 307.9l.4-2.7l-.3-2.3m.3 2.3l1.2-2.4M504.7 311.2l-.3 2l.2 1.6m-.2-1.6l-.8 1.7M504.7 311.2l-2.6-.2l-2.1 .2m2.1-.2l-2.3-.7M497.1 310.2l-1.4 1.9l-.6 1.7m.6-1.7l-1.8 1.5M497.1 310.2l-2.5-1.1l-2.2-.6m2.2 .6l-1.9-1.5M505.7 306.5l-2.6-.3l-2.1 .2m2.1-.2l-2.2-.6M505.7 306.5l.4-2l-.2-1.6m.2 1.6l.9-1.7M498.2 304.3l-2.9 .2l-2.3 .5m2.3-.5l-2.7-.3M498.2 304.3l-.2-2.2l-.7-1.7m.7 1.7l.4-2M496.5 301.5l-1.4 2l-.7 1.7m.7-1.7l-1.8 1.5M496.5 301.5l-2.5-1.1l-2.3-.5m2.3 .5l-1.9-1.4M489.4 297.9l-2.6 1.6l-1.7 1.5m1.7-1.5l-2.7 .9M489.4 297.9l-2-1.9l-2-1.3m2 1.3l-1.2-2.1M500.4 297l-2.6-1.2l-2.2-.5m2.2 .5l-1.9-1.4M500.4 297l1.5-1.9l.7-1.7m-.7 1.7l1.8-1.5M493.8 292.2l-3.1-.7l-2.6-.2m2.6 .2l-2.5-1.2M493.8 292.2l1.1-2.3l.3-2m-.3 2l1.6-1.9M515 302l-2.6-.3l-2.1 .2m2.1-.2l-2.2-.6M515 302l.3-2l-.1-1.6m.1 1.6l.9-1.7M516.5 296.3l-2.5-1.1l-2.2-.6m2.2 .6l-1.9-1.4M516.5 296.3l1.5-1.9l.8-1.7m-.8 1.7l1.9-1.5M521.3 302.8l.3-1.9l-.2-1.6m.2 1.6l.9-1.7M521.3 302.8l2.5 .4l2.1-.2m-2.1 .2l2.2 .7M524.2 297.2l-.2-2.2l-.6-1.7m.6 1.7l.5-2M524.2 297.2l2.9-.1l2.3-.5m-2.3 .5l2.7 .3M508.9 292.3l-2.9 .2l-2.3 .6m2.3-.6l-2.7-.3M508.9 292.3l-.2-2.2l-.7-1.7m.7 1.7l.4-2M508.8 285.8l-3.1-.7l-2.6-.2m2.6 .2l-2.6-1.2M508.8 285.8l1.1-2.3l.2-2m-.2 2l1.6-1.9M516 292.2l-.2-2.2l-.7-1.7m.7 1.7l.5-2M516 292.2l2.9-.1l2.3-.5m-2.3 .5l2.7 .4M517.5 285.5l-.9-2.4l-1.2-1.8m1.2 1.8l-.1-2.3M517.5 285.5l3.2-.7l2.3-.9m-2.3 .9l3 0M482.3 305.4l.3 2.2l.8 1.7m-.8-1.7l-.4 2M482.3 305.4l-2.9 .2l-2.2 .6m2.2-.6l-2.7-.3M473.7 305.6l-.9 2.3l-.2 2m.2-2l-1.6 2M473.7 305.6l-3.1-.8l-2.6-.2m2.6 .2l-2.5-1.2M482 300l-2.9 .2l-2.3 .5m2.3-.5l-2.7-.3M482 300l-.2-2.2l-.7-1.7m.7 1.7l.4-2M473.1 298.9l-3.1 .8l-2.3 1m2.3-1l-3 .1M473.1 298.9l-.9-2.3l-1.3-1.8m1.3 1.8l-.1-2.3M470.4 296.2l-1 2.4l-.1 2m.1-2l-1.5 2M470.4 296.2l-3.1-.7l-2.6-.2m2.6 .2l-2.6-1.2M461.5 293.5l-2.4 2.2l-1.3 2m1.3-2l-2.7 1.5M461.5 293.5l-2.8-1.8l-2.6-1m2.6 1l-1.9-2.1M473.2 290.5l-3.1-.7l-2.6-.2m2.6 .2l-2.6-1.2M473.2 290.5l1.1-2.3l.3-2m-.3 2l1.6-1.9M464.6 286.5l-3.6-.3l-3 .3m3-.3l-3.2-.9M464.6 286.5l.5-2.8l-.3-2.2m.3 2.2l1.2-2.4M490.8 293.4l-2.9 .2l-2.3 .6m2.3-.6l-2.7-.3M490.8 293.4l-.2-2.2l-.7-1.7m.7 1.7l.4-2M490.7 286.9l-3.1-.8l-2.6-.1m2.6 .1l-2.5-1.2M490.7 286.9l1.1-2.3l.3-2m-.3 2l1.6-2M497.9 293.3l-.2-2.2l-.7-1.7m.7 1.7l.5-2M497.9 293.3l2.9-.1l2.3-.5m-2.3 .5l2.7 .3M499.5 286.5l-.9-2.3l-1.3-1.8m1.3 1.8l-.2-2.3M499.5 286.5l3.1-.6l2.3-.9m-2.3 .9l3-.1M481.1 284l-3.1 .7l-2.3 1m2.3-1l-3 .1M481.1 284l-.9-2.4l-1.3-1.8m1.3 1.8l-.1-2.3M479.1 276.8l-3.7-.3l-2.9 .3m2.9-.3l-3.2-.8M479.1 276.8l.4-2.7l-.3-2.3m.3 2.3l1.2-2.4M488.9 282.5l-.9-2.3l-1.3-1.8m1.3 1.8l-.1-2.3M488.9 282.5l3.2-.6l2.3-.9m-2.3 .9l3-.1M488.5 274.9l-1.7-2.5l-1.9-1.7m1.9 1.7l-.8-2.5M488.5 274.9l3.3-1.3l2.2-1.4m-2.2 1.4l3.2-.6M486.6 303.2l2.6 1.1l2.3 .4m-2.3-.4l2 1.3M486.6 303.2l-1.4 2l-.6 1.7m.6-1.7l-1.8 1.5M482 308.7l2.1 1.9l2.1 1.3m-2.1-1.3l1.3 2.1M482 308.7l-2.5 1.5l-1.7 1.6m1.7-1.6l-2.8 1M480.5 300.4l-1.4 1.9l-.6 1.7m.6-1.7l-1.8 1.5M480.5 300.4l-2.5-1.1l-2.2-.5m2.2 .5l-1.9-1.4M474.4 305.4l-.9 2.4l-.2 2m.2-2l-1.6 1.9M474.4 305.4l-3.1-.8l-2.6-.1m2.6 .1l-2.5-1.2M470 305.6l2 1.9l2.1 1.2m-2.1-1.2l1.3 2.1M470 305.6l-2.6 1.5l-1.7 1.6m1.7-1.6l-2.8 .9M462 309.7l1 2.7l1.5 1.9m-1.5-1.9l.2 2.5M462 309.7l-3.5 .7l-2.6 1.1m2.6-1.1l-3.4 .1M465.3 300.6l-2.6 1.6l-1.6 1.5m1.6-1.5l-2.7 .9M465.3 300.6l-2-1.9l-2-1.3m2 1.3l-1.1-2.1M456.1 303.8l-2.3 2.1l-1.4 2m1.4-2l-2.8 1.5M456.1 303.8l-2.8-1.8l-2.6-1.1m2.6 1.1l-1.9-2.1M478.3 291.2l-1.4 1.9l-.7 1.7m.7-1.7l-1.8 1.5M478.3 291.2l-2.5-1.1l-2.3-.6m2.3 .6l-2-1.4M471.1 287.6l-2.5 1.5l-1.7 1.6m1.7-1.6l-2.8 .9M471.1 287.6l-1.9-2l-2-1.3m2 1.3l-1.2-2.1M482.1 286.6l-2.5-1.1l-2.2-.5m2.2 .5l-1.9-1.4M482.1 286.6l1.5-1.9l.8-1.7m-.8 1.7l1.9-1.4M475.6 281.9l-3.1-.8l-2.6-.2m2.6 .2l-2.5-1.2M475.6 281.9l1.1-2.4l.3-2m-.3 2l1.6-1.9M462.6 292l-1 2.3l-.2 2m.2-2l-1.5 2M462.6 292l-3.1-.8l-2.7-.2m2.7 .2l-2.6-1.2M453.6 289.3l-2.3 2.1l-1.4 2m1.4-2l-2.7 1.5M453.6 289.3l-2.7-1.8l-2.6-1.1m2.6 1.1l-2-2.1M465.4 286.3l-3.1-.8l-2.7-.2m2.7 .2l-2.6-1.2M465.4 286.3l1-2.4l.3-2m-.3 2l1.7-1.9M456.8 282.2l-3.6-.2l-3 .2m3-.2l-3.2-.9M456.8 282.2l.4-2.7l-.3-2.2m.3 2.2l1.2-2.4M461.3 290.2l2.1 2l2.1 1.2m-2.1-1.2l1.3 2M461.3 290.2l-2.5 1.6l-1.7 1.5m1.7-1.5l-2.8 .9M453.4 294.4l1 2.6l1.4 2m-1.4-2l.1 2.6M453.4 294.4l-3.5 .7l-2.7 1m2.7-1l-3.4 0M456.7 285.3l-2.6 1.5l-1.7 1.6m1.7-1.6l-2.7 .9M456.7 285.3l-2-2l-2-1.3m2 1.3l-1.2-2.1M447.5 288.4l-2.4 2.2l-1.3 2m1.3-2l-2.7 1.5M447.5 288.4l-2.8-1.8l-2.6-1.1m2.6 1.1l-1.9-2.1M442.8 287.1l1 2.7l1.4 2m-1.4-2l.1 2.5M442.8 287.1l-3.6 .7l-2.6 1.1m2.6-1.1l-3.3 .1M432.2 288.7l-.5 3.1l.3 2.5m-.3-2.5l-1.3 2.7M432.2 288.7l-4.1-.4l-3.3 .2m3.3-.2l-3.5-1.1M440.8 280.5l-3.5 .7l-2.6 1m2.6-1l-3.4 0M440.8 280.5l-.9-2.7l-1.3-2m1.3 2l0-2.6M429.5 280.6l-3.6 1.5l-2.6 1.6m2.6-1.6l-3.7 .6M429.5 280.6l-1.8-2.8l-2.1-1.9m2.1 1.9l-.8-2.8M459.7 275l-2.6 1.5l-1.7 1.6m1.7-1.6l-2.7 1M459.7 275l-2-2l-2-1.2m2 1.2l-1.2-2M454.4 268.9l-3.6 .7l-2.6 1.1m2.6-1.1l-3.3 .1M454.4 268.9l-.9-2.7l-1.4-2m1.4 2l0-2.5M466.3 271.6l-2-2l-2-1.3m2 1.3l-1.2-2.1M466.3 271.6l2.6-1.5l1.7-1.5m-1.7 1.5l2.8-.8M462.3 264.5l-2.8-1.8l-2.6-1m2.6 1l-1.9-2.1M462.3 264.5l2.4-2l1.5-2m-1.5 2l2.8-1.5M443 270.6l-2.4 2.1l-1.3 2m1.3-2l-2.7 1.6M443 270.6l-2.8-1.8l-2.6-1.1m2.6 1.1l-1.9-2.1M435.3 264.9l-3.6 1.4l-2.6 1.6m2.6-1.6l-3.7 .6M435.3 264.9l-1.8-2.8l-2.1-2m2.1 2l-.8-2.8M449.2 265.7l-2.8-1.9l-2.6-1m2.6 1l-1.9-2M449.2 265.7l2.4-2.1l1.4-2m-1.4 2l2.8-1.4M442.6 258.7l-3.6-1.6l-3.1-.7m3.1 .7l-2.7-1.9M442.6 258.7l2.1-2.7l1-2.4m-1 2.4l2.6-2.1M491.2 278.4l-1.4 1.9l-.6 1.7m.6-1.7l-1.8 1.5M491.2 278.4l-2.5-1.1l-2.2-.6m2.2 .6l-1.9-1.4M484.1 274.8l-2.6 1.5l-1.6 1.5m1.6-1.5l-2.7 .9M484.1 274.8l-2-2l-2-1.3m2 1.3l-1.2-2.1M495.1 273.8l-2.5-1.1l-2.3-.5m2.3 .5l-2-1.4M495.1 273.8l1.5-1.9l.7-1.7m-.7 1.7l1.9-1.5M488.6 269.1l-3.1-.8l-2.7-.2m2.7 .2l-2.6-1.2M488.6 269.1l1-2.4l.3-2m-.3 2l1.7-1.9M488.4 265.7l-2.5 1.5l-1.7 1.5m1.7-1.5l-2.8 .9M488.4 265.7l-1.9-2l-2.1-1.3m2.1 1.3l-1.2-2.1M483.1 259.6l-3.5 .7l-2.6 1m2.6-1l-3.4 0M483.1 259.6l-.8-2.7l-1.4-2m1.4 2l-.1-2.6M495 262.2l-1.9-2l-2-1.3m2 1.3l-1.2-2.1M495 262.2l2.7-1.4l1.7-1.6m-1.7 1.6l2.8-.9M491 255.2l-2.7-1.9l-2.6-1m2.6 1l-2-2M491 255.2l2.5-2.1l1.4-2m-1.4 2l2.8-1.4M507.2 272.2l-2.5-1.1l-2.2-.5m2.2 .5l-1.9-1.4M507.2 272.2l1.5-1.9l.8-1.7m-.8 1.7l1.9-1.4M512.1 266.9l-1.9-2l-2.1-1.3m2.1 1.3l-1.2-2.1M512.1 266.9l2.7-1.5l1.7-1.5m-1.7 1.5l2.7-.8M513.2 275.2l1.5-1.9l.7-1.7m-.7 1.7l1.9-1.4M513.2 275.2l2.5 1.2l2.2 .6m-2.2-.6l1.9 1.5M519.5 270.4l1.1-2.4l.3-2m-.3 2l1.6-1.9M519.5 270.4l3.1 .8l2.6 .3m-2.6-.3l2.5 1.3M506.5 260.3l-3.1-.8l-2.7-.2m2.7 .2l-2.6-1.2M506.5 260.3l1-2.4l.3-2m-.3 2l1.7-1.9M510.2 253.5l-2.8-1.8l-2.6-1m2.6 1l-1.9-2.1M510.2 253.5l2.4-2l1.5-2m-1.5 2l2.8-1.5M513.9 262.5l1.1-2.3l.3-2m-.3 2l1.6-2M513.9 262.5l3.1 .9l2.6 .2m-2.6-.2l2.5 1.2M519.4 256.1l.4-2.8l-.3-2.2m.3 2.2l1.2-2.4M519.4 256.1l3.6 .3l3-.1m-3 .1l3.1 1M471.5 264.9l-.9 2.4l-.2 2m.2-2l-1.6 2M471.5 264.9l-3.1-.7l-2.6-.2m2.6 .2l-2.5-1.2M462.6 262.2l-2.4 2.2l-1.3 2m1.3-2l-2.7 1.5M462.6 262.2l-2.8-1.8l-2.6-1m2.6 1l-1.9-2.1M474.3 259.2l-3.1-.7l-2.6-.2m2.6 .2l-2.5-1.2M474.3 259.2l1.1-2.3l.3-2m-.3 2l1.6-1.9M465.8 255.2l-3.7-.3l-2.9 .3m2.9-.3l-3.1-.9M465.8 255.2l.4-2.8l-.3-2.2m.3 2.2l1.2-2.4M464.6 251.5l-2.4 2.1l-1.3 2m1.3-2l-2.7 1.5M464.6 251.5l-2.8-1.8l-2.6-1.1m2.6 1.1l-1.9-2.1M456.9 245.7l-3.7 1.5l-2.5 1.6m2.5-1.6l-3.6 .6M456.9 245.7l-1.8-2.7l-2.1-2m2.1 2l-.8-2.9M470.7 246.5l-2.7-1.8l-2.6-1m2.6 1l-2-2.1M470.7 246.5l2.5-2l1.4-2m-1.4 2l2.8-1.5M464.2 239.5l-3.6-1.5l-3.2-.7m3.2 .7l-2.7-1.9M464.2 239.5l2.1-2.7l.9-2.4m-.9 2.4l2.6-2M487.2 255.4l-3.1-.8l-2.6-.2m2.6 .2l-2.6-1.2M487.2 255.4l1.1-2.4l.2-2m-.2 2l1.6-1.9M490.9 248.6l-2.8-1.8l-2.6-1m2.6 1l-1.9-2.1M490.9 248.6l2.4-2l1.5-2m-1.5 2l2.8-1.5M494.7 257.6l1-2.3l.3-2m-.3 2l1.6-2M494.7 257.6l3 .9l2.6 .2m-2.6-.2l2.5 1.2M500.1 251.2l.5-2.8l-.3-2.2m.3 2.2l1.2-2.4M500.1 251.2l3.6 .3l3-.1m-3 .1l3.2 1M482.7 242.4l-3.6-.3l-3 .3m3-.3l-3.2-.9M482.7 242.4l.4-2.8l-.3-2.2m.3 2.2l1.2-2.3M484.7 234.4l-3.6-1.5l-3.2-.7m3.2 .7l-2.8-2M484.7 234.4l2-2.7l1-2.4m-1 2.4l2.6-2.1M491.5 243.5l.5-2.7l-.3-2.3m.3 2.3l1.2-2.4M491.5 243.5l3.7 .4l2.9-.2m-2.9 .2l3.1 1M495.5 235.5l-.3-3.1l-1-2.4m1 2.4l.6-2.8M495.5 235.5l4.1-.2l3.2-.8m-3.2 .8l3.8 .5M533.7 299.8l-.3 1.9l.3 1.6m-.3-1.6l-.8 1.7M533.7 299.8l-2.6-.3l-2.1 .2m2.1-.2l-2.2-.6M526.1 298.7l-1.4 1.9l-.6 1.7m.6-1.7l-1.8 1.5M526.1 298.7l-2.5-1.1l-2.2-.5m2.2 .5l-1.9-1.4M534.7 295l-2.6-.3l-2 .2m2-.2l-2.2-.6M534.7 295l.4-2l-.2-1.6m.2 1.6l.9-1.7M527.2 292.8l-2.9 .2l-2.2 .6m2.2-.6l-2.6-.3M527.2 292.8l-.2-2.2l-.7-1.7m.7 1.7l.5-2M525.5 290.1l-1.4 1.9l-.6 1.7m.6-1.7l-1.8 1.5M525.5 290.1l-2.5-1.1l-2.2-.6m2.2 .6l-1.9-1.4M518.4 286.5l-2.6 1.5l-1.7 1.5m1.7-1.5l-2.7 .9M518.4 286.5l-2-2l-2-1.3m2 1.3l-1.2-2.1M529.4 285.5l-2.5-1.1l-2.3-.6m2.3 .6l-2-1.4M529.4 285.5l1.5-1.9l.7-1.7m-.7 1.7l1.9-1.5M522.9 280.8l-3.1-.8l-2.7-.2m2.7 .2l-2.6-1.2M522.9 280.8l1-2.4l.3-2m-.3 2l1.7-1.9M544 290.5l-2.6-.3l-2.1 .2m2.1-.2l-2.2-.6M544 290.5l.4-2l-.2-1.6m.2 1.6l.9-1.7M545.5 284.8l-2.5-1.1l-2.2-.5m2.2 .5l-1.9-1.4M545.5 284.8l1.5-1.9l.8-1.7m-.8 1.7l1.9-1.4M550.3 291.4l.3-2l-.1-1.6m.1 1.6l.9-1.7M550.3 291.4l2.5 .3l2.1-.1m-2.1 .1l2.3 .7M553.3 285.7l-.2-2.2l-.7-1.7m.7 1.7l.4-2M553.3 285.7l2.9-.1l2.2-.5m-2.2 .5l2.6 .4M537.9 280.9l-2.9 .2l-2.3 .5m2.3-.5l-2.7-.3M537.9 280.9l-.2-2.2l-.7-1.7m.7 1.7l.4-2M537.8 274.4l-3.1-.8l-2.6-.2m2.6 .2l-2.5-1.2M537.8 274.4l1.1-2.4l.3-2m-.3 2l1.6-1.9M545 280.7l-.2-2.2l-.7-1.7m.7 1.7l.5-2M545 280.7l2.9-.1l2.3-.5m-2.3 .5l2.7 .4M546.5 274l-.8-2.4l-1.3-1.8m1.3 1.8l-.2-2.3M546.5 274l3.2-.7l2.3-.9m-2.3 .9l3 0M539.4 279.5l-1.4 1.9l-.7 1.8m.7-1.8l-1.9 1.5M539.4 279.5l-2.6-1.1l-2.2-.5m2.2 .5l-1.9-1.4M532.2 275.9l-2.5 1.5l-1.7 1.6m1.7-1.6l-2.8 1M532.2 275.9l-1.9-2l-2.1-1.3m2.1 1.3l-1.2-2.1M543.2 274.9l-2.5-1.1l-2.3-.5m2.3 .5l-1.9-1.4M543.2 274.9l1.5-1.9l.7-1.7m-.7 1.7l1.9-1.4M536.7 270.2l-3.1-.8l-2.6-.1m2.6 .1l-2.6-1.2M536.7 270.2l1.1-2.3l.2-2m-.2 2l1.6-2M536.6 266.8l-2.6 1.5l-1.7 1.6m1.7-1.6l-2.8 1M536.6 266.8l-2-2l-2-1.3m2 1.3l-1.2-2.1M531.3 260.7l-3.6 .7l-2.6 1.1m2.6-1.1l-3.3 .1M531.3 260.7l-.9-2.7l-1.4-2m1.4 2l0-2.5M543.2 263.3l-2-1.9l-2-1.3m2 1.3l-1.2-2.1M543.2 263.3l2.6-1.4l1.7-1.5m-1.7 1.5l2.8-.9M539.2 256.3l-2.8-1.8l-2.6-1.1m2.6 1.1l-1.9-2.1M539.2 256.3l2.4-2.1l1.5-1.9m-1.5 1.9l2.8-1.4M555.4 273.4l-2.5-1.1l-2.3-.6m2.3 .6l-2-1.4M555.4 273.4l1.5-1.9l.7-1.7m-.7 1.7l1.9-1.5M560.2 268l-1.9-2l-2-1.3m2 1.3l-1.2-2.1M560.2 268l2.7-1.4l1.7-1.6m-1.7 1.6l2.8-.9M561.3 276.4l1.5-1.9l.8-1.7m-.8 1.7l1.9-1.5M561.3 276.4l2.5 1.1l2.2 .6m-2.2-.6l1.9 1.5M567.7 271.5l1-2.3l.3-2m-.3 2l1.7-1.9M567.7 271.5l3 .9l2.7 .2m-2.7-.2l2.5 1.2M554.6 261.4l-3.1-.7l-2.6-.2m2.6 .2l-2.6-1.2M554.6 261.4l1.1-2.3l.2-2m-.2 2l1.6-1.9M558.3 254.7l-2.8-1.8l-2.6-1.1m2.6 1.1l-1.9-2.1M558.3 254.7l2.4-2.1l1.5-1.9m-1.5 1.9l2.8-1.4M562.1 263.7l1-2.4l.3-2m-.3 2l1.6-1.9M562.1 263.7l3 .8l2.6 .2m-2.6-.2l2.5 1.3M567.5 257.2l.5-2.8l-.3-2.2m.3 2.2l1.2-2.3M567.5 257.2l3.6 .4l3-.2m-3 .2l3.2 .9M562.3 294.3l-2.6-.2l-2.1 .2m2.1-.2l-2.2-.6M562.3 294.3l.4-1.9l-.2-1.6m.2 1.6l.8-1.7M563.8 288.6l-2.5-1.1l-2.2-.5m2.2 .5l-1.9-1.4M563.8 288.6l1.5-1.9l.8-1.7m-.8 1.7l1.9-1.4M568.6 295.2l.3-1.9l-.2-1.6m.2 1.6l.9-1.7M568.6 295.2l2.5 .3l2.1-.1m-2.1 .1l2.2 .7M571.5 289.6l-.2-2.3l-.6-1.7m.6 1.7l.5-2M571.5 289.6l2.9-.2l2.3-.5m-2.3 .5l2.7 .4M575.2 288.3l-2.5-1.1l-2.3-.5m2.3 .5l-2-1.4M575.2 288.3l1.5-1.9l.7-1.7m-.7 1.7l1.9-1.4M580.1 283l-2-2l-2-1.3m2 1.3l-1.2-2.1M580.1 283l2.6-1.5l1.7-1.5m-1.7 1.5l2.8-.9M581.2 291.3l1.5-1.9l.7-1.7m-.7 1.7l1.8-1.4M581.2 291.3l2.4 1.2l2.3 .6m-2.3-.6l1.9 1.5M587.5 286.5l1.1-2.4l.2-2m-.2 2l1.6-1.9M587.5 286.5l3.1 .8l2.6 .3m-2.6-.3l2.5 1.3M574.3 302.3l.4-1.9l-.2-1.6m.2 1.6l.9-1.7M574.3 302.3l2.6 .4l2.1-.2m-2.1 .2l2.2 .7M581.8 303.6l1.5-1.9l.7-1.7m-.7 1.7l1.9-1.4M581.8 303.6l2.5 1.2l2.2 .6m-2.2-.6l1.8 1.4M573 307.1l2.6 .3l2.1-.1m-2.1 .1l2.2 .7M573 307.1l-.4 1.9l.1 1.6m-.1-1.6l-1 1.7M580.5 309.5l2.9-.2l2.2-.4m-2.2 .4l2.6 .4M580.5 309.5l.1 2.2l.6 1.7m-.6-1.7l-.6 2M587.1 297.9l-.2-2.2l-.7-1.8m.7 1.8l.4-2.1M587.1 297.9l2.9-.2l2.3-.4m-2.3 .4l2.6 .4M595.7 297.9l1-2.3l.3-2m-.3 2l1.6-1.9M595.7 297.9l3 .9l2.6 .2m-2.6-.2l2.5 1.2M587.1 303.3l3-.1l2.2-.5m-2.2 .5l2.6 .4M587.1 303.3l.1 2.2l.7 1.7m-.7-1.7l-.5 2M596 304.6l3.1-.7l2.4-.9m-2.4 .9l3.1 0M596 304.6l.8 2.4l1.2 1.8m-1.2-1.8l0 2.3M570.3 277.5l-2.9 .2l-2.2 .5m2.2-.5l-2.6-.4M570.3 277.5l-.2-2.2l-.6-1.8m.6 1.8l.5-2M570.3 270.9l-3.1-.7l-2.6-.2m2.6 .2l-2.6-1.2M570.3 270.9l1-2.3l.3-2m-.3 2l1.7-1.9M577.5 277.3l-.2-2.2l-.7-1.7m.7 1.7l.4-2M577.5 277.3l2.9-.1l2.3-.5m-2.3 .5l2.6 .4M579 270.6l-.9-2.4l-1.3-1.8m1.3 1.8l-.1-2.3M579 270.6l3.2-.7l2.3-.9m-2.3 .9l3 0M582.6 268.6l-3.1-.8l-2.6-.2m2.6 .2l-2.5-1.2M582.6 268.6l1.1-2.4l.3-1.9m-.3 1.9l1.6-1.9M586.3 261.8l-2.7-1.8l-2.6-1m2.6 1l-2-2.1M586.3 261.8l2.5-2l1.4-2m-1.4 2l2.8-1.5M590.1 270.8l1.1-2.3l.3-2m-.3 2l1.6-1.9M590.1 270.8l3.1 .9l2.6 .2m-2.6-.2l2.5 1.2M595.6 264.4l.4-2.8l-.3-2.2m.3 2.2l1.2-2.4M595.6 264.4l3.6 .4l2.9-.2m-2.9 .2l3.1 .9M586 284.1l-.2-2.2l-.7-1.7m.7 1.7l.4-2M586 284.1l2.9-.1l2.3-.5m-2.3 .5l2.6 .4M594.6 284.2l1-2.4l.3-2m-.3 2l1.7-1.9M594.6 284.2l3 .8l2.7 .3m-2.7-.3l2.5 1.3M586 289.5l3-.1l2.2-.5m-2.2 .5l2.6 .4M586 289.5l.1 2.3l.7 1.7m-.7-1.7l-.5 2M594.9 290.8l3.1-.6l2.4-1m-2.4 1l3.1-.1M594.9 290.8l.8 2.4l1.2 1.8m-1.2-1.8l0 2.3M598.6 276.9l-.9-2.3l-1.3-1.8m1.3 1.8l-.1-2.3M598.6 276.9l3.2-.6l2.3-.9m-2.3 .9l3-.1M608 275.5l.5-2.8l-.3-2.2m.3 2.2l1.2-2.4M608 275.5l3.6 .4l3-.2m-3 .2l3.2 .9M600.3 282.9l3.2-.7l2.3-.9m-2.3 .9l3 0M600.3 282.9l.8 2.4l1.2 1.8m-1.2-1.8l0 2.3M610.4 282.7l3.3-1.2l2.3-1.5m-2.3 1.5l3.3-.6M610.4 282.7l1.6 2.5l1.9 1.8m-1.9-1.8l.8 2.5M518 272.1l.3 2.2l.7 1.7m-.7-1.7l-.4 2M518 272.1l-2.9 .2l-2.3 .6m2.3-.6l-2.7-.3M509.4 272.3l-1 2.3l-.1 2.1m.1-2.1l-1.5 2M509.4 272.3l-3.1-.8l-2.6-.2m2.6 .2l-2.6-1.2M517.7 266.7l-2.9 .2l-2.3 .5m2.3-.5l-2.7-.3M517.7 266.7l-.2-2.2l-.7-1.7m.7 1.7l.4-2M508.8 265.7l-3.2 .7l-2.3 1m2.3-1l-3 .1M508.8 265.7l-.9-2.4l-1.3-1.8m1.3 1.8l-.2-2.3M506.1 262.9l-1 2.4l-.2 2m.2-2l-1.5 2M506.1 262.9l-3.1-.7l-2.7-.2m2.7 .2l-2.6-1.2M497.1 260.2l-2.3 2.2l-1.4 2m1.4-2l-2.7 1.5M497.1 260.2l-2.7-1.8l-2.6-1m2.6 1l-2-2.1M508.9 257.2l-3.1-.7l-2.7-.2m2.7 .2l-2.6-1.2M508.9 257.2l1-2.3l.3-2m-.3 2l1.7-1.9M500.3 253.2l-3.6-.3l-3 .3m3-.3l-3.2-.9M500.3 253.2l.4-2.8l-.3-2.2m.3 2.2l1.2-2.3M526.5 260.1l-2.9 .2l-2.3 .6m2.3-.6l-2.7-.3M526.5 260.1l-.2-2.2l-.7-1.7m.7 1.7l.4-2M526.4 253.6l-3.1-.8l-2.6-.1m2.6 .1l-2.6-1.2M526.4 253.6l1.1-2.3l.2-2m-.2 2l1.6-1.9M533.6 260l-.2-2.2l-.7-1.7m.7 1.7l.5-2M533.6 260l2.9-.1l2.3-.5m-2.3 .5l2.6 .3M535.1 253.2l-.9-2.3l-1.2-1.8m1.2 1.8l-.1-2.3M535.1 253.2l3.2-.6l2.3-.9m-2.3 .9l3 0M516.8 250.7l-3.1 .7l-2.3 1m2.3-1l-3 .1M516.8 250.7l-.9-2.4l-1.3-1.8m1.3 1.8l-.1-2.3M514.7 243.5l-3.6-.3l-3 .3m3-.3l-3.2-.8M514.7 243.5l.5-2.7l-.3-2.3m.3 2.3l1.2-2.4M524.6 249.2l-.9-2.3l-1.3-1.8m1.3 1.8l-.1-2.3M524.6 249.2l3.1-.6l2.4-.9m-2.4 .9l3 0M524.2 241.6l-1.7-2.5l-2-1.7m2 1.7l-.9-2.4M524.2 241.6l3.2-1.3l2.3-1.4m-2.3 1.4l3.3-.6M518 248.9l-1 2.4l-.1 2m.1-2l-1.5 1.9M518 248.9l-3.1-.8l-2.6-.1m2.6 .1l-2.6-1.2M509.1 246.2l-2.4 2.2l-1.3 2m1.3-2l-2.7 1.5M509.1 246.2l-2.8-1.8l-2.6-1.1m2.6 1.1l-1.9-2.1M520.8 243.2l-3.1-.8l-2.6-.1m2.6 .1l-2.5-1.2M520.8 243.2l1.1-2.3l.3-2m-.3 2l1.6-2M512.2 239.2l-3.6-.3l-2.9 .3m2.9-.3l-3.2-.9M512.2 239.2l.5-2.8l-.3-2.2m.3 2.2l1.2-2.4M511 235.5l-2.3 2.1l-1.4 2m1.4-2l-2.7 1.5M511 235.5l-2.7-1.8l-2.6-1.1m2.6 1.1l-2-2.1M503.4 229.7l-3.7 1.4l-2.5 1.7m2.5-1.7l-3.7 .7M503.4 229.7l-1.8-2.8l-2.1-1.9m2.1 1.9l-.8-2.8M517.2 230.5l-2.8-1.8l-2.6-1.1m2.6 1.1l-1.9-2.1M517.2 230.5l2.5-2l1.4-2m-1.4 2l2.7-1.5M510.7 223.5l-3.6-1.5l-3.2-.7m3.2 .7l-2.8-1.9M510.7 223.5l2-2.7l1-2.4m-1 2.4l2.6-2M533.7 239.4l-3.1-.8l-2.7-.2m2.7 .2l-2.6-1.2M533.7 239.4l1-2.4l.3-2m-.3 2l1.7-1.9M537.4 232.6l-2.8-1.8l-2.6-1.1m2.6 1.1l-1.9-2.1M537.4 232.6l2.4-2l1.5-2m-1.5 2l2.8-1.5M541.1 241.6l1.1-2.3l.3-2m-.3 2l1.6-2M541.1 241.6l3.1 .8l2.6 .3m-2.6-.3l2.5 1.3M546.6 235.1l.4-2.7l-.3-2.2m.3 2.2l1.2-2.4M546.6 235.1l3.6 .4l3-.2m-3 .2l3.1 1M529.1 226.4l-3.6-.3l-2.9 .3m2.9-.3l-3.2-.9M529.1 226.4l.5-2.8l-.3-2.2m.3 2.2l1.2-2.4M531.1 218.3l-3.5-1.5l-3.2-.7m3.2 .7l-2.8-1.9M531.1 218.3l2.1-2.6l1-2.5m-1 2.5l2.6-2.1M538 227.5l.5-2.7l-.3-2.3m.3 2.3l1.1-2.4M538 227.5l3.6 .4l3-.2m-3 .2l3.2 1M542 219.5l-.3-3.1l-1.1-2.4m1.1 2.4l.5-2.9M542 219.5l4.1-.2l3.2-.8m-3.2 .8l3.7 .5M547.7 261.1l-2.9 .2l-2.3 .6m2.3-.6l-2.7-.3M547.7 261.1l-.2-2.2l-.7-1.7m.7 1.7l.4-2M547.6 254.6l-3.1-.8l-2.6-.1m2.6 .1l-2.5-1.2M547.6 254.6l1.1-2.3l.3-2m-.3 2l1.6-2M554.8 261l-.2-2.2l-.7-1.7m.7 1.7l.5-2M554.8 261l2.9-.1l2.3-.5m-2.3 .5l2.7 .3M556.4 254.2l-.9-2.3l-1.3-1.8m1.3 1.8l-.2-2.3M556.4 254.2l3.1-.6l2.3-.9m-2.3 .9l3-.1M560 252.2l-3.1-.7l-2.7-.2m2.7 .2l-2.6-1.2M560 252.2l1-2.3l.3-2m-.3 2l1.7-1.9M563.7 245.5l-2.8-1.8l-2.6-1.1m2.6 1.1l-1.9-2.1M563.7 245.5l2.4-2.1l1.5-1.9m-1.5 1.9l2.8-1.4M567.4 254.5l1.1-2.4l.3-2m-.3 2l1.6-1.9M567.4 254.5l3.1 .8l2.6 .3m-2.6-.3l2.5 1.3M572.9 248l.4-2.7l-.3-2.3m.3 2.3l1.2-2.4M572.9 248l3.6 .4l3-.2m-3 .2l3.1 1M563.3 267.8l-.2-2.2l-.7-1.8m.7 1.8l.5-2M563.3 267.8l2.9-.1l2.3-.5m-2.3 .5l2.7 .3M571.9 267.8l1.1-2.3l.2-2m-.2 2l1.6-1.9M571.9 267.8l3.1 .9l2.6 .2m-2.6-.2l2.5 1.2M563.4 273.2l2.9-.1l2.3-.5m-2.3 .5l2.6 .4M563.4 273.2l.1 2.2l.6 1.7m-.6-1.7l-.6 2M572.2 274.5l3.2-.7l2.3-.9m-2.3 .9l3 0M572.2 274.5l.8 2.4l1.2 1.8m-1.2-1.8l0 2.3M575.9 260.6l-.9-2.4l-1.2-1.7m1.2 1.7l-.1-2.3M575.9 260.6l3.2-.7l2.3-.9m-2.3 .9l3 0M585.4 259.1l.4-2.7l-.3-2.2m.3 2.2l1.2-2.4M585.4 259.1l3.6 .4l2.9-.2m-2.9 .2l3.1 1M577.7 266.5l3.1-.6l2.4-.9m-2.4 .9l3-.1M577.7 266.5l.8 2.4l1.2 1.8m-1.2-1.8l0 2.3M587.8 266.4l3.2-1.3l2.3-1.4m-2.3 1.4l3.3-.6M587.8 266.4l1.6 2.5l1.8 1.7m-1.8-1.7l.7 2.5M551.3 241.2l-3.1 .7l-2.3 1m2.3-1l-3 .1M551.3 241.2l-.9-2.4l-1.2-1.7m1.2 1.7l-.1-2.3M549.3 234.1l-3.7-.3l-2.9 .2m2.9-.2l-3.1-.9M549.3 234.1l.4-2.8l-.3-2.2m.3 2.2l1.2-2.4M559.1 239.8l-.9-2.4l-1.2-1.8m1.2 1.8l-.1-2.3M559.1 239.8l3.2-.7l2.3-.9m-2.3 .9l3 0M558.7 232.1l-1.7-2.4l-1.9-1.7m1.9 1.7l-.8-2.5M558.7 232.1l3.3-1.2l2.3-1.5m-2.3 1.5l3.3-.6M562.1 229.3l-3.6-.3l-3 .3m3-.3l-3.2-.9M562.1 229.3l.4-2.8l-.3-2.2m.3 2.2l1.2-2.4M564.1 221.2l-3.6-1.5l-3.2-.7m3.2 .7l-2.8-1.9M564.1 221.2l2-2.7l1-2.4m-1 2.4l2.6-2M571 230.4l.4-2.7l-.3-2.3m.3 2.3l1.2-2.4M571 230.4l3.6 .4l2.9-.2m-2.9 .2l3.1 .9M575 222.4l-.4-3.1l-1-2.4m1 2.4l.6-2.9M575 222.4l4-.2l3.2-.8m-3.2 .8l3.8 .4M570.5 245.7l-.9-2.4l-1.3-1.7m1.3 1.7l-.1-2.2M570.5 245.7l3.2-.6l2.3-1m-2.3 1l3-.1M579.9 244.3l.5-2.8l-.3-2.2m.3 2.2l1.2-2.4M579.9 244.3l3.7 .4l2.9-.2m-2.9 .2l3.1 .9M572.3 251.7l3.1-.7l2.3-.9m-2.3 .9l3 0M572.3 251.7l.7 2.4l1.2 1.8m-1.2-1.8l.1 2.2M582.3 251.5l3.3-1.3l2.3-1.4m-2.3 1.4l3.3-.6M582.3 251.5l1.6 2.5l1.9 1.7m-1.9-1.7l.8 2.5M582.2 235.6l-1.8-2.4l-1.9-1.7m1.9 1.7l-.8-2.5M582.2 235.6l3.2-1.2l2.3-1.5m-2.3 1.5l3.3-.6M592 232.4l-.3-3.1l-1-2.4m1 2.4l.6-2.9M592 232.4l4.1-.3l3.2-.7m-3.2 .7l3.7 .5M585.9 241.8l3.2-1.2l2.3-1.5m-2.3 1.5l3.3-.6M585.9 241.8l1.6 2.5l1.8 1.8m-1.8-1.8l.7 2.5M596.9 239.9l3.2-2l2-2m-2 2l3.4-1.2M596.9 239.9l2.5 2.4l2.6 1.6m-2.6-1.6l1.6 2.6M576.1 351.1l.7 1.7l.9 1.3m-.9-1.3l.1 1.6M576.1 351.1l-2.2 .5l-1.7 .7m1.7-.7l-2.2 .1M569.4 352.3l-.3 1.9l.3 1.6m-.3-1.6l-.8 1.7M569.4 352.3l-2.6-.3l-2.1 .2m2.1-.2l-2.2-.6M574.8 346.9l-2.3 .5l-1.6 .7m1.6-.7l-2.1 .1M574.8 346.9l-.6-1.7l-.9-1.2m.9 1.2l-.1-1.6M567.6 347.2l-2.3 .9l-1.6 1m1.6-1l-2.3 .4M567.6 347.2l-1.2-1.8l-1.3-1.2m1.3 1.2l-.5-1.8M564.9 345.3l-.2 2l.2 1.6m-.2-1.6l-.8 1.7M564.9 345.3l-2.5-.2l-2.1 .2m2.1-.2l-2.3-.6M557.4 344.3l-1.4 1.9l-.6 1.7m.6-1.7l-1.8 1.5M557.4 344.3l-2.5-1.1l-2.3-.6m2.3 .6l-1.9-1.4M566 340.6l-2.6-.3l-2.1 .2m2.1-.2l-2.2-.6M566 340.6l.4-2l-.2-1.6m.2 1.6l.8-1.7M558.5 338.4l-2.9 .2l-2.3 .5m2.3-.5l-2.7-.3M558.5 338.4l-.2-2.2l-.7-1.7m.7 1.7l.4-2M580.3 340.8l-2.2 .5l-1.7 .7m1.7-.7l-2.1 0M580.3 340.8l-.6-1.7l-.9-1.3m.9 1.3l0-1.6M579 335.7l-2.6-.2l-2.1 .1m2.1-.1l-2.2-.7M579 335.7l.3-1.9l-.1-1.6m.1 1.6l.9-1.7M585.9 339.9l-.6-1.7l-.9-1.3m.9 1.3l-.1-1.7M585.9 339.9l2.2-.5l1.7-.6m-1.7 .6l2.2 0M585.7 334.4l-1.2-1.7l-1.3-1.3m1.3 1.3l-.5-1.8M585.7 334.4l2.4-.9l1.6-1m-1.6 1l2.3-.3M570.9 334.5l-2.3 .9l-1.6 1.1m1.6-1.1l-2.3 .5M570.9 334.5l-1.2-1.7l-1.4-1.3m1.4 1.3l-.6-1.8M567.8 329.2l-2.9 .2l-2.2 .5m2.2-.5l-2.6-.3M567.8 329.2l-.2-2.2l-.7-1.7m.7 1.7l.5-2M576.7 332.5l-1.2-1.8l-1.3-1.2m1.3 1.2l-.6-1.7M576.7 332.5l2.3-.9l1.6-1m-1.6 1l2.4-.3M574.8 326.6l-1.8-1.8l-1.9-1.1m1.9 1.1l-1.1-1.8M574.8 326.6l2.3-1.4l1.5-1.4m-1.5 1.4l2.5-.8M571.5 333l-.3 2l.2 1.5m-.2-1.5l-.8 1.7M571.5 333l-2.6-.2l-2.1 .1m2.1-.1l-2.2-.7M563.9 331.9l-1.4 2l-.6 1.7m.6-1.7l-1.8 1.5M563.9 331.9l-2.5-1.1l-2.2-.5m2.2 .5l-1.9-1.4M572.5 328.2l-2.6-.2l-2 .1m2-.1l-2.2-.7M572.5 328.2l.4-1.9l-.2-1.6m.2 1.6l.9-1.7M565 326.1l-2.9 .2l-2.2 .5m2.2-.5l-2.6-.4M565 326.1l-.2-2.2l-.7-1.8m.7 1.8l.5-2.1M563.3 323.3l-1.4 1.9l-.6 1.8m.6-1.8l-1.8 1.5M563.3 323.3l-2.5-1.1l-2.2-.5m2.2 .5l-1.9-1.4M556.2 319.7l-2.6 1.5l-1.7 1.6m1.7-1.6l-2.7 1M556.2 319.7l-2-2l-2-1.3m2 1.3l-1.2-2.1M567.2 318.7l-2.5-1.1l-2.3-.5m2.3 .5l-2-1.4M567.2 318.7l1.5-1.9l.7-1.7m-.7 1.7l1.9-1.4M560.7 314l-3.1-.8l-2.7-.1m2.7 .1l-2.6-1.2M560.7 314l1-2.3l.3-2m-.3 2l1.6-2M581.8 323.7l-2.6-.2l-2.1 .2m2.1-.2l-2.2-.7M581.8 323.7l.4-1.9l-.2-1.6m.2 1.6l.9-1.7M583.3 318l-2.5-1.1l-2.2-.5m2.2 .5l-1.9-1.4M583.3 318l1.5-1.9l.8-1.7m-.8 1.7l1.9-1.4M588.1 324.6l.3-1.9l-.1-1.6m.1 1.6l.9-1.7M588.1 324.6l2.5 .3l2.1-.1m-2.1 .1l2.3 .7M591.1 318.9l-.2-2.2l-.7-1.7m.7 1.7l.4-2M591.1 318.9l2.9-.1l2.2-.5m-2.2 .5l2.6 .4M575.7 314.1l-2.9 .2l-2.3 .6m2.3-.6l-2.7-.3M575.7 314.1l-.2-2.2l-.7-1.7m.7 1.7l.4-2M575.6 307.6l-3.1-.8l-2.6-.1m2.6 .1l-2.5-1.2M575.6 307.6l1.1-2.3l.3-2m-.3 2l1.6-2M582.8 314l-.2-2.2l-.7-1.8m.7 1.8l.5-2M582.8 314l2.9-.1l2.3-.5m-2.3 .5l2.7 .3M584.3 307.2l-.9-2.4l-1.2-1.7m1.2 1.7l-.1-2.2M584.3 307.2l3.2-.6l2.3-1m-2.3 1l3-.1M597.1 339.1l-2.2 .5l-1.7 .7m1.7-.7l-2.2 .1M597.1 339.1l-.6-1.7l-.9-1.2m.9 1.2l0-1.6M595.8 334l-2.6-.2l-2.1 .1m2.1-.1l-2.3-.7M595.8 334l.3-1.9l-.2-1.6m.2 1.6l.9-1.7M602.7 338.2l-.6-1.7l-.9-1.3m.9 1.3l-.1-1.6M602.7 338.2l2.2-.5l1.7-.6m-1.7 .6l2.1 0M602.5 332.7l-1.2-1.7l-1.3-1.3m1.3 1.3l-.5-1.8M602.5 332.7l2.3-.8l1.7-1m-1.7 1l2.4-.4M604.9 330.8l-2.5-.3l-2.1 .2m2.1-.2l-2.3-.6M604.9 330.8l.4-2l-.2-1.6m.2 1.6l.9-1.7M606.5 325.1l-2.5-1.1l-2.3-.6m2.3 .6l-2-1.5M606.5 325.1l1.5-1.9l.7-1.7m-.7 1.7l1.9-1.5M611.2 331.6l.4-1.9l-.2-1.6m.2 1.6l.9-1.7M611.2 331.6l2.6 .3l2.1-.1m-2.1 .1l2.2 .7M614.2 326l-.2-2.2l-.7-1.8m.7 1.8l.4-2M614.2 326l2.9-.1l2.3-.5m-2.3 .5l2.6 .3M610.7 342.5l-.6-1.7l-.9-1.3m.9 1.3l-.1-1.6M610.7 342.5l2.2-.4l1.7-.7m-1.7 .7l2.1 0M617.4 341.6l.3-2l-.1-1.6m.1 1.6l.9-1.7M617.4 341.6l2.5 .3l2.1-.1m-2.1 .1l2.2 .7M611.8 346.7l2.2-.4l1.7-.6m-1.7 .6l2.2 0M611.8 346.7l.5 1.8l.8 1.2m-.8-1.2l0 1.6M619 346.7l2.3-.8l1.6-1m-1.6 1l2.3-.4M619 346.7l1.1 1.8l1.3 1.3m-1.3-1.3l.4 1.8M619.1 335.4l-1.2-1.7l-1.3-1.2m1.3 1.2l-.5-1.8M619.1 335.4l2.3-.8l1.7-1m-1.7 1l2.4-.4M626.2 333.2l-.2-2.2l-.7-1.7m.7 1.7l.4-2M626.2 333.2l2.9-.1l2.2-.5m-2.2 .5l2.6 .4M621.6 339.9l2.4-.9l1.6-1m-1.6 1l2.3-.4M621.6 339.9l1.1 1.8l1.3 1.2m-1.3-1.2l.5 1.8M629.5 338.6l2.3-1.4l1.5-1.4m-1.5 1.4l2.4-.8M629.5 338.6l1.7 1.8l1.8 1.1m-1.8-1.1l1.1 1.8M596 323.1l-2.3 .9l-1.6 1.1m1.6-1.1l-2.3 .5M596 323.1l-1.2-1.7l-1.4-1.3m1.4 1.3l-.6-1.8M592.9 317.8l-2.9 .2l-2.2 .5m2.2-.5l-2.6-.3M592.9 317.8l-.2-2.2l-.7-1.7m.7 1.7l.5-2M601.8 321.1l-1.2-1.7l-1.3-1.3m1.3 1.3l-.5-1.8M601.8 321.1l2.3-.9l1.7-1m-1.7 1l2.4-.3M599.9 315.2l-1.8-1.7l-1.8-1.2m1.8 1.2l-1.1-1.9M599.9 315.2l2.3-1.4l1.5-1.4m-1.5 1.4l2.5-.8M602 312.6l-2.9 .2l-2.2 .5m2.2-.5l-2.6-.3M602 312.6l-.2-2.2l-.7-1.7m.7 1.7l.5-2M601.9 306.1l-3.1-.8l-2.6-.2m2.6 .2l-2.5-1.2M601.9 306.1l1.1-2.4l.3-2m-.3 2l1.6-1.9M609.2 312.4l-.2-2.2l-.7-1.7m.7 1.7l.4-2M609.2 312.4l2.9-.1l2.2-.5m-2.2 .5l2.6 .4M610.7 305.7l-.9-2.4l-1.3-1.8m1.3 1.8l-.1-2.3M610.7 305.7l3.1-.7l2.4-.9m-2.4 .9l3 0M611.9 324.4l-1.2-1.7l-1.4-1.2m1.4 1.2l-.6-1.8M611.9 324.4l2.3-.8l1.6-1m-1.6 1l2.3-.4M619 322.2l-.3-2.2l-.6-1.7m.6 1.7l.5-2M619 322.2l2.9-.1l2.2-.5m-2.2 .5l2.6 .4M614.4 328.9l2.4-.9l1.6-1m-1.6 1l2.3-.4M614.4 328.9l1.1 1.8l1.3 1.2m-1.3-1.2l.5 1.8M622.3 327.6l2.3-1.4l1.5-1.4m-1.5 1.4l2.4-.8M622.3 327.6l1.7 1.8l1.8 1.1m-1.8-1.1l1.1 1.8M618.9 315.2l-1.8-1.7l-1.8-1.1m1.8 1.1l-1.1-1.9M618.9 315.2l2.3-1.4l1.5-1.3m-1.5 1.3l2.5-.8M626 311.5l-.9-2.4l-1.2-1.7m1.2 1.7l-.1-2.2M626 311.5l3.2-.6l2.3-1m-2.3 1l3-.1M623.1 319.6l2.3-1.3l1.5-1.4m-1.5 1.4l2.4-.9M623.1 319.6l1.8 1.8l1.8 1.1m-1.8-1.1l1 1.9M631.3 316.8l2.1-1.9l1.2-1.8m-1.2 1.8l2.4-1.3M631.3 316.8l2.5 1.6l2.3 1m-2.3-1l1.7 1.9M599.8 325.1l-.3 2l.3 1.6m-.3-1.6l-.8 1.7M599.8 325.1l-2.6-.2l-2.1 .1m2.1-.1l-2.2-.7M592.3 324l-1.4 2l-.7 1.7m.7-1.7l-1.9 1.5M592.3 324l-2.5-1.1l-2.3-.5m2.3 .5l-2-1.4M600.9 320.3l-2.6-.2l-2.1 .2m2.1-.2l-2.3-.6M600.9 320.3l.3-1.9l-.2-1.6m.2 1.6l.9-1.7M593.3 318.2l-2.9 .2l-2.2 .5m2.2-.5l-2.6-.3M593.3 318.2l-.2-2.2l-.6-1.7m.6 1.7l.5-2M591.7 315.4l-1.5 2l-.6 1.7m.6-1.7l-1.8 1.5M591.7 315.4l-2.6-1.1l-2.2-.5m2.2 .5l-1.9-1.4M584.5 311.8l-2.6 1.5l-1.6 1.6m1.6-1.6l-2.7 1M584.5 311.8l-1.9-2l-2.1-1.3m2.1 1.3l-1.2-2.1M595.5 310.8l-2.5-1.1l-2.3-.5m2.3 .5l-2-1.4M595.5 310.8l1.5-1.9l.7-1.7m-.7 1.7l1.9-1.4M589 306.1l-3.1-.8l-2.6-.1m2.6 .1l-2.6-1.2M589 306.1l1.1-2.3l.2-2m-.2 2l1.6-2M610.1 315.8l-2.5-.2l-2.1 .2m2.1-.2l-2.3-.6M610.1 315.8l.4-1.9l-.2-1.6m.2 1.6l.9-1.7M611.7 310.2l-2.5-1.2l-2.3-.5m2.3 .5l-2-1.4M611.7 310.2l1.5-1.9l.7-1.7m-.7 1.7l1.9-1.5M616.4 316.7l.4-1.9l-.2-1.6m.2 1.6l.9-1.7M616.4 316.7l2.6 .3l2.1-.1m-2.1 .1l2.2 .7M619.4 311.1l-.2-2.2l-.7-1.8m.7 1.8l.4-2.1M619.4 311.1l2.9-.2l2.3-.4m-2.3 .4l2.6 .4M604 306.2l-2.9 .2l-2.2 .6m2.2-.6l-2.6-.3M604 306.2l-.2-2.2l-.7-1.7m.7 1.7l.5-2M603.9 299.7l-3.1-.8l-2.6-.1m2.6 .1l-2.5-1.2M603.9 299.7l1.1-2.3l.3-2m-.3 2l1.6-2M611.2 306.1l-.2-2.2l-.7-1.7m.7 1.7l.4-2M611.2 306.1l2.9-.1l2.2-.5m-2.2 .5l2.6 .3M612.7 299.3l-.9-2.3l-1.3-1.8m1.3 1.8l-.1-2.3M612.7 299.3l3.1-.6l2.4-.9m-2.4 .9l3 0M605.5 304.9l-1.4 1.9l-.7 1.7m.7-1.7l-1.8 1.5M605.5 304.9l-2.5-1.1l-2.3-.6m2.3 .6l-2-1.4M598.4 301.3l-2.6 1.5l-1.7 1.5m1.7-1.5l-2.8 .9M598.4 301.3l-2-2l-2-1.3m2 1.3l-1.2-2.1M609.3 300.3l-2.5-1.1l-2.2-.5m2.2 .5l-1.9-1.4M609.3 300.3l1.5-1.9l.8-1.7m-.8 1.7l1.9-1.5M602.8 295.6l-3.1-.8l-2.6-.2m2.6 .2l-2.5-1.2M602.8 295.6l1.1-2.4l.3-2m-.3 2l1.6-1.9M602.7 292.2l-2.6 1.5l-1.6 1.5m1.6-1.5l-2.7 .9M602.7 292.2l-2-2l-2-1.3m2 1.3l-1.2-2.1M597.4 286.1l-3.5 .7l-2.7 1m2.7-1l-3.4 0M597.4 286.1l-.9-2.7l-1.3-2m1.3 2l0-2.6M609.3 288.7l-2-2l-2-1.3m2 1.3l-1.2-2.1M609.3 288.7l2.6-1.4l1.8-1.6m-1.8 1.6l2.8-.9M605.3 281.7l-2.8-1.9l-2.6-1m2.6 1l-1.9-2M605.3 281.7l2.5-2.1l1.4-2m-1.4 2l2.7-1.4M621.5 298.7l-2.5-1.1l-2.3-.5m2.3 .5l-2-1.4M621.5 298.7l1.5-1.9l.7-1.7m-.7 1.7l1.9-1.4M626.4 293.4l-2-2l-2-1.3m2 1.3l-1.2-2.1M626.4 293.4l2.6-1.5l1.8-1.5m-1.8 1.5l2.8-.8M627.5 301.7l1.5-1.9l.7-1.7m-.7 1.7l1.9-1.4M627.5 301.7l2.4 1.2l2.3 .6m-2.3-.6l1.9 1.5M633.8 296.9l1.1-2.4l.3-2m-.3 2l1.6-1.9M633.8 296.9l3.1 .8l2.6 .3m-2.6-.3l2.5 1.3M620.7 286.8l-3.1-.8l-2.6-.2m2.6 .2l-2.5-1.2M620.7 286.8l1.1-2.4l.3-2m-.3 2l1.6-1.9M624.4 280l-2.7-1.8l-2.6-1m2.6 1l-2-2.1M624.4 280l2.5-2l1.4-2m-1.4 2l2.8-1.5M628.2 289l1-2.3l.3-2m-.3 2l1.7-2M628.2 289l3.1 .9l2.6 .2m-2.6-.2l2.5 1.2M633.6 282.6l.5-2.8l-.3-2.2m.3 2.2l1.2-2.4M633.6 282.6l3.7 .3l2.9-.1m-2.9 .1l3.1 1M628.4 319.7l-2.6-.2l-2 .1m2-.1l-2.2-.7M628.4 319.7l.4-2l-.2-1.5m.2 1.5l.9-1.6M630 314l-2.6-1.1l-2.2-.5m2.2 .5l-1.9-1.4M630 314l1.5-1.9l.7-1.7m-.7 1.7l1.8-1.4M634.7 320.6l.4-2l-.2-1.6m.2 1.6l.8-1.7M634.7 320.6l2.6 .3l2.1-.1m-2.1 .1l2.2 .7M637.7 314.9l-.2-2.2l-.7-1.7m.7 1.7l.4-2M637.7 314.9l2.9-.1l2.2-.5m-2.2 .5l2.6 .4M641.3 313.7l-2.5-1.1l-2.2-.6m2.2 .6l-1.9-1.4M641.3 313.7l1.5-1.9l.8-1.7m-.8 1.7l1.9-1.5M646.2 308.3l-2-2l-2-1.3m2 1.3l-1.2-2.1M646.2 308.3l2.6-1.4l1.8-1.5m-1.8 1.5l2.8-.9M647.3 316.7l1.5-1.9l.7-1.7m-.7 1.7l1.9-1.5M647.3 316.7l2.5 1.2l2.2 .5m-2.2-.5l1.8 1.4M653.6 311.8l1.1-2.3l.3-2m-.3 2l1.6-1.9M653.6 311.8l3.1 .9l2.6 .2m-2.6-.2l2.5 1.2M640.4 327.7l.4-1.9l-.2-1.6m.2 1.6l.9-1.7M640.4 327.7l2.6 .3l2.1-.1m-2.1 .1l2.2 .7M647.9 329l1.5-1.9l.7-1.7m-.7 1.7l1.9-1.5M647.9 329l2.5 1.1l2.2 .6m-2.2-.6l1.9 1.5M639.2 332.5l2.5 .3l2.1-.1m-2.1 .1l2.2 .7M639.2 332.5l-.5 1.9l.1 1.6m-.1-1.6l-.9 1.7M646.6 334.8l2.9-.1l2.3-.5m-2.3 .5l2.6 .4M646.6 334.8l.1 2.2l.6 1.8m-.6-1.8l-.6 2M653.2 323.2l-.2-2.2l-.7-1.7m.7 1.7l.5-2M653.2 323.2l2.9-.1l2.3-.5m-2.3 .5l2.7 .4M661.8 323.3l1.1-2.4l.2-1.9m-.2 1.9l1.6-1.9M661.8 323.3l3.1 .8l2.6 .3m-2.6-.3l2.5 1.3M653.3 328.7l2.9-.2l2.3-.5m-2.3 .5l2.6 .4M653.3 328.7l.1 2.2l.6 1.7m-.6-1.7l-.6 2M662.1 329.9l3.2-.6l2.3-1m-2.3 1l3-.1M662.1 329.9l.8 2.4l1.2 1.8m-1.2-1.8l0 2.3M636.5 302.8l-2.9 .2l-2.3 .6m2.3-.6l-2.7-.3M636.5 302.8l-.2-2.2l-.7-1.7m.7 1.7l.4-2M636.4 296.3l-3.1-.8l-2.6-.1m2.6 .1l-2.5-1.2M636.4 296.3l1.1-2.3l.3-2m-.3 2l1.6-2M643.6 302.7l-.2-2.2l-.7-1.7m.7 1.7l.5-2M643.6 302.7l2.9-.1l2.3-.5m-2.3 .5l2.7 .3M645.1 295.9l-.9-2.3l-1.2-1.8m1.2 1.8l-.1-2.3M645.1 295.9l3.2-.6l2.3-.9m-2.3 .9l3-.1M648.8 293.9l-3.1-.7l-2.7-.2m2.7 .2l-2.6-1.2M648.8 293.9l1-2.3l.3-2m-.3 2l1.7-1.9M652.5 287.2l-2.8-1.8l-2.6-1.1m2.6 1.1l-1.9-2.1M652.5 287.2l2.4-2.1l1.5-1.9m-1.5 1.9l2.8-1.4M656.2 296.2l1.1-2.4l.3-2m-.3 2l1.6-1.9M656.2 296.2l3.1 .8l2.6 .3m-2.6-.3l2.5 1.3M661.7 289.7l.4-2.7l-.3-2.3m.3 2.3l1.2-2.4M661.7 289.7l3.6 .4l3-.2m-3 .2l3.1 1M652.1 309.5l-.2-2.2l-.7-1.7m.7 1.7l.5-2M652.1 309.5l2.9-.1l2.3-.5m-2.3 .5l2.7 .3M660.7 309.5l1.1-2.3l.2-2m-.2 2l1.6-1.9M660.7 309.5l3.1 .9l2.6 .2m-2.6-.2l2.5 1.3M652.2 314.9l2.9-.1l2.3-.5m-2.3 .5l2.6 .4M652.2 314.9l.1 2.2l.6 1.7m-.6-1.7l-.6 2M661 316.2l3.2-.7l2.3-.9m-2.3 .9l3 0M661 316.2l.8 2.4l1.2 1.8m-1.2-1.8l0 2.3M664.7 302.3l-.9-2.4l-1.2-1.7m1.2 1.7l-.1-2.3M664.7 302.3l3.2-.6l2.3-1m-2.3 1l3-.1M674.2 300.9l.4-2.8l-.3-2.2m.3 2.2l1.2-2.4M674.2 300.9l3.6 .3l2.9-.1m-2.9 .1l3.1 1M666.5 308.2l3.1-.6l2.4-.9m-2.4 .9l3 0M666.5 308.2l.8 2.4l1.2 1.8m-1.2-1.8l0 2.3M676.6 308.1l3.2-1.3l2.3-1.4m-2.3 1.4l3.3-.6M676.6 308.1l1.6 2.5l1.8 1.7m-1.8-1.7l.7 2.5M619.3 353.5l-2.2 .5l-1.7 .7m1.7-.7l-2.2 .1M619.3 353.5l-.6-1.7l-.9-1.3m.9 1.3l0-1.6M618 348.4l-2.6-.2l-2.1 .1m2.1-.1l-2.3-.7M618 348.4l.3-1.9l-.2-1.6m.2 1.6l.9-1.7M624.9 352.6l-.6-1.7l-.9-1.3m.9 1.3l-.1-1.6M624.9 352.6l2.2-.5l1.7-.6m-1.7 .6l2.1 0M624.7 347.1l-1.2-1.7l-1.3-1.3m1.3 1.3l-.5-1.8M624.7 347.1l2.3-.8l1.7-1m-1.7 1l2.4-.4M627.1 345.2l-2.5-.3l-2.1 .2m2.1-.2l-2.3-.6M627.1 345.2l.4-2l-.2-1.6m.2 1.6l.9-1.7M628.7 339.5l-2.5-1.1l-2.3-.6m2.3 .6l-2-1.5M628.7 339.5l1.5-1.9l.7-1.7m-.7 1.7l1.9-1.5M633.4 346l.4-1.9l-.2-1.6m.2 1.6l.9-1.7M633.4 346l2.6 .3l2.1-.1m-2.1 .1l2.2 .7M636.4 340.4l-.2-2.2l-.7-1.8m.7 1.8l.4-2M636.4 340.4l2.9-.1l2.3-.5m-2.3 .5l2.6 .3M632.9 356.9l-.6-1.7l-.9-1.3m.9 1.3l-.1-1.6M632.9 356.9l2.2-.4l1.7-.7m-1.7 .7l2.1 0M639.6 356l.3-2l-.1-1.6m.1 1.6l.9-1.7M639.6 356l2.5 .3l2.1-.1m-2.1 .1l2.2 .7M634 361.1l2.2-.4l1.7-.6m-1.7 .6l2.2 0M634 361.1l.5 1.8l.8 1.2m-.8-1.2l0 1.6M641.2 361.1l2.3-.8l1.6-1.1m-1.6 1.1l2.3-.4M641.2 361.1l1.1 1.8l1.3 1.3m-1.3-1.3l.4 1.8M641.3 349.8l-1.2-1.7l-1.3-1.2m1.3 1.2l-.5-1.8M641.3 349.8l2.3-.8l1.7-1m-1.7 1l2.4-.4M648.4 347.6l-.2-2.2l-.7-1.7m.7 1.7l.4-2M648.4 347.6l2.9-.1l2.2-.5m-2.2 .5l2.6 .4M643.8 354.3l2.4-.9l1.6-1m-1.6 1l2.3-.4M643.8 354.3l1.1 1.8l1.3 1.2m-1.3-1.2l.5 1.8M651.7 353l2.3-1.4l1.5-1.4m-1.5 1.4l2.4-.8M651.7 353l1.7 1.8l1.8 1.1m-1.8-1.1l1.1 1.8M643.3 350.3l-2.6-.2l-2.1 .1m2.1-.1l-2.3-.7M643.3 350.3l.3-1.9l-.2-1.6m.2 1.6l.9-1.7M644.8 344.6l-2.5-1.1l-2.3-.5m2.3 .5l-2-1.4M644.8 344.6l1.5-1.9l.7-1.7m-.7 1.7l1.9-1.4M649.5 351.2l.4-1.9l-.2-1.6m.2 1.6l.9-1.7M649.5 351.2l2.6 .3l2.1-.1m-2.1 .1l2.2 .7M652.5 345.5l-.2-2.2l-.7-1.7m.7 1.7l.5-2M652.5 345.5l2.9-.1l2.3-.5m-2.3 .5l2.7 .4M656.2 344.3l-2.5-1.1l-2.3-.5m2.3 .5l-2-1.4M656.2 344.3l1.5-1.9l.7-1.7m-.7 1.7l1.9-1.4M661 338.9l-1.9-1.9l-2-1.3m2 1.3l-1.2-2.1M661 338.9l2.7-1.4l1.7-1.5m-1.7 1.5l2.8-.9M662.1 347.3l1.5-1.9l.8-1.7m-.8 1.7l1.9-1.4M662.1 347.3l2.5 1.2l2.2 .6m-2.2-.6l1.9 1.4M668.5 342.4l1-2.3l.3-2m-.3 2l1.7-1.9M668.5 342.4l3 .9l2.7 .2m-2.7-.2l2.5 1.3M655.3 358.3l.4-1.9l-.2-1.6m.2 1.6l.8-1.7M655.3 358.3l2.6 .3l2.1-.1m-2.1 .1l2.2 .7M662.8 359.6l1.5-1.9l.7-1.7m-.7 1.7l1.8-1.4M662.8 359.6l2.4 1.2l2.3 .6m-2.3-.6l1.9 1.4M654 363.1l2.6 .3l2.1-.1m-2.1 .1l2.2 .7M654 363.1l-.4 1.9l.1 1.6m-.1-1.6l-1 1.7M661.4 365.4l2.9-.1l2.3-.5m-2.3 .5l2.7 .4M661.4 365.4l.1 2.2l.6 1.8m-.6-1.8l-.5 2M668.1 353.8l-.2-2.2l-.7-1.7m.7 1.7l.4-2M668.1 353.8l2.9-.1l2.2-.5m-2.2 .5l2.6 .4M676.6 353.9l1.1-2.3l.3-2m-.3 2l1.6-2M676.6 353.9l3.1 .9l2.6 .2m-2.6-.2l2.5 1.2M668.1 359.3l2.9-.1l2.3-.5m-2.3 .5l2.7 .3M668.1 359.3l.1 2.2l.6 1.7m-.6-1.7l-.5 2M677 360.5l3.1-.6l2.4-.9m-2.4 .9l3 0M677 360.5l.8 2.5l1.2 1.7m-1.2-1.7l0 2.2M634.8 369.7l-.6-1.7l-.9-1.3m.9 1.3l-.1-1.6M634.8 369.7l2.2-.4l1.7-.7m-1.7 .7l2.2-.1M641.5 368.7l.4-1.9l-.2-1.6m.2 1.6l.8-1.7M641.5 368.7l2.6 .4l2.1-.2m-2.1 .2l2.2 .7M635.9 373.9l2.3-.4l1.6-.7m-1.6 .7l2.1 0M635.9 373.9l.5 1.7l.8 1.3m-.8-1.3l0 1.7M643.1 373.9l2.3-.9l1.6-1m-1.6 1l2.4-.4M643.1 373.9l1.1 1.8l1.3 1.2m-1.3-1.2l.4 1.8M645.6 375.8l.4-2l-.2-1.6m.2 1.6l.9-1.7M645.6 375.8l2.6 .3l2.1-.1m-2.1 .1l2.2 .7M653.1 377l1.5-1.8l.7-1.7m-.7 1.7l1.9-1.5M653.1 377l2.5 1.2l2.2 .6m-2.2-.6l1.8 1.5M644.4 380.5l2.5 .3l2.1-.1m-2.1 .1l2.2 .7M644.4 380.5l-.5 2l.1 1.6m-.1-1.6l-.9 1.6M651.8 382.9l2.9-.1l2.3-.5m-2.3 .5l2.6 .4M651.8 382.9l.1 2.2l.6 1.7m-.6-1.7l-.6 2M630.1 379.9l2.2-.4l1.7-.7m-1.7 .7l2.2 0M630.1 379.9l.5 1.7l.8 1.3m-.8-1.3l0 1.7M631.2 385l2.5 .3l2.1-.1m-2.1 .1l2.3 .7M631.2 385l-.5 2l.1 1.6m-.1-1.6l-.9 1.6M624.5 380.7l.5 1.7l.8 1.3m-.8-1.3l0 1.6M624.5 380.7l-2.3 .4l-1.7 .6m1.7-.6l-2.1-.1M624.4 386.1l1.1 1.8l1.3 1.3m-1.3-1.3l.4 1.8M624.4 386.1l-2.4 .8l-1.7 1m1.7-1l-2.4 .4M639.2 386.4l2.4-.8l1.6-1m-1.6 1l2.3-.4M639.2 386.4l1.1 1.8l1.3 1.3m-1.3-1.3l.5 1.8M642 391.9l2.9-.2l2.3-.5m-2.3 .5l2.7 .4M642 391.9l.1 2.2l.6 1.7m-.6-1.7l-.5 2M633.3 388.3l1.1 1.8l1.3 1.2m-1.3-1.2l.5 1.8M633.3 388.3l-2.3 .8l-1.7 1m1.7-1l-2.4 .3M634.9 394.3l1.7 1.7l1.8 1.2m-1.8-1.2l1.1 1.9M634.9 394.3l-2.4 1.3l-1.5 1.3m1.5-1.3l-2.4 .7M655.8 369.1l-1.1-1.8l-1.4-1.2m1.4 1.2l-.6-1.7M655.8 369.1l2.4-.9l1.6-1m-1.6 1l2.3-.3M662.9 366.9l-.2-2.2l-.7-1.7m.7 1.7l.5-2M662.9 366.9l2.9-.1l2.3-.5m-2.3 .5l2.7 .3M658.4 373.5l2.3-.8l1.7-1m-1.7 1l2.4-.4M658.4 373.5l1.1 1.8l1.3 1.3m-1.3-1.3l.5 1.8M666.2 372.3l2.3-1.4l1.5-1.4m-1.5 1.4l2.5-.8M666.2 372.3l1.8 1.7l1.8 1.2m-1.8-1.2l1.1 1.9M669.6 373.9l-.2-2.2l-.7-1.8m.7 1.8l.5-2M669.6 373.9l2.9-.2l2.3-.4m-2.3 .4l2.7 .4M678.2 373.9l1.1-2.3l.2-2m-.2 2l1.6-1.9M678.2 373.9l3.1 .9l2.6 .2m-2.6-.2l2.5 1.2M669.7 379.3l2.9-.1l2.3-.5m-2.3 .5l2.6 .4M669.7 379.3l.1 2.2l.6 1.7m-.6-1.7l-.6 2M678.5 380.6l3.2-.7l2.3-.9m-2.3 .9l3 0M678.5 380.6l.8 2.4l1.2 1.8m-1.2-1.8l0 2.3M653.8 381.2l2.4-.9l1.6-1m-1.6 1l2.3-.4M653.8 381.2l1.1 1.7l1.3 1.3m-1.3-1.3l.5 1.8M656.6 386.6l2.9-.1l2.3-.5m-2.3 .5l2.7 .3M656.6 386.6l.1 2.2l.6 1.7m-.6-1.7l-.5 2M647.9 383l1.1 1.8l1.3 1.3m-1.3-1.3l.5 1.8M647.9 383l-2.3 .8l-1.7 1m1.7-1l-2.4 .3M649.5 389l1.8 1.8l1.8 1.1m-1.8-1.1l1 1.8M649.5 389l-2.4 1.3l-1.5 1.3m1.5-1.3l-2.4 .8M665.9 386.7l2.3-1.4l1.4-1.4m-1.4 1.4l2.4-.8M665.9 386.7l1.7 1.7l1.8 1.2m-1.8-1.2l1.1 1.9M670.6 392.1l3.1-.6l2.4-1m-2.4 1l3-.1M670.6 392.1l.8 2.4l1.2 1.8m-1.2-1.8l0 2.3M660 389.8l1.7 1.7l1.8 1.2m-1.8-1.2l1.1 1.9M660 389.8l-2.4 1.3l-1.5 1.3m1.5-1.3l-2.5 .7M663.5 396l2.5 1.7l2.3 .9m-2.3-.9l1.7 1.8M663.5 396l-2.2 1.9l-1.2 1.7m1.2-1.7l-2.4 1.3M644.2 334.4l-2.3 .9l-1.6 1.1m1.6-1.1l-2.4 .5M644.2 334.4l-1.2-1.8l-1.4-1.2m1.4 1.2l-.6-1.7M641.1 329.1l-2.9 .2l-2.2 .5m2.2-.5l-2.6-.3M641.1 329.1l-.2-2.2l-.7-1.7m.7 1.7l.5-2M650 332.4l-1.2-1.8l-1.4-1.2m1.4 1.2l-.6-1.7M650 332.4l2.3-.9l1.6-1m-1.6 1l2.3-.4M648.1 326.5l-1.8-1.8l-1.9-1.1m1.9 1.1l-1.2-1.8M648.1 326.5l2.3-1.4l1.5-1.4m-1.5 1.4l2.5-.8M650.2 323.9l-2.9 .1l-2.3 .6m2.3-.6l-2.7-.3M650.2 323.9l-.2-2.2l-.7-1.8m.7 1.8l.4-2.1M650.1 317.3l-3.1-.7l-2.6-.2m2.6 .2l-2.5-1.2M650.1 317.3l1.1-2.3l.3-2m-.3 2l1.6-1.9M657.3 323.7l-.2-2.2l-.6-1.7m.6 1.7l.5-2M657.3 323.7l2.9-.1l2.3-.5m-2.3 .5l2.7 .4M658.9 317l-.9-2.4l-1.3-1.8m1.3 1.8l-.2-2.3M658.9 317l3.1-.7l2.3-.9m-2.3 .9l3 0M660.1 335.7l-1.2-1.7l-1.4-1.3m1.4 1.3l-.6-1.8M660.1 335.7l2.3-.8l1.6-1m-1.6 1l2.3-.4M667.1 333.5l-.2-2.2l-.7-1.7m.7 1.7l.5-2M667.1 333.5l2.9-.1l2.3-.5m-2.3 .5l2.7 .4M662.6 340.2l2.3-.9l1.7-1m-1.7 1l2.4-.4M662.6 340.2l1.1 1.8l1.3 1.2m-1.3-1.2l.5 1.7M670.5 338.9l2.2-1.4l1.5-1.4m-1.5 1.4l2.5-.8M670.5 338.9l1.7 1.7l1.8 1.2m-1.8-1.2l1.1 1.9M667.1 326.5l-1.8-1.7l-1.9-1.1m1.9 1.1l-1.1-1.9M667.1 326.5l2.3-1.4l1.5-1.4m-1.5 1.4l2.5-.8M674.2 322.8l-.9-2.4l-1.3-1.7m1.3 1.7l-.1-2.3M674.2 322.8l3.2-.6l2.3-1m-2.3 1l3-.1M671.3 330.9l2.3-1.3l1.5-1.4m-1.5 1.4l2.4-.9M671.3 330.9l1.7 1.8l1.8 1.1m-1.8-1.1l1.1 1.9M679.5 328.1l2.1-1.9l1.2-1.8m-1.2 1.8l2.4-1.3M679.5 328.1l2.5 1.6l2.3 1m-2.3-1l1.7 1.9M669.4 326.7l-2.8 .2l-2.3 .5m2.3-.5l-2.7-.3M669.4 326.7l-.2-2.2l-.6-1.8m.6 1.8l.5-2M669.4 320.2l-3.1-.8l-2.6-.2m2.6 .2l-2.6-1.2M669.4 320.2l1.1-2.4l.2-2m-.2 2l1.6-1.9M676.6 326.5l-.2-2.2l-.7-1.7m.7 1.7l.5-2M676.6 326.5l2.9-.1l2.3-.5m-2.3 .5l2.6 .4M678.1 319.8l-.9-2.4l-1.3-1.8m1.3 1.8l-.1-2.3M678.1 319.8l3.2-.7l2.3-.9m-2.3 .9l3 0M681.8 317.8l-3.1-.8l-2.7-.2m2.7 .2l-2.6-1.2M681.8 317.8l1-2.3l.3-2m-.3 2l1.6-2M685.4 311.1l-2.7-1.9l-2.6-1m2.6 1l-2-2.1M685.4 311.1l2.5-2.1l1.4-2m-1.4 2l2.8-1.5M689.2 320l1.1-2.3l.3-2m-.3 2l1.6-1.9M689.2 320l3.1 .9l2.6 .2m-2.6-.2l2.5 1.2M694.7 313.6l.4-2.8l-.3-2.2m.3 2.2l1.2-2.4M694.7 313.6l3.6 .4l2.9-.2m-2.9 .2l3.1 .9M685.1 333.3l-.2-2.2l-.7-1.7m.7 1.7l.4-2M685.1 333.3l2.9-.1l2.3-.5m-2.3 .5l2.6 .4M693.7 333.4l1-2.4l.3-1.9m-.3 1.9l1.7-1.9M693.7 333.4l3 .8l2.7 .3m-2.7-.3l2.5 1.3M685.2 338.8l2.9-.2l2.2-.5m-2.2 .5l2.6 .4M685.2 338.8l.1 2.2l.6 1.7m-.6-1.7l-.6 2M694 340l3.1-.6l2.4-1m-2.4 1l3.1-.1M694 340l.8 2.4l1.2 1.8m-1.2-1.8l0 2.3M697.7 326.1l-.9-2.3l-1.3-1.8m1.3 1.8l-.1-2.3M697.7 326.1l3.2-.6l2.3-.9m-2.3 .9l3 0M707.1 324.7l.5-2.8l-.3-2.2m.3 2.2l1.2-2.3M707.1 324.7l3.7 .4l2.9-.2m-2.9 .2l3.1 .9M699.4 332.1l3.2-.7l2.3-.9m-2.3 .9l3 0M699.4 332.1l.8 2.4l1.2 1.8m-1.2-1.8l.1 2.3M709.5 331.9l3.3-1.2l2.3-1.5m-2.3 1.5l3.3-.6M709.5 331.9l1.6 2.5l1.9 1.8m-1.9-1.8l.8 2.5M666.1 349.4l-1.2-1.8l-1.3-1.2m1.3 1.2l-.5-1.7M666.1 349.4l2.3-.9l1.7-1m-1.7 1l2.4-.4M673.2 347.2l-.2-2.2l-.7-1.7m.7 1.7l.4-2M673.2 347.2l2.9-.1l2.2-.5m-2.2 .5l2.6 .3M668.6 353.8l2.4-.8l1.6-1m-1.6 1l2.3-.4M668.6 353.8l1.1 1.8l1.3 1.3m-1.3-1.3l.5 1.8M676.5 352.5l2.3-1.3l1.5-1.4m-1.5 1.4l2.4-.9M676.5 352.5l1.7 1.8l1.8 1.2m-1.8-1.2l1.1 1.9M679.9 354.2l-.2-2.2l-.7-1.8m.7 1.8l.4-2.1M679.9 354.2l2.9-.2l2.2-.4m-2.2 .4l2.6 .4M688.4 354.2l1.1-2.3l.3-2m-.3 2l1.6-1.9M688.4 354.2l3.1 .9l2.6 .2m-2.6-.2l2.5 1.2M679.9 359.6l2.9-.1l2.3-.5m-2.3 .5l2.7 .4M679.9 359.6l.1 2.2l.6 1.7m-.6-1.7l-.5 2M688.8 360.9l3.1-.7l2.4-.9m-2.4 .9l3 0M688.8 360.9l.8 2.4l1.2 1.8m-1.2-1.8l0 2.2M664.1 361.4l2.3-.8l1.6-1m-1.6 1l2.3-.4M664.1 361.4l1.1 1.8l1.3 1.3m-1.3-1.3l.4 1.8M666.9 366.9l2.9-.2l2.2-.4m-2.2 .4l2.6 .4M666.9 366.9l.1 2.2l.6 1.7m-.6-1.7l-.6 2M658.2 363.3l1.1 1.8l1.3 1.2m-1.3-1.2l.4 1.8M658.2 363.3l-2.4 .8l-1.7 1m1.7-1l-2.4 .3M659.7 369.3l1.8 1.7l1.8 1.2m-1.8-1.2l1 1.9M659.7 369.3l-2.3 1.3l-1.6 1.3m1.6-1.3l-2.5 .8M676.1 367l2.3-1.4l1.5-1.4m-1.5 1.4l2.4-.8M676.1 367l1.7 1.7l1.9 1.2m-1.9-1.2l1.1 1.9M680.8 372.4l3.2-.6l2.3-1m-2.3 1l3-.1M680.8 372.4l.8 2.4l1.2 1.8m-1.2-1.8l0 2.3M670.2 370.1l1.8 1.7l1.8 1.2m-1.8-1.2l1 1.9M670.2 370.1l-2.3 1.3l-1.6 1.3m1.6-1.3l-2.5 .7M673.8 376.3l2.4 1.7l2.4 .9m-2.4-.9l1.8 1.8M673.8 376.3l-2.2 1.9l-1.3 1.7m1.3-1.7l-2.5 1.3M689 345l-1.8-1.7l-1.9-1.1m1.9 1.1l-1.2-1.8M689 345l2.3-1.3l1.5-1.4m-1.5 1.4l2.4-.9M696.1 341.3l-.9-2.3l-1.3-1.8m1.3 1.8l-.1-2.3M696.1 341.3l3.1-.6l2.4-.9m-2.4 .9l3 0M693.2 349.5l2.2-1.4l1.5-1.4m-1.5 1.4l2.5-.8M693.2 349.5l1.7 1.7l1.8 1.2m-1.8-1.2l1.1 1.9M701.4 346.6l2.1-1.9l1.2-1.7m-1.2 1.7l2.4-1.3M701.4 346.6l2.4 1.7l2.4 .9m-2.4-.9l1.8 1.8M705.6 347.8l-.9-2.4l-1.3-1.7m1.3 1.7l-.1-2.2M705.6 347.8l3.1-.6l2.4-1m-2.4 1l3-.1M715 346.4l.4-2.8l-.3-2.2m.3 2.2l1.2-2.4M715 346.4l3.6 .4l3-.2m-3 .2l3.1 .9M707.3 353.8l3.2-.7l2.3-.9m-2.3 .9l3 0M707.3 353.8l.8 2.4l1.2 1.8m-1.2-1.8l0 2.2M717.4 353.6l3.3-1.3l2.2-1.4m-2.2 1.4l3.2-.6M717.4 353.6l1.6 2.5l1.9 1.7m-1.9-1.7l.7 2.5M690.5 358.6l2.3-1.4l1.5-1.4m-1.5 1.4l2.4-.8M690.5 358.6l1.7 1.8l1.8 1.1m-1.8-1.1l1.1 1.8M695.2 364l3.2-.6l2.3-.9m-2.3 .9l3-.1M695.2 364l.8 2.4l1.2 1.8m-1.2-1.8l0 2.3M684.6 361.7l1.7 1.7l1.8 1.2m-1.8-1.2l1.1 1.9M684.6 361.7l-2.4 1.3l-1.5 1.3m1.5-1.3l-2.4 .7M688.2 368l2.4 1.6l2.3 .9m-2.3-.9l1.7 1.8M688.2 368l-2.2 1.8l-1.3 1.8m1.3-1.8l-2.5 1.3M705.4 362.5l2.1-1.9l1.2-1.8m-1.2 1.8l2.4-1.3M705.4 362.5l2.4 1.7l2.4 .9m-2.4-.9l1.8 1.8M712.2 367.7l3.3-1.3l2.3-1.4m-2.3 1.4l3.3-.6M712.2 367.7l1.6 2.5l1.9 1.7m-1.9-1.7l.7 2.5M699.9 366.9l2.4 1.7l2.4 .9m-2.4-.9l1.8 1.8M699.9 366.9l-2.2 1.9l-1.3 1.7m1.3-1.7l-2.5 1.3M705.7 373.2l3.2 1.4l2.8 .6m-2.8-.6l2.5 1.7M705.7 373.2l-1.8 2.4l-.9 2.2m.9-2.2l-2.4 1.9M578.5 305.5l1.2 1.7l1.4 1.2m-1.4-1.2l.6 1.7M578.5 305.5l-2.3 .9l-1.6 1m1.6-1l-2.4 .4M571.5 307.9l.3 2.2l.8 1.7m-.8-1.7l-.4 2M571.5 307.9l-2.9 .2l-2.3 .5m2.3-.5l-2.7-.3M575.7 301.1l-2.3 .9l-1.6 1.1m1.6-1.1l-2.3 .5M575.7 301.1l-1.2-1.8l-1.3-1.2m1.3 1.2l-.5-1.7M567.9 302.6l-2.2 1.4l-1.4 1.4m1.4-1.4l-2.4 .9M567.9 302.6l-1.8-1.7l-1.9-1.1m1.9 1.1l-1.2-1.9M564.5 301.1l.3 2.2l.7 1.7m-.7-1.7l-.4 2M564.5 301.1l-2.9 .2l-2.3 .5m2.3-.5l-2.7-.3M555.9 301.2l-1 2.4l-.2 2m.2-2l-1.5 2M555.9 301.2l-3.1-.7l-2.6-.2m2.6 .2l-2.6-1.2M564.1 295.6l-2.8 .2l-2.3 .6m2.3-.6l-2.7-.3M564.1 295.6l-.2-2.2l-.6-1.7m.6 1.7l.5-2M555.2 294.6l-3.1 .7l-2.3 1m2.3-1l-3 .2M555.2 294.6l-.9-2.4l-1.2-1.7m1.2 1.7l-.1-2.3M579.9 293.4l-2.3 .9l-1.6 1m1.6-1l-2.3 .4M579.9 293.4l-1.2-1.8l-1.3-1.2m1.3 1.2l-.5-1.8M576.9 288l-2.9 .2l-2.3 .6m2.3-.6l-2.7-.3M576.9 288l-.2-2.2l-.7-1.7m.7 1.7l.4-2M585.7 291.4l-1.2-1.8l-1.3-1.2m1.3 1.2l-.5-1.8M585.7 291.4l2.4-.9l1.6-1m-1.6 1l2.3-.4M583.9 285.4l-1.9-1.7l-1.8-1.1m1.8 1.1l-1.1-1.8M583.9 285.4l2.3-1.3l1.5-1.4m-1.5 1.4l2.4-.9M567.6 288.2l-2.2 1.4l-1.4 1.4m1.4-1.4l-2.4 .9M567.6 288.2l-1.8-1.8l-1.9-1.1m1.9 1.1l-1.1-1.8M562.7 282.8l-3.2 .8l-2.2 1m2.2-1l-3 .1M562.7 282.8l-.9-2.3l-1.3-1.8m1.3 1.8l-.2-2.3M573.4 284.9l-1.8-1.7l-1.9-1.1m1.9 1.1l-1.2-1.8M573.4 284.9l2.3-1.3l1.5-1.4m-1.5 1.4l2.4-.9M569.5 278.7l-2.5-1.5l-2.4-.9m2.4 .9l-1.8-1.8M569.5 278.7l2.1-1.9l1.2-1.7m-1.2 1.7l2.5-1.3M567.8 286.4l.3 2.2l.8 1.7m-.8-1.7l-.3 2M567.8 286.4l-2.9 .2l-2.2 .5m2.2-.5l-2.6-.3M559.3 286.6l-1 2.3l-.2 2m.2-2l-1.5 2M559.3 286.6l-3.1-.8l-2.7-.2m2.7 .2l-2.6-1.2M567.5 281l-2.9 .2l-2.2 .5m2.2-.5l-2.6-.3M567.5 281l-.2-2.2l-.7-1.7m.7 1.7l.5-2M558.6 279.9l-3.1 .8l-2.3 1m2.3-1l-3 .1M558.6 279.9l-.9-2.3l-1.3-1.8m1.3 1.8l-.1-2.3M555.9 277.2l-.9 2.4l-.2 2m.2-2l-1.6 1.9M555.9 277.2l-3.1-.8l-2.6-.1m2.6 .1l-2.5-1.2M547 274.5l-2.4 2.1l-1.3 2.1m1.3-2.1l-2.7 1.6M547 274.5l-2.8-1.8l-2.6-1.1m2.6 1.1l-1.9-2.1M558.7 271.5l-3.1-.8l-2.6-.1m2.6 .1l-2.5-1.2M558.7 271.5l1.1-2.3l.3-2m-.3 2l1.6-2M550.1 267.5l-3.6-.3l-2.9 .3m2.9-.3l-3.2-.9M550.1 267.5l.5-2.8l-.3-2.2m.3 2.2l1.2-2.4M576.3 274.4l-2.9 .2l-2.2 .5m2.2-.5l-2.6-.3M576.3 274.4l-.2-2.2l-.7-1.7m.7 1.7l.5-2M576.3 267.9l-3.1-.8l-2.7-.2m2.7 .2l-2.6-1.2M576.3 267.9l1-2.4l.3-1.9m-.3 1.9l1.6-1.9M583.5 274.3l-.2-2.2l-.7-1.8m.7 1.8l.4-2.1M583.5 274.3l2.9-.2l2.2-.4m-2.2 .4l2.6 .4M585 267.5l-.9-2.4l-1.3-1.7m1.3 1.7l-.1-2.2M585 267.5l3.1-.6l2.4-1m-2.4 1l3-.1M566.6 264.9l-3.1 .8l-2.3 1m2.3-1l-3 .1M566.6 264.9l-.9-2.3l-1.2-1.8m1.2 1.8l-.1-2.3M564.6 257.8l-3.7-.3l-2.9 .3m2.9-.3l-3.1-.8M564.6 257.8l.4-2.7l-.3-2.3m.3 2.3l1.2-2.4M574.4 263.5l-.9-2.4l-1.2-1.7m1.2 1.7l-.1-2.2M574.4 263.5l3.2-.6l2.3-1m-2.3 1l3-.1M574 255.9l-1.7-2.5l-1.9-1.7m1.9 1.7l-.8-2.5M574 255.9l3.3-1.3l2.3-1.4m-2.3 1.4l3.3-.6M597.8 288.6l-2.3 .9l-1.6 1m1.6-1l-2.3 .4M597.8 288.6l-1.2-1.8l-1.3-1.2m1.3 1.2l-.5-1.8M594.8 283.2l-2.9 .2l-2.3 .6m2.3-.6l-2.7-.3M594.8 283.2l-.2-2.2l-.7-1.7m.7 1.7l.4-2M603.6 286.5l-1.2-1.7l-1.3-1.2m1.3 1.2l-.5-1.8M603.6 286.5l2.3-.8l1.7-1m-1.7 1l2.4-.4M601.8 280.6l-1.9-1.7l-1.8-1.1m1.8 1.1l-1.1-1.9M601.8 280.6l2.3-1.4l1.4-1.3m-1.4 1.3l2.4-.8M603.8 278l-2.9 .2l-2.2 .6m2.2-.6l-2.6-.3M603.8 278l-.2-2.2l-.7-1.7m.7 1.7l.5-2M603.8 271.5l-3.1-.8l-2.7-.1m2.7 .1l-2.6-1.2M603.8 271.5l1-2.3l.3-2m-.3 2l1.7-2M611 277.9l-.2-2.2l-.7-1.8m.7 1.8l.4-2M611 277.9l2.9-.1l2.3-.5m-2.3 .5l2.6 .3M612.5 271.1l-.9-2.4l-1.3-1.7m1.3 1.7l-.1-2.2M612.5 271.1l3.2-.6l2.3-1m-2.3 1l3-.1M613.7 289.9l-1.2-1.8l-1.3-1.2m1.3 1.2l-.5-1.7M613.7 289.9l2.3-.9l1.7-1m-1.7 1l2.4-.4M620.8 287.7l-.2-2.2l-.7-1.8m.7 1.8l.4-2M620.8 287.7l2.9-.1l2.3-.5m-2.3 .5l2.6 .3M616.2 294.3l2.4-.8l1.6-1m-1.6 1l2.3-.4M616.2 294.3l1.1 1.8l1.3 1.3m-1.3-1.3l.5 1.8M624.1 293l2.3-1.3l1.5-1.4m-1.5 1.4l2.4-.9M624.1 293l1.8 1.8l1.8 1.1m-1.8-1.1l1 1.9M620.8 280.6l-1.9-1.7l-1.8-1.1m1.8 1.1l-1.1-1.8M620.8 280.6l2.3-1.3l1.5-1.4m-1.5 1.4l2.4-.9M627.9 277l-.9-2.4l-1.3-1.8m1.3 1.8l-.2-2.3M627.9 277l3.1-.7l2.3-.9m-2.3 .9l3 0M624.9 285.1l2.3-1.4l1.5-1.4m-1.5 1.4l2.5-.8M624.9 285.1l1.8 1.7l1.8 1.2m-1.8-1.2l1 1.9M633.1 282.3l2.1-1.9l1.2-1.8m-1.2 1.8l2.5-1.4M633.1 282.3l2.5 1.6l2.3 .9m-2.3-.9l1.7 1.8M591.7 271.2l-2.3 1.4l-1.4 1.5m1.4-1.5l-2.4 1M591.7 271.2l-1.9-1.7l-1.8-1.1m1.8 1.1l-1.1-1.8M586.7 265.9l-3.1 .7l-2.3 1m2.3-1l-3 .2M586.7 265.9l-.9-2.4l-1.3-1.7m1.3 1.7l-.1-2.2M597.4 268l-1.8-1.7l-1.9-1.1m1.9 1.1l-1.2-1.9M597.4 268l2.3-1.4l1.5-1.4m-1.5 1.4l2.4-.8M593.6 261.8l-2.6-1.5l-2.3-.9m2.3 .9l-1.8-1.9M593.6 261.8l2.1-1.9l1.2-1.8m-1.2 1.8l2.4-1.3M595 258.6l-3.1 .7l-2.3 1m2.3-1l-3 .2M595 258.6l-.9-2.4l-1.2-1.7m1.2 1.7l-.1-2.3M593 251.5l-3.7-.3l-2.9 .2m2.9-.2l-3.1-.9M593 251.5l.4-2.8l-.3-2.2m.3 2.2l1.2-2.4M602.8 257.2l-.9-2.4l-1.2-1.8m1.2 1.8l-.1-2.3M602.8 257.2l3.2-.7l2.3-.9m-2.3 .9l3 0M602.4 249.5l-1.7-2.4l-1.9-1.7m1.9 1.7l-.8-2.5M602.4 249.5l3.3-1.2l2.3-1.5m-2.3 1.5l3.3-.6M609.5 269.9l-1.8-1.8l-1.9-1.1m1.9 1.1l-1.2-1.8M609.5 269.9l2.3-1.4l1.5-1.4m-1.5 1.4l2.4-.8M616.6 266.2l-.9-2.4l-1.3-1.8m1.3 1.8l-.1-2.3M616.6 266.2l3.1-.7l2.4-.9m-2.4 .9l3 0M613.6 274.3l2.3-1.4l1.5-1.4m-1.5 1.4l2.5-.8M613.6 274.3l1.8 1.8l1.8 1.1m-1.8-1.1l1.1 1.8M621.9 271.5l2.1-1.9l1.2-1.8m-1.2 1.8l2.4-1.4M621.9 271.5l2.4 1.6l2.3 .9m-2.3-.9l1.8 1.9M614.4 258.5l-2.5-1.6l-2.4-.9m2.4 .9l-1.8-1.8M614.4 258.5l2.1-1.9l1.2-1.8m-1.2 1.8l2.4-1.4M621 253.2l-1.7-2.5l-1.9-1.7m1.9 1.7l-.8-2.4M621 253.2l3.3-1.3l2.3-1.4m-2.3 1.4l3.3-.5M620.3 262.6l2.1-1.9l1.2-1.8m-1.2 1.8l2.4-1.3M620.3 262.6l2.5 1.6l2.3 1m-2.3-1l1.7 1.9M628.5 258.1l1.7-2.5l.7-2.2m-.7 2.2l2.2-1.9M628.5 258.1l3.2 1.3l2.8 .6m-2.8-.6l2.4 1.7M596.5 272.7l.3 2.2l.7 1.7m-.7-1.7l-.4 2.1M596.5 272.7l-2.9 .2l-2.3 .6m2.3-.6l-2.7-.3M587.9 272.9l-1 2.4l-.2 2m.2-2l-1.5 1.9M587.9 272.9l-3.1-.8l-2.6-.1m2.6 .1l-2.6-1.2M596.2 267.3l-2.9 .2l-2.3 .6m2.3-.6l-2.7-.3M596.2 267.3l-.2-2.2l-.7-1.7m.7 1.7l.4-2M587.3 266.3l-3.2 .7l-2.3 1m2.3-1l-3 .1M587.3 266.3l-.9-2.4l-1.3-1.8m1.3 1.8l-.2-2.3M584.6 263.6l-1 2.3l-.2 2m.2-2l-1.5 2M584.6 263.6l-3.1-.8l-2.7-.2m2.7 .2l-2.6-1.2M575.6 260.9l-2.3 2.1l-1.4 2m1.4-2l-2.7 1.5M575.6 260.9l-2.7-1.9l-2.6-1m2.6 1l-2-2M587.4 257.9l-3.1-.8l-2.7-.2m2.7 .2l-2.6-1.2M587.4 257.9l1-2.4l.3-2m-.3 2l1.7-1.9M578.8 253.8l-3.6-.3l-3 .3m3-.3l-3.2-.8M578.8 253.8l.4-2.7l-.3-2.3m.3 2.3l1.2-2.4M605 260.7l-2.9 .2l-2.3 .6m2.3-.6l-2.7-.3M605 260.7l-.3-2.2l-.6-1.7m.6 1.7l.5-2M604.9 254.2l-3.1-.7l-2.6-.2m2.6 .2l-2.6-1.2M604.9 254.2l1.1-2.3l.2-2m-.2 2l1.6-1.9M612.1 260.6l-.2-2.2l-.7-1.7m.7 1.7l.5-2M612.1 260.6l2.9-.1l2.3-.5m-2.3 .5l2.6 .4M613.6 253.9l-.9-2.4l-1.3-1.8m1.3 1.8l-.1-2.3M613.6 253.9l3.2-.7l2.3-.9m-2.3 .9l3 0M595.3 251.3l-3.1 .7l-2.3 1m2.3-1l-3 .1M595.3 251.3l-.9-2.4l-1.3-1.7m1.3 1.7l-.1-2.3M593.2 244.2l-3.6-.3l-3 .2m3-.2l-3.2-.9M593.2 244.2l.5-2.8l-.3-2.2m.3 2.2l1.2-2.4M603.1 249.9l-.9-2.4l-1.3-1.8m1.3 1.8l-.1-2.3M603.1 249.9l3.1-.7l2.4-.9m-2.4 .9l3 0M602.7 242.2l-1.7-2.4l-2-1.7m2 1.7l-.9-2.5M602.7 242.2l3.2-1.2l2.3-1.5m-2.3 1.5l3.3-.6M596.5 249.5l-1 2.4l-.1 2m.1-2l-1.5 2M596.5 249.5l-3.1-.7l-2.6-.2m2.6 .2l-2.6-1.2M587.6 246.8l-2.4 2.2l-1.3 2m1.3-2l-2.7 1.5M587.6 246.8l-2.8-1.8l-2.6-1m2.6 1l-1.9-2.1M599.3 243.8l-3.1-.7l-2.6-.2m2.6 .2l-2.6-1.2M599.3 243.8l1.1-2.3l.2-2m-.2 2l1.6-1.9M590.7 239.8l-3.6-.3l-3 .3m3-.3l-3.2-.9M590.7 239.8l.5-2.8l-.3-2.2m.3 2.2l1.2-2.3M589.5 236.1l-2.3 2.1l-1.4 2m1.4-2l-2.7 1.5M589.5 236.1l-2.7-1.8l-2.7-1.1m2.7 1.1l-2-2.1M581.8 230.4l-3.6 1.4l-2.6 1.6m2.6-1.6l-3.7 .6M581.8 230.4l-1.7-2.8l-2.1-2m2.1 2l-.9-2.8M595.7 231.1l-2.8-1.8l-2.6-1m2.6 1l-1.9-2.1M595.7 231.1l2.4-2l1.5-2m-1.5 2l2.8-1.5M589.2 224.1l-3.6-1.5l-3.2-.7m3.2 .7l-2.8-1.9M589.2 224.1l2-2.7l1-2.4m-1 2.4l2.6-2M612.2 240l-3.1-.8l-2.7-.2m2.7 .2l-2.6-1.2M612.2 240l1-2.4l.3-2m-.3 2l1.7-1.9M615.9 233.2l-2.8-1.8l-2.6-1m2.6 1l-1.9-2.1M615.9 233.2l2.4-2l1.4-2m-1.4 2l2.8-1.5M619.6 242.2l1.1-2.3l.3-2m-.3 2l1.6-1.9M619.6 242.2l3.1 .9l2.6 .2m-2.6-.2l2.5 1.2M625.1 235.8l.4-2.8l-.3-2.2m.3 2.2l1.2-2.4M625.1 235.8l3.6 .4l2.9-.2m-2.9 .2l3.1 .9M607.6 227l-3.6-.3l-2.9 .3m2.9-.3l-3.2-.8M607.6 227l.5-2.7l-.3-2.3m.3 2.3l1.2-2.4M609.6 219l-3.6-1.5l-3.1-.7m3.1 .7l-2.7-2M609.6 219l2.1-2.7l1-2.4m-1 2.4l2.6-2.1M616.5 228.1l.5-2.7l-.4-2.3m.4 2.3l1.1-2.4M616.5 228.1l3.6 .4l3-.2m-3 .2l3.2 1M620.5 220.1l-.3-3.1l-1.1-2.4m1.1 2.4l.5-2.8M620.5 220.1l4.1-.2l3.2-.7m-3.2 .7l3.7 .5M626.2 261.7l-2.9 .2l-2.3 .6m2.3-.6l-2.7-.3M626.2 261.7l-.2-2.2l-.7-1.7m.7 1.7l.4-2M626.1 255.2l-3.1-.7l-2.6-.2m2.6 .2l-2.5-1.2M626.1 255.2l1.1-2.3l.3-2m-.3 2l1.6-1.9M633.3 261.6l-.2-2.2l-.7-1.7m.7 1.7l.5-2M633.3 261.6l2.9-.1l2.3-.5m-2.3 .5l2.7 .4M634.8 254.9l-.9-2.4l-1.2-1.8m1.2 1.8l-.1-2.3M634.8 254.9l3.2-.7l2.3-.9m-2.3 .9l3 0M638.5 252.9l-3.1-.8l-2.7-.2m2.7 .2l-2.6-1.2M638.5 252.9l1-2.4l.3-2m-.3 2l1.7-1.9M642.2 246.1l-2.8-1.8l-2.6-1.1m2.6 1.1l-1.9-2.1M642.2 246.1l2.4-2l1.5-2m-1.5 2l2.8-1.5M645.9 255.1l1.1-2.4l.3-1.9m-.3 1.9l1.6-1.9M645.9 255.1l3.1 .8l2.6 .3m-2.6-.3l2.5 1.3M651.4 248.6l.4-2.7l-.3-2.3m.3 2.3l1.2-2.4M651.4 248.6l3.6 .4l3-.2m-3 .2l3.1 1M641.8 268.4l-.2-2.2l-.7-1.7m.7 1.7l.5-2M641.8 268.4l2.9-.1l2.3-.5m-2.3 .5l2.7 .4M650.4 268.5l1.1-2.4l.2-2m-.2 2l1.6-1.9M650.4 268.5l3.1 .8l2.6 .3m-2.6-.3l2.5 1.3M641.9 273.8l2.9-.1l2.3-.5m-2.3 .5l2.6 .4M641.9 273.8l.1 2.2l.6 1.8m-.6-1.8l-.6 2M650.7 275.1l3.2-.6l2.3-1m-2.3 1l3-.1M650.7 275.1l.8 2.4l1.2 1.8m-1.2-1.8l0 2.3M654.4 261.2l-.9-2.4l-1.2-1.7m1.2 1.7l-.1-2.3M654.4 261.2l3.2-.6l2.3-1m-2.3 1l3-.1M663.9 259.8l.4-2.8l-.3-2.2m.3 2.2l1.2-2.4M663.9 259.8l3.6 .4l2.9-.2m-2.9 .2l3.1 .9M656.2 267.2l3.1-.7l2.4-.9m-2.4 .9l3 0M656.2 267.2l.8 2.4l1.2 1.7m-1.2-1.7l0 2.2M666.3 267l3.2-1.3l2.3-1.4m-2.3 1.4l3.3-.6M666.3 267l1.6 2.5l1.8 1.7m-1.8-1.7l.7 2.5M629.8 241.8l-3.1 .7l-2.3 1m2.3-1l-3 .2M629.8 241.8l-.9-2.4l-1.2-1.7m1.2 1.7l-.1-2.2M627.8 234.7l-3.7-.3l-2.9 .3m2.9-.3l-3.1-.9M627.8 234.7l.4-2.8l-.3-2.2m.3 2.2l1.2-2.4M637.6 240.4l-.9-2.4l-1.3-1.7m1.3 1.7l-.1-2.3M637.6 240.4l3.2-.6l2.3-1m-2.3 1l3-.1M637.2 232.7l-1.7-2.4l-1.9-1.7m1.9 1.7l-.8-2.5M637.2 232.7l3.3-1.2l2.3-1.5m-2.3 1.5l3.3-.6M640.6 229.9l-3.6-.3l-3 .3m3-.3l-3.2-.8M640.6 229.9l.4-2.7l-.3-2.3m.3 2.3l1.2-2.4M642.6 221.9l-3.6-1.5l-3.2-.7m3.2 .7l-2.8-2M642.6 221.9l2-2.7l1-2.4m-1 2.4l2.6-2.1M649.5 231l.4-2.7l-.3-2.3m.3 2.3l1.2-2.4M649.5 231l3.6 .4l2.9-.2m-2.9 .2l3.1 1M653.5 223l-.4-3.1l-1-2.4m1 2.4l.6-2.8M653.5 223l4-.2l3.2-.8m-3.2 .8l3.8 .5M649 246.3l-.9-2.3l-1.3-1.8m1.3 1.8l-.1-2.3M649 246.3l3.2-.6l2.3-.9m-2.3 .9l3-.1M658.4 244.9l.5-2.8l-.3-2.2m.3 2.2l1.2-2.4M658.4 244.9l3.7 .4l2.9-.2m-2.9 .2l3.1 .9M650.8 252.3l3.1-.7l2.3-.9m-2.3 .9l3 0M650.8 252.3l.7 2.4l1.2 1.8m-1.2-1.8l.1 2.3M660.8 252.1l3.3-1.2l2.3-1.5m-2.3 1.5l3.3-.6M660.8 252.1l1.6 2.5l1.9 1.8m-1.9-1.8l.8 2.5M660.6 236.2l-1.7-2.4l-1.9-1.7m1.9 1.7l-.8-2.5M660.6 236.2l3.3-1.2l2.3-1.5m-2.3 1.5l3.3-.6M670.5 233l-.3-3.1l-1-2.4m1 2.4l.6-2.8M670.5 233l4.1-.2l3.2-.8m-3.2 .8l3.7 .5M664.4 242.4l3.2-1.2l2.3-1.5m-2.3 1.5l3.3-.6M664.4 242.4l1.6 2.5l1.8 1.8m-1.8-1.8l.7 2.5M675.4 240.5l3.2-2l2-2m-2 2l3.4-1.2M675.4 240.5l2.5 2.4l2.6 1.6m-2.6-1.6l1.6 2.6M626.6 300.4l-2.3 .9l-1.6 1.1m1.6-1.1l-2.4 .5M626.6 300.4l-1.2-1.7l-1.4-1.3m1.4 1.3l-.6-1.8M623.5 295.1l-2.9 .2l-2.2 .5m2.2-.5l-2.6-.3M623.5 295.1l-.2-2.2l-.7-1.7m.7 1.7l.5-2M632.4 298.4l-1.2-1.8l-1.4-1.2m1.4 1.2l-.6-1.7M632.4 298.4l2.3-.9l1.6-1m-1.6 1l2.3-.3M630.5 292.5l-1.8-1.8l-1.9-1.1m1.9 1.1l-1.2-1.8M630.5 292.5l2.3-1.4l1.5-1.4m-1.5 1.4l2.5-.8M632.6 289.9l-2.9 .2l-2.3 .5m2.3-.5l-2.7-.4M632.6 289.9l-.2-2.2l-.7-1.8m.7 1.8l.4-2M632.5 283.4l-3.1-.8l-2.6-.2m2.6 .2l-2.5-1.2M632.5 283.4l1.1-2.4l.3-2m-.3 2l1.6-1.9M639.7 289.7l-.2-2.2l-.7-1.7m.7 1.7l.5-2M639.7 289.7l2.9-.1l2.3-.5m-2.3 .5l2.7 .4M641.3 283l-.9-2.4l-1.3-1.8m1.3 1.8l-.2-2.3M641.3 283l3.1-.7l2.3-.9m-2.3 .9l3 0M642.5 301.7l-1.2-1.7l-1.4-1.2m1.4 1.2l-.6-1.8M642.5 301.7l2.3-.8l1.6-1m-1.6 1l2.3-.4M649.5 299.5l-.2-2.2l-.7-1.7m.7 1.7l.5-2M649.5 299.5l2.9-.1l2.3-.5m-2.3 .5l2.7 .4M645 306.2l2.3-.9l1.7-1m-1.7 1l2.4-.4M645 306.2l1.1 1.8l1.3 1.2m-1.3-1.2l.5 1.8M652.8 304.9l2.3-1.4l1.5-1.4m-1.5 1.4l2.5-.8M652.8 304.9l1.8 1.7l1.8 1.2m-1.8-1.2l1.1 1.9M649.5 292.5l-1.8-1.7l-1.9-1.1m1.9 1.1l-1.2-1.9M649.5 292.5l2.3-1.4l1.5-1.3m-1.5 1.3l2.5-.8M656.6 288.8l-.9-2.4l-1.3-1.7m1.3 1.7l-.1-2.2M656.6 288.8l3.2-.6l2.3-1m-2.3 1l3-.1M653.7 296.9l2.3-1.3l1.5-1.4m-1.5 1.4l2.4-.9M653.7 296.9l1.7 1.8l1.8 1.1m-1.8-1.1l1.1 1.9M661.9 294.1l2.1-1.9l1.2-1.8m-1.2 1.8l2.4-1.3M661.9 294.1l2.4 1.6l2.4 1m-2.4-1l1.8 1.9M651.8 292.7l-2.9 .2l-2.2 .5m2.2-.5l-2.6-.3M651.8 292.7l-.2-2.2l-.6-1.7m.6 1.7l.5-2M651.8 286.2l-3.1-.8l-2.7-.2m2.7 .2l-2.6-1.2M651.8 286.2l1-2.4l.3-2m-.3 2l1.7-1.9M659 292.5l-.2-2.2l-.7-1.7m.7 1.7l.4-2M659 292.5l2.9-.1l2.3-.5m-2.3 .5l2.6 .4M660.5 285.8l-.9-2.4l-1.3-1.7m1.3 1.7l-.1-2.3M660.5 285.8l3.2-.6l2.3-1m-2.3 1l3-.1M664.1 283.8l-3.1-.8l-2.6-.1m2.6 .1l-2.5-1.2M664.1 283.8l1.1-2.3l.3-2m-.3 2l1.6-2M667.8 277.1l-2.7-1.9l-2.6-1m2.6 1l-2-2.1M667.8 277.1l2.5-2.1l1.4-2m-1.4 2l2.8-1.4M671.6 286l1.1-2.3l.2-2m-.2 2l1.6-1.9M671.6 286l3.1 .9l2.6 .2m-2.6-.2l2.5 1.2M677.1 279.6l.4-2.8l-.3-2.2m.3 2.2l1.2-2.4M677.1 279.6l3.6 .4l2.9-.2m-2.9 .2l3.1 .9M667.5 299.3l-.2-2.2l-.7-1.7m.7 1.7l.4-2M667.5 299.3l2.9-.1l2.3-.5m-2.3 .5l2.6 .4M676.1 299.4l1-2.3l.3-2m-.3 2l1.6-2M676.1 299.4l3 .8l2.6 .3m-2.6-.3l2.5 1.3M667.5 304.8l3-.2l2.2-.4m-2.2 .4l2.6 .4M667.5 304.8l.1 2.2l.7 1.7m-.7-1.7l-.5 2M676.4 306l3.1-.6l2.4-.9m-2.4 .9l3-.1M676.4 306l.8 2.4l1.2 1.8m-1.2-1.8l0 2.3M680.1 292.2l-.9-2.4l-1.3-1.8m1.3 1.8l-.1-2.3M680.1 292.2l3.2-.7l2.3-.9m-2.3 .9l3 0M689.5 290.7l.5-2.7l-.3-2.3m.3 2.3l1.2-2.4M689.5 290.7l3.6 .4l3-.2m-3 .2l3.2 .9M681.8 298.1l3.2-.6l2.3-1m-2.3 1l3-.1M681.8 298.1l.8 2.4l1.2 1.8m-1.2-1.8l0 2.3M691.9 297.9l3.3-1.2l2.3-1.5m-2.3 1.5l3.3-.6M691.9 297.9l1.6 2.5l1.9 1.8m-1.9-1.8l.7 2.5M648.5 315.4l-1.2-1.8l-1.4-1.2m1.4 1.2l-.6-1.7M648.5 315.4l2.3-.9l1.6-1m-1.6 1l2.3-.3M655.6 313.2l-.3-2.2l-.6-1.7m.6 1.7l.5-2M655.6 313.2l2.9-.1l2.2-.5m-2.2 .5l2.6 .4M651 319.8l2.4-.8l1.6-1m-1.6 1l2.3-.4M651 319.8l1.1 1.8l1.3 1.3m-1.3-1.3l.5 1.8M658.9 318.6l2.3-1.4l1.5-1.4m-1.5 1.4l2.4-.8M658.9 318.6l1.7 1.7l1.8 1.2m-1.8-1.2l1.1 1.9M662.3 320.2l-.2-2.2l-.7-1.8m.7 1.8l.4-2M662.3 320.2l2.9-.1l2.2-.5m-2.2 .5l2.6 .3M670.8 320.2l1.1-2.3l.3-2m-.3 2l1.6-1.9M670.8 320.2l3.1 .9l2.6 .2m-2.6-.2l2.5 1.2M662.3 325.6l2.9-.1l2.3-.5m-2.3 .5l2.7 .4M662.3 325.6l.1 2.2l.6 1.7m-.6-1.7l-.5 2M671.2 326.9l3.1-.7l2.4-.9m-2.4 .9l3 0M671.2 326.9l.8 2.4l1.1 1.8m-1.1-1.8l0 2.3M646.5 327.5l2.3-.9l1.6-1m-1.6 1l2.3-.4M646.5 327.5l1.1 1.7l1.2 1.3m-1.2-1.3l.4 1.8M649.2 332.9l3-.1l2.2-.5m-2.2 .5l2.6 .3M649.2 332.9l.1 2.2l.7 1.7m-.7-1.7l-.5 2M640.6 329.3l1.1 1.8l1.2 1.3m-1.2-1.3l.4 1.8M640.6 329.3l-2.4 .8l-1.7 1m1.7-1l-2.4 .3M642.1 335.3l1.8 1.8l1.8 1.1m-1.8-1.1l1 1.8M642.1 335.3l-2.3 1.3l-1.6 1.3m1.6-1.3l-2.5 .8M658.5 333l2.3-1.4l1.5-1.4m-1.5 1.4l2.4-.8M658.5 333l1.7 1.8l1.8 1.1m-1.8-1.1l1.1 1.8M663.2 338.4l3.2-.6l2.3-1m-2.3 1l3-.1M663.2 338.4l.8 2.4l1.2 1.8m-1.2-1.8l0 2.3M652.6 336.1l1.7 1.7l1.9 1.2m-1.9-1.2l1.1 1.9M652.6 336.1l-2.4 1.3l-1.5 1.3m1.5-1.3l-2.4 .7M656.2 342.3l2.4 1.7l2.3 .9m-2.3-.9l1.8 1.8M656.2 342.3l-2.2 1.9l-1.3 1.7m1.3-1.7l-2.5 1.3M671.4 311l-1.8-1.7l-1.9-1.1m1.9 1.1l-1.2-1.8M671.4 311l2.3-1.3l1.5-1.4m-1.5 1.4l2.4-.9M678.5 307.4l-.9-2.4l-1.3-1.8m1.3 1.8l-.1-2.3M678.5 307.4l3.1-.7l2.4-.9m-2.4 .9l3 0M675.6 315.5l2.2-1.4l1.5-1.4m-1.5 1.4l2.5-.8M675.6 315.5l1.7 1.7l1.8 1.2m-1.8-1.2l1.1 1.9M683.8 312.7l2.1-1.9l1.2-1.8m-1.2 1.8l2.4-1.4M683.8 312.7l2.4 1.6l2.4 .9m-2.4-.9l1.8 1.8M688 313.8l-.9-2.4l-1.3-1.7m1.3 1.7l-.2-2.2M688 313.8l3.1-.6l2.4-1m-2.4 1l3-.1M697.4 312.4l.4-2.8l-.3-2.2m.3 2.2l1.2-2.4M697.4 312.4l3.6 .4l3-.2m-3 .2l3.1 .9M689.7 319.8l3.1-.7l2.4-.9m-2.4 .9l3.1 0M689.7 319.8l.8 2.4l1.2 1.8m-1.2-1.8l0 2.3M699.8 319.6l3.2-1.3l2.3-1.4m-2.3 1.4l3.3-.6M699.8 319.6l1.6 2.5l1.9 1.7m-1.9-1.7l.7 2.5M672.9 324.6l2.3-1.4l1.5-1.3m-1.5 1.3l2.4-.8M672.9 324.6l1.7 1.8l1.8 1.1m-1.8-1.1l1.1 1.8M677.6 330l3.2-.6l2.3-.9m-2.3 .9l3 0M677.6 330l.8 2.4l1.2 1.8m-1.2-1.8l0 2.3M667 327.7l1.7 1.7l1.8 1.2m-1.8-1.2l1.1 1.9M667 327.7l-2.4 1.3l-1.5 1.3m1.5-1.3l-2.5 .8M670.5 334l2.5 1.6l2.3 .9m-2.3-.9l1.7 1.9M670.5 334l-2.1 1.8l-1.3 1.8m1.3-1.8l-2.5 1.3M687.8 328.5l2.1-1.9l1.2-1.7m-1.2 1.7l2.4-1.3M687.8 328.5l2.4 1.7l2.4 .9m-2.4-.9l1.8 1.8M694.6 333.7l3.3-1.3l2.2-1.4m-2.2 1.4l3.3-.6M694.6 333.7l1.6 2.5l1.9 1.7m-1.9-1.7l.7 2.5M682.3 333l2.4 1.6l2.3 .9m-2.3-.9l1.8 1.8M682.3 333l-2.2 1.8l-1.3 1.8m1.3-1.8l-2.5 1.3M688.1 339.2l3.2 1.4l2.8 .6m-2.8-.6l2.5 1.7M688.1 339.2l-1.8 2.4l-.9 2.2m.9-2.2l-2.4 1.9M647.9 275.1l-2.2 1.4l-1.4 1.4m1.4-1.4l-2.4 .9M647.9 275.1l-1.8-1.7l-1.8-1.1m1.8 1.1l-1.1-1.9M643 269.8l-3.1 .7l-2.3 1m2.3-1l-3 .1M643 269.8l-.9-2.4l-1.3-1.8m1.3 1.8l-.1-2.3M653.7 271.8l-1.8-1.7l-1.9-1.1m1.9 1.1l-1.2-1.8M653.7 271.8l2.3-1.3l1.5-1.4m-1.5 1.4l2.4-.9M649.8 265.7l-2.5-1.6l-2.4-.9m2.4 .9l-1.8-1.8M649.8 265.7l2.1-1.9l1.2-1.8m-1.2 1.8l2.5-1.4M651.3 262.4l-3.1 .8l-2.3 1m2.3-1l-3 .1M651.3 262.4l-.9-2.3l-1.3-1.8m1.3 1.8l-.1-2.3M649.2 255.3l-3.6-.3l-2.9 .3m2.9-.3l-3.2-.8M649.2 255.3l.5-2.7l-.3-2.3m.3 2.3l1.2-2.4M659.1 261l-.9-2.4l-1.3-1.7m1.3 1.7l-.1-2.2M659.1 261l3.2-.6l2.3-1m-2.3 1l3-.1M658.7 253.4l-1.7-2.5l-1.9-1.7m1.9 1.7l-.8-2.5M658.7 253.4l3.3-1.3l2.2-1.4m-2.2 1.4l3.2-.6M665.8 273.7l-1.9-1.7l-1.8-1.1m1.8 1.1l-1.1-1.8M665.8 273.7l2.3-1.3l1.5-1.4m-1.5 1.4l2.4-.9M672.9 270l-.9-2.4l-1.3-1.7m1.3 1.7l-.2-2.2M672.9 270l3.1-.6l2.3-1m-2.3 1l3-.1M669.9 278.1l2.3-1.3l1.5-1.4m-1.5 1.4l2.5-.9M669.9 278.1l1.8 1.8l1.8 1.2m-1.8-1.2l1 1.9M678.1 275.3l2.1-1.9l1.2-1.8m-1.2 1.8l2.5-1.3M678.1 275.3l2.5 1.6l2.3 1m-2.3-1l1.7 1.9M670.7 262.3l-2.5-1.5l-2.4-.9m2.4 .9l-1.9-1.8M670.7 262.3l2.1-1.9l1.2-1.8m-1.2 1.8l2.4-1.3M677.3 257l-1.7-2.4l-1.9-1.7m1.9 1.7l-.8-2.5M677.3 257l3.3-1.2l2.3-1.5m-2.3 1.5l3.3-.6M676.6 266.4l2.1-1.8l1.2-1.8m-1.2 1.8l2.4-1.4M676.6 266.4l2.5 1.7l2.3 .9m-2.3-.9l1.7 1.8M684.7 261.9l1.8-2.4l.7-2.2m-.7 2.2l2.2-1.9M684.7 261.9l3.2 1.4l2.9 .6m-2.9-.6l2.5 1.7M673.3 262.1l-3.1 .7l-2.3 1m2.3-1l-3 .2M673.3 262.1l-.9-2.4l-1.3-1.7m1.3 1.7l-.1-2.2M671.2 255l-3.6-.3l-2.9 .3m2.9-.3l-3.2-.9M671.2 255l.5-2.8l-.3-2.2m.3 2.2l1.2-2.4M681.1 260.7l-.9-2.4l-1.3-1.7m1.3 1.7l-.1-2.3M681.1 260.7l3.1-.6l2.4-1m-2.4 1l3-.1M680.7 253l-1.7-2.4l-2-1.7m2 1.7l-.9-2.5M680.7 253l3.2-1.2l2.3-1.5m-2.3 1.5l3.3-.6M684.1 250.2l-3.7-.3l-2.9 .3m2.9-.3l-3.2-.8M684.1 250.2l.4-2.7l-.3-2.3m.3 2.3l1.2-2.4M686 242.2l-3.5-1.5l-3.2-.7m3.2 .7l-2.8-2M686 242.2l2.1-2.7l1-2.4m-1 2.4l2.6-2.1M692.9 251.3l.5-2.7l-.3-2.3m.3 2.3l1.2-2.4M692.9 251.3l3.6 .4l3-.2m-3 .2l3.2 1M696.9 243.3l-.3-3.1l-1.1-2.4m1.1 2.4l.5-2.8M696.9 243.3l4.1-.2l3.2-.7m-3.2 .7l3.7 .5M692.5 266.6l-.9-2.3l-1.3-1.8m1.3 1.8l-.1-2.3M692.5 266.6l3.1-.6l2.4-.9m-2.4 .9l3-.1M701.9 265.2l.4-2.8l-.3-2.2m.3 2.2l1.2-2.4M701.9 265.2l3.6 .4l3-.2m-3 .2l3.1 .9M694.2 272.6l3.2-.7l2.3-.9m-2.3 .9l3 0M694.2 272.6l.8 2.4l1.2 1.8m-1.2-1.8l0 2.3M704.3 272.4l3.3-1.2l2.2-1.5m-2.2 1.5l3.2-.6M704.3 272.4l1.6 2.5l1.9 1.8m-1.9-1.8l.7 2.5M704.1 256.5l-1.7-2.4l-1.9-1.7m1.9 1.7l-.8-2.5M704.1 256.5l3.3-1.2l2.2-1.5m-2.2 1.5l3.2-.6M714 253.3l-.4-3.1l-1-2.4m1 2.4l.6-2.8M714 253.3l4.1-.2l3.2-.8m-3.2 .8l3.7 .5M707.8 262.7l3.3-1.2l2.3-1.5m-2.3 1.5l3.3-.6M707.8 262.7l1.6 2.5l1.9 1.8m-1.9-1.8l.8 2.5M718.8 260.8l3.2-2l2.1-2m-2.1 2l3.4-1.2M718.8 260.8l2.6 2.4l2.5 1.6m-2.5-1.6l1.5 2.6M676.6 287.6l-1.9-1.7l-1.8-1.1m1.8 1.1l-1.1-1.8M676.6 287.6l2.3-1.3l1.5-1.4m-1.5 1.4l2.4-.9M683.6 283.9l-.9-2.3l-1.2-1.8m1.2 1.8l-.1-2.3M683.6 283.9l3.2-.6l2.3-.9m-2.3 .9l3 0M680.7 292l2.3-1.3l1.5-1.4m-1.5 1.4l2.5-.9M680.7 292l1.8 1.8l1.8 1.2m-1.8-1.2l1 1.9M688.9 289.2l2.1-1.9l1.2-1.7m-1.2 1.7l2.5-1.3M688.9 289.2l2.5 1.7l2.3 .9m-2.3-.9l1.7 1.8M693.1 290.4l-.9-2.4l-1.2-1.7m1.2 1.7l-.1-2.3M693.1 290.4l3.2-.6l2.3-1m-2.3 1l3-.1M702.6 289l.4-2.8l-.3-2.2m.3 2.2l1.2-2.4M702.6 289l3.6 .3l2.9-.1m-2.9 .1l3.1 1M694.9 296.4l3.1-.7l2.4-.9m-2.4 .9l3 0M694.9 296.4l.8 2.4l1.2 1.7m-1.2-1.7l0 2.2M705 296.2l3.2-1.3l2.3-1.4m-2.3 1.4l3.3-.6M705 296.2l1.6 2.5l1.8 1.7m-1.8-1.7l.7 2.5M678.1 301.2l2.2-1.4l1.5-1.4m-1.5 1.4l2.5-.8M678.1 301.2l1.7 1.8l1.8 1.1m-1.8-1.1l1.1 1.8M682.8 306.6l3.1-.6l2.4-.9m-2.4 .9l3-.1M682.8 306.6l.8 2.4l1.2 1.8m-1.2-1.8l0 2.3M672.2 304.3l1.7 1.7l1.8 1.2m-1.8-1.2l1.1 1.9M672.2 304.3l-2.4 1.3l-1.5 1.3m1.5-1.3l-2.5 .7M675.7 310.6l2.5 1.6l2.3 .9m-2.3-.9l1.7 1.8M675.7 310.6l-2.2 1.8l-1.3 1.7m1.3-1.7l-2.4 1.3M692.9 305.1l2.1-1.9l1.2-1.8m-1.2 1.8l2.5-1.3M692.9 305.1l2.5 1.7l2.3 .9m-2.3-.9l1.7 1.8M699.8 310.3l3.2-1.3l2.3-1.4m-2.3 1.4l3.3-.6M699.8 310.3l1.6 2.4l1.9 1.8m-1.9-1.8l.7 2.5M687.4 309.5l2.5 1.7l2.3 .9m-2.3-.9l1.7 1.8M687.4 309.5l-2.2 1.9l-1.2 1.7m1.2-1.7l-2.4 1.3M693.3 315.8l3.1 1.3l2.9 .7m-2.9-.7l2.5 1.8M693.3 315.8l-1.9 2.4l-.8 2.2m.8-2.2l-2.3 1.9M700.4 278.8l-2.6-1.6l-2.3-.9m2.3 .9l-1.8-1.8M700.4 278.8l2.1-1.9l1.2-1.8m-1.2 1.8l2.4-1.4M707 273.5l-1.7-2.5l-2-1.7m2 1.7l-.9-2.4M707 273.5l3.2-1.3l2.3-1.4m-2.3 1.4l3.3-.5M706.3 282.9l2.1-1.9l1.2-1.8m-1.2 1.8l2.4-1.3M706.3 282.9l2.4 1.6l2.4 1m-2.4-1l1.8 1.9M714.4 278.4l1.7-2.5l.8-2.2m-.8 2.2l2.3-1.9M714.4 278.4l3.2 1.3l2.8 .6m-2.8-.6l2.5 1.7M719.4 278.9l-1.7-2.4l-2-1.7m2 1.7l-.9-2.5M719.4 278.9l3.2-1.3l2.3-1.4m-2.3 1.4l3.3-.5M729.3 275.7l-.4-3.1l-1-2.4m1 2.4l.6-2.9M729.3 275.7l4-.3l3.2-.7m-3.2 .7l3.8 .5M723.1 285.1l3.3-1.2l2.2-1.5m-2.2 1.5l3.2-.6M723.1 285.1l1.6 2.5l1.9 1.8m-1.9-1.8l.7 2.5M734.1 283.1l3.2-1.9l2-2m-2 2l3.4-1.2M734.1 283.1l2.5 2.5l2.6 1.6m-2.6-1.6l1.6 2.6M706.1 293.4l2.1-1.9l1.2-1.8m-1.2 1.8l2.5-1.4M706.1 293.4l2.5 1.6l2.3 1m-2.3-1l1.7 1.9M713 298.5l3.2-1.2l2.3-1.5m-2.3 1.5l3.3-.6M713 298.5l1.6 2.5l1.9 1.8m-1.9-1.8l.7 2.5M700.6 297.8l2.5 1.6l2.3 1m-2.3-1l1.7 1.9M700.6 297.8l-2.2 1.9l-1.2 1.7m1.2-1.7l-2.4 1.2M706.5 304.1l3.2 1.3l2.8 .6m-2.8-.6l2.4 1.8M706.5 304.1l-1.9 2.4l-.8 2.1m.8-2.1l-2.3 1.8M723.7 295.1l1.7-2.5l.8-2.1m-.8 2.1l2.2-1.9M723.7 295.1l3.2 1.3l2.8 .6m-2.8-.6l2.5 1.8M732.8 299.5l3.1-2l2.1-2m-2.1 2l3.5-1.2M732.8 299.5l2.5 2.4l2.6 1.6m-2.6-1.6l1.5 2.6M719 300.9l3.2 1.3l2.8 .7m-2.8-.7l2.5 1.8M719 300.9l-1.8 2.4l-.9 2.1m.9-2.1l-2.4 1.8M727.3 306.7l3.9 .9l3.3 .2m-3.3-.2l3.3 1.5M727.3 306.7l-1.3 3l-.3 2.5m.3-2.5l-2 2.4"/>
<path stroke="#000" stroke-width="7.03" d="M572.1 434.25L572.1 388.05L561.11 351.51L572.1 388.05L585.41 346.63L572.1 388.05"/>
<path stroke="#000" stroke-width="4.08" d="M572.1 388.05L545.88 370.12L520.88 359.54L545.88 370.12L527.54 349.69L545.88 370.12M572.1 388.05L596.16 368.45L610.53 349.65L596.16 368.45L623.38 354.88L596.16 368.45"/>
<path stroke="#000" stroke-width="4.57" d="M561.11 351.51L544.4 324.29L524.71 305.06L544.4 324.29L537.26 297.12L544.4 324.29M585.41 346.63L605.77 320.89L615.76 297.74L605.77 320.89L631.44 301.2L605.77 320.89"/>
<path stroke="#000" stroke-width="2.37" d="M545.88 370.12L525.53 371.74L509.82 375.82L525.53 371.74L506.82 369.82L525.53 371.74M545.88 370.12L544.1 354.64L539 342.64L544.1 354.64L546.96 340.46L544.1 354.64M596.16 368.45L594.38 352.97L589.29 340.97L594.38 352.97L597.24 338.79L594.38 352.97M596.16 368.45L616.58 367.37L632.46 363.71L616.58 367.37L635.19 369.79L616.58 367.37"/>
<path stroke="#000" stroke-width="2.65" d="M520.88 359.54L498.95 354.44L480.39 353.43L498.95 354.44L480.75 346.23L498.95 354.44M527.54 349.69L520.83 333.03L511.57 320.78L520.83 333.03L519.62 316.99L520.83 333.03M544.4 324.29L522.47 319.2L503.91 318.18L522.47 319.2L504.28 310.99L522.47 319.2M544.4 324.29L551.49 307.73L553.15 293.65L551.49 307.73L562.61 294.06L551.49 307.73M610.53 349.65L617.62 333.09L619.28 319.01L617.62 333.09L628.74 319.41L617.62 333.09M623.38 354.88L645.42 350.08L661.72 343.26L645.42 350.08L666.57 349.44L645.42 350.08M605.77 320.89L599.07 304.23L589.8 291.98L599.07 304.23L597.85 288.19L599.07 304.23M605.77 320.89L627.82 316.09L644.11 309.27L627.82 316.09L648.96 315.45L627.82 316.09"/>
<path stroke="#000" stroke-width="2.97" d="M524.71 305.06L505.02 292.51L486.47 285.29L505.02 292.51L490.99 277.99L505.02 292.51M537.26 297.12L539.95 277.7L537.45 261.98L539.95 277.7L547.95 260.75L539.95 277.7M615.76 297.74L618.44 278.32L615.95 262.6L618.44 278.32L626.44 261.37L618.44 278.32M631.44 301.2L654.14 292.03L669.9 281.67L654.14 292.03L677.12 287.59L654.14 292.03"/>
<path stroke="#000" stroke-width="1.37" d="M525.53 371.74L518.55 379.04L514.77 385.76L518.55 379.04L510.2 384.42L518.55 379.04M525.53 371.74L516.05 366.32L507.26 363.33L516.05 366.32L509.12 359.88L516.05 366.32M544.1 354.64L534.62 349.21L525.83 346.22L534.62 349.21L527.68 342.77L534.62 349.21M544.1 354.64L551.4 347.53L555.49 340.91L551.4 347.53L560 342.38L551.4 347.53M594.38 352.97L584.9 347.55L576.11 344.56L584.9 347.55L577.96 341.11L584.9 347.55M594.38 352.97L601.69 345.87L605.78 339.25L601.69 345.87L610.28 340.71L601.69 345.87M616.58 367.37L623.88 360.27L627.97 353.64L623.88 360.27L632.48 355.11L623.88 360.27M616.58 367.37L625.8 373.04L634.44 376.26L625.8 373.04L632.43 379.66L625.8 373.04"/>
<path stroke="#000" stroke-width="1.54" d="M509.82 375.82L498.42 381.02L490.64 386.7L498.42 381.02L486.7 383.79L498.42 381.02M506.82 369.82L494.76 365.55L484.21 363.83L494.76 365.55L485.18 359.72L494.76 365.55M498.95 354.44L487.55 359.65L479.77 365.33L487.55 359.65L475.83 362.42L487.55 359.65M498.95 354.44L492.3 345.7L484.96 339.69L492.3 345.7L488.86 336.75L492.3 345.7M539 342.64L532.35 333.89L525.01 327.88L532.35 333.89L528.91 324.94L532.35 333.89M546.96 340.46L552.79 331.38L555.24 323.4L552.79 331.38L560.63 324.21L552.79 331.38M520.83 333.03L508.78 328.76L498.23 327.04L508.78 328.76L499.2 322.93L508.78 328.76M520.83 333.03L526.67 323.95L529.12 315.97L526.67 323.95L534.51 316.78L526.67 323.95M522.47 319.2L511.07 324.4L503.29 330.08L511.07 324.4L499.35 327.17L511.07 324.4M522.47 319.2L515.82 310.45L508.48 304.45L515.82 310.45L512.38 301.5L515.82 310.45M551.49 307.73L544.84 298.98L537.5 292.97L544.84 298.98L541.39 290.03L544.84 298.98M551.49 307.73L563.12 302.83L571.16 297.36L563.12 302.83L574.96 300.37L563.12 302.83M589.29 340.97L582.63 332.22L575.29 326.21L582.63 332.22L579.19 323.27L582.63 332.22M597.24 338.79L603.07 329.71L605.52 321.73L603.07 329.71L610.91 322.54L603.07 329.71M617.62 333.09L610.97 324.34L603.63 318.33L610.97 324.34L607.53 315.39L610.97 324.34M617.62 333.09L629.25 328.19L637.29 322.72L629.25 328.19L641.09 325.73L629.25 328.19M632.46 363.71L644.1 358.81L652.13 353.34L644.1 358.81L655.94 356.35L644.1 358.81M635.19 369.79L647.04 374.37L657.5 376.38L647.04 374.37L656.34 380.46L647.04 374.37M645.42 350.08L651.25 341L653.71 333.02L651.25 341L659.1 333.83L651.25 341M645.42 350.08L657.27 354.67L667.74 356.67L657.27 354.67L666.58 360.75L657.27 354.67M599.07 304.23L587.01 299.96L576.46 298.24L587.01 299.96L577.43 294.13L587.01 299.96M599.07 304.23L604.9 295.15L607.35 287.17L604.9 295.15L612.74 287.98L604.9 295.15M627.82 316.09L633.65 307.01L636.1 299.03L633.65 307.01L641.49 299.84L633.65 307.01M627.82 316.09L639.67 320.68L650.13 322.68L639.67 320.68L648.97 326.76L639.67 320.68"/>
<path stroke="#000" stroke-width="1.72" d="M480.39 353.43L465.63 355L454.33 358.27L465.63 355L451.94 353.96L465.63 355M480.75 346.23L470.78 337.82L460.89 332.54L470.78 337.82L464.26 328.62L470.78 337.82M511.57 320.78L501.6 312.37L491.71 307.08L501.6 312.37L495.08 303.17L501.6 312.37M519.62 316.99L523.23 306L523.47 296.82L523.23 306L529.62 296.75L523.23 306M503.91 318.18L489.15 319.76L477.85 323.03L489.15 319.76L475.46 318.72L489.15 319.76M504.28 310.99L494.3 302.58L484.41 297.29L494.3 302.58L487.78 293.38L494.3 302.58M505.02 292.51L490.26 294.09L478.96 297.36L490.26 294.09L476.57 293.05L490.26 294.09M505.02 292.51L503.21 281.28L499.1 272.64L503.21 281.28L504.81 270.9L503.21 281.28M553.15 293.65L551.34 282.42L547.23 273.78L551.34 282.42L552.94 272.04L551.34 282.42M562.61 294.06L573.86 286.63L580.99 279.21L573.86 286.63L586.09 281.84L573.86 286.63M539.95 277.7L529.97 269.29L520.08 264.01L529.97 269.29L523.45 260.09L529.97 269.29M539.95 277.7L551.2 270.28L558.33 262.86L551.2 270.28L563.42 265.49L551.2 270.28M619.28 319.01L617.47 307.78L613.36 299.14L617.47 307.78L619.07 297.4L617.47 307.78M628.74 319.41L639.99 311.99L647.12 304.57L639.99 311.99L652.22 307.2L639.99 311.99M661.72 343.26L672.97 335.83L680.1 328.41L672.97 335.83L685.19 331.04L672.97 335.83M666.57 349.44L680.97 352.37L693.05 352.71L680.97 352.37L693.03 357.39L680.97 352.37M589.8 291.98L579.83 283.57L569.94 278.28L579.83 283.57L573.31 274.37L579.83 283.57M597.85 288.19L601.46 277.2L601.7 268.02L601.46 277.2L607.86 267.95L601.46 277.2M618.44 278.32L608.47 269.91L598.58 264.63L608.47 269.91L601.95 260.71L608.47 269.91M618.44 278.32L629.69 270.9L636.82 263.48L629.69 270.9L641.92 266.11L629.69 270.9M644.11 309.27L655.36 301.84L662.49 294.42L655.36 301.84L667.58 297.05L655.36 301.84M648.96 315.45L663.36 318.38L675.45 318.72L663.36 318.38L675.43 323.4L663.36 318.38M654.14 292.03L657.74 281.05L657.98 271.86L657.74 281.05L664.14 271.8L657.74 281.05M654.14 292.03L668.53 294.96L680.62 295.31L668.53 294.96L680.6 299.98L668.53 294.96"/>
<path stroke="#000" stroke-width="1.93" d="M486.47 285.29L470.33 282.01L456.79 281.62L470.33 282.01L456.81 276.38L470.33 282.01M490.99 277.99L485.55 266L478.39 257.26L485.55 266L484.13 254.34L485.55 266M537.45 261.98L532.01 249.99L524.86 241.24L532.01 249.99L530.59 238.33L532.01 249.99M547.95 260.75L558 250.61L563.54 241.22L558 250.61L569.93 243.2L558 250.61M615.95 262.6L610.51 250.61L603.36 241.86L610.51 250.61L609.09 238.95L610.51 250.61M626.44 261.37L636.5 251.23L642.04 241.84L636.5 251.23L648.43 243.82L636.5 251.23M669.9 281.67L679.96 271.54L685.5 262.15L679.96 271.54L691.89 264.13L679.96 271.54M677.12 287.59L693.8 288.25L707.15 286.49L693.8 288.25L708.57 291.62L693.8 288.25"/>
</svg>

<!-- combo -->
<div style="left:550.5px;top:20px;width:232px;height:13.5px;border:1px solid #5e6162;background:#414547;"></div>
<div style="left:770.3px;top:20.5px;width:1px;height:12.5px;background:#5e6162;"></div>

<!-- status -->
<div style="left:714.4px;top:443.7px;width:83.1px;height:13.3px;background:#4e5254;"></div>
<div style="left:714.4px;top:443.7px;width:7.5px;height:13.3px;background:#4a88c7;"></div>

<svg style="left:6px;top:5.5px" width="7.5" height="7.2" viewBox="0 0 7.5 7.2"><rect width="7.5" height="7.2" rx="0.8" fill="#3fae49"/><rect x="2.4" y="0.4" width="2.2" height="6.4" fill="#2f6fd0"/><rect x="0.3" y="0.3" width="2" height="2.2" fill="#c94f3d"/><rect x="5" y="2.8" width="2" height="2.4" fill="#2f8fd0"/></svg>
<svg style="left:6px;top:23px" width="6.5" height="7.6" viewBox="0 0 6.5 7.6"><path d="M2 0H6.5V7.6H0V2Z" fill="#d2d2d2"/><path d="M0 2H2V0Z" fill="#8f8f8f"/></svg>
<svg style="left:20px;top:23.2px" width="9.6" height="6.6" viewBox="0 0 9.6 6.6"><path d="M0.2 6.4V0.6Q0.2 0.2 0.6 0.2H3L3.8 1.1H7.4V2.2H2.2L0.2 6.4Z" fill="#bdbdbd"/><path d="M2.5 2.8H9.5L7.4 6.5H0.5Z" fill="#e0e0e0"/></svg>
<svg style="left:35.6px;top:23.2px" width="7.6" height="7.2" viewBox="0 0 7.6 7.2"><path d="M0 0H7.6V7.2H0Z" fill="#c4c4c4"/><rect x="1.3" y="0.9" width="5" height="2.3" fill="#3c3f41"/><rect x="1.6" y="4.6" width="4.4" height="2.6" fill="#3c3f41"/><rect x="2.3" y="5.1" width="1.2" height="1.6" fill="#c4c4c4"/></svg>
<svg style="left:51px;top:22.8px" width="7.6" height="7.8" viewBox="0 0 7.6 7.8"><path d="M0.4 0.4H5.6L7.2 2V7.4H0.4Z" fill="none" stroke="#c4c4c4" stroke-width="0.9"/><rect x="1.6" y="0.6" width="3.4" height="1.7" fill="#c4c4c4"/><rect x="1.8" y="3.8" width="4" height="3" fill="none" stroke="#c4c4c4" stroke-width="0.8"/><rect x="3.2" y="4.8" width="1.3" height="1.2" fill="#c4c4c4"/></svg>
<div style="left:64.4px;top:20.7px;width:1px;height:11.4px;background:#56595b;"></div>
<svg style="left:69.2px;top:24.3px" width="8.4" height="4.4" viewBox="0 0 8.4 4.4"><path d="M0 0L0.4 3.6L3.6 2.6L2.4 1.9Q5.6 0.9 8.2 4.2Q7.2 -0.4 1.5 1.1Z" fill="#d0d0d0"/></svg>
<svg style="left:84.8px;top:24.3px" width="8.4" height="4.4" viewBox="0 0 8.4 4.4"><g transform="translate(8.4,0) scale(-1,1)"><path d="M0 0L0.4 3.6L3.6 2.6L2.4 1.9Q5.6 0.9 8.2 4.2Q7.2 -0.4 1.5 1.1Z" fill="#d0d0d0"/></g></svg>
<div style="left:98.1px;top:20.7px;width:1px;height:11.4px;background:#56595b;"></div>
<svg style="left:105.3px;top:23.5px" width="6.4" height="6.6" viewBox="0 0 6.4 6.6"><path d="M0 0L6.2 3.3L0 6.6Z" fill="#43ad50"/></svg>
<svg style="left:5.1px;top:40.2px" width="8.6" height="8.6" viewBox="0 0 8 7.8"><path d="M4.6 0.9H1.6Q0.5 0.9 0.5 2V6.2Q0.5 7.3 1.6 7.3H5.6Q6.7 7.3 6.7 6.2V3.6" fill="none" stroke="#c4c4c4" stroke-width="0.9"/><path d="M2.6 5.3L2.9 3.9L6.4 0.4L7.5 1.5L4 5Z" fill="#c4c4c4"/></svg>
<div style="left:362px;top:44.5px;width:6px;height:1.4px;background:#7e8183;"></div>
<svg style="left:375px;top:41.9px" width="5.6" height="5.6" viewBox="0 0 6 6"><path d="M0.4 5.6L4.6 1.4" stroke="#3fa34d" stroke-width="1.3" fill="none"/><path d="M1.6 0.3H5.7V4.4Z" fill="#3fa34d"/></svg>
<div style="left:387.6px;top:41.7px;width:6.3px;height:6.3px;border:0.85px solid #acaeb0;"></div>
<div style="left:362px;top:299.9px;width:6px;height:1.4px;background:#7e8183;"></div>
<svg style="left:375px;top:297.3px" width="5.6" height="5.6" viewBox="0 0 6 6"><path d="M0.4 5.6L4.6 1.4" stroke="#3fa34d" stroke-width="1.3" fill="none"/><path d="M1.6 0.3H5.7V4.4Z" fill="#3fa34d"/></svg>
<div style="left:387.6px;top:297.1px;width:6.3px;height:6.3px;border:0.85px solid #acaeb0;"></div>
<div style="left:759px;top:44.5px;width:6px;height:1.4px;background:#7e8183;"></div>
<svg style="left:772px;top:41.9px" width="5.6" height="5.6" viewBox="0 0 6 6"><path d="M0.4 5.6L4.6 1.4" stroke="#3fa34d" stroke-width="1.3" fill="none"/><path d="M1.6 0.3H5.7V4.4Z" fill="#3fa34d"/></svg>
<div style="left:784.6px;top:41.7px;width:6.3px;height:6.3px;border:0.85px solid #acaeb0;"></div>
<div style="left:759px;top:148.7px;width:6px;height:1.4px;background:#7e8183;"></div>
<svg style="left:772px;top:146.1px" width="5.6" height="5.6" viewBox="0 0 6 6"><path d="M0.4 5.6L4.6 1.4" stroke="#3fa34d" stroke-width="1.3" fill="none"/><path d="M1.6 0.3H5.7V4.4Z" fill="#3fa34d"/></svg>
<div style="left:784.6px;top:145.9px;width:6.3px;height:6.3px;border:0.85px solid #acaeb0;"></div>
<svg style="left:4.5px;top:297px" width="9" height="8.4" viewBox="0 0 9 8.4"><rect x="0.45" y="0.45" width="8.1" height="7.5" rx="0.9" fill="none" stroke="#c4c4c4" stroke-width="0.9"/><path d="M2.2 2.4L3.9 4.1L2.2 5.8" fill="none" stroke="#c4c4c4" stroke-width="0.8"/><path d="M4.6 6H6.8" stroke="#c4c4c4" stroke-width="0.8"/></svg>
<svg style="left:404.2px;top:40.7px" width="7" height="8.4" viewBox="0 0 7 8.4"><path d="M0.45 0.45H4.4L6.5 2.5V7.9H0.45Z" fill="none" stroke="#c8d2e6" stroke-width="0.9"/><path d="M2 4.2H5M2 5.9H4" stroke="#c8d2e6" stroke-width="0.8"/></svg>
<svg style="left:484px;top:126.8px" width="7" height="8.4" viewBox="0 0 7 8.4"><path d="M0.45 0.45H4.4L6.5 2.5V7.9H0.45Z" fill="none" stroke="#c4c4c4" stroke-width="0.9"/><path d="M2 4.2H5M2 5.9H4" stroke="#c4c4c4" stroke-width="0.8"/></svg>
<svg style="left:404.1px;top:127.4px" width="9.4" height="7.4" viewBox="0 0 9.4 7.4"><rect x="0.45" y="0.45" width="8.5" height="6.5" rx="1.2" fill="none" stroke="#c4c4c4" stroke-width="0.9"/><path d="M2.3 2.2Q1.7 3.7 2.3 5.2M3.7 2.6L5.7 4.8M5.7 2.6L3.7 4.8M7.1 2.2Q7.7 3.7 7.1 5.2" fill="none" stroke="#c4c4c4" stroke-width="0.6"/></svg>
<svg style="left:731px;top:41px" width="8.4" height="7.4" viewBox="0 0 8.4 7.4"><path d="M0 1.6H2.6L3.4 2.6H8.2V7.4H0Z" fill="#d4d4d4"/><path d="M5.4 0V3.4M3.9 2.2L5.4 3.9L6.9 2.2" stroke="#3d8be0" stroke-width="1.2" fill="none"/></svg>
<svg style="left:744px;top:41.2px" width="7.8" height="7.4" viewBox="0 0 7.8 7.4"><path d="M6.6 2.6A3 3 0 0 0 1 2.9M1 4.6A3 3 0 0 0 6.7 4.6" fill="none" stroke="#d4d4d4" stroke-width="1.1"/><path d="M7.6 0.6V3.2H5Z M0.1 7V4.3H2.8Z" fill="#d4d4d4"/></svg>
<div style="left:754.3px;top:40px;width:1px;height:10px;background:#34373a;"></div>
<svg style="left:404.8px;top:66.2px" width="8.6" height="9.2" viewBox="0 0 8.6 9.2"><path d="M5.4 0.5Q2 -0.2 1.8 1.4Q1.8 2.4 4.2 2.6Q6 2.9 5.2 4.2" fill="none" stroke="#35a853" stroke-width="1.15"/><path d="M0.2 3.8H6.7V7Q6.7 9.1 3.4 9.1Q0.2 9.1 0.2 7Z" fill="#a0d020"/><path d="M6.7 4.6Q8.5 4.6 8.4 6Q8.3 7.3 6.5 7.3" fill="none" stroke="#a0d020" stroke-width="0.9"/><path d="M1 4.7Q3.4 5.5 5.9 4.7" stroke="#5c9a12" stroke-width="0.55" fill="none"/></svg>
<svg style="left:404.8px;top:77.8px" width="8.6" height="9.2" viewBox="0 0 8.6 9.2"><path d="M5.4 0.5Q2 -0.2 1.8 1.4Q1.8 2.4 4.2 2.6Q6 2.9 5.2 4.2" fill="none" stroke="#35a853" stroke-width="1.15"/><path d="M0.2 3.8H6.7V7Q6.7 9.1 3.4 9.1Q0.2 9.1 0.2 7Z" fill="#a0d020"/><path d="M6.7 4.6Q8.5 4.6 8.4 6Q8.3 7.3 6.5 7.3" fill="none" stroke="#a0d020" stroke-width="0.9"/><path d="M1 4.7Q3.4 5.5 5.9 4.7" stroke="#5c9a12" stroke-width="0.55" fill="none"/></svg>
<svg style="left:404.8px;top:89.5px" width="8.6" height="9.2" viewBox="0 0 8.6 9.2"><path d="M5.4 0.5Q2 -0.2 1.8 1.4Q1.8 2.4 4.2 2.6Q6 2.9 5.2 4.2" fill="none" stroke="#35a853" stroke-width="1.15"/><path d="M0.2 3.8H6.7V7Q6.7 9.1 3.4 9.1Q0.2 9.1 0.2 7Z" fill="#a0d020"/><path d="M6.7 4.6Q8.5 4.6 8.4 6Q8.3 7.3 6.5 7.3" fill="none" stroke="#a0d020" stroke-width="0.9"/><path d="M1 4.7Q3.4 5.5 5.9 4.7" stroke="#5c9a12" stroke-width="0.55" fill="none"/></svg>
<svg style="left:404.8px;top:101.2px" width="8.6" height="9.2" viewBox="0 0 8.6 9.2"><path d="M5.4 0.5Q2 -0.2 1.8 1.4Q1.8 2.4 4.2 2.6Q6 2.9 5.2 4.2" fill="none" stroke="#35a853" stroke-width="1.15"/><path d="M0.2 3.8H6.7V7Q6.7 9.1 3.4 9.1Q0.2 9.1 0.2 7Z" fill="#a0d020"/><path d="M6.7 4.6Q8.5 4.6 8.4 6Q8.3 7.3 6.5 7.3" fill="none" stroke="#a0d020" stroke-width="0.9"/><path d="M1 4.7Q3.4 5.5 5.9 4.7" stroke="#5c9a12" stroke-width="0.55" fill="none"/></svg>
<svg style="left:404.8px;top:112.9px" width="8.6" height="9.2" viewBox="0 0 8.6 9.2"><path d="M5.4 0.5Q2 -0.2 1.8 1.4Q1.8 2.4 4.2 2.6Q6 2.9 5.2 4.2" fill="none" stroke="#35a853" stroke-width="1.15"/><path d="M0.2 3.8H6.7V7Q6.7 9.1 3.4 9.1Q0.2 9.1 0.2 7Z" fill="#a0d020"/><path d="M6.7 4.6Q8.5 4.6 8.4 6Q8.3 7.3 6.5 7.3" fill="none" stroke="#a0d020" stroke-width="0.9"/><path d="M1 4.7Q3.4 5.5 5.9 4.7" stroke="#5c9a12" stroke-width="0.55" fill="none"/></svg>
<svg style="left:403px;top:144.4px" width="9.4" height="8.6" viewBox="0 0 9.4 8.6"><path d="M0.7 4.6Q4.7 -3 8.7 4.6" fill="none" stroke="#4a86dc" stroke-width="1.1"/><rect x="0.9" y="4.4" width="1.7" height="3.7" fill="#f0c81e"/><rect x="2.9" y="3.2" width="1.7" height="4.9" fill="#e04a3a"/><rect x="4.9" y="3.8" width="1.7" height="4.3" fill="#f0a81e"/><rect x="6.9" y="4.4" width="1.7" height="3.7" fill="#e04a3a"/><rect x="0.3" y="8" width="8.9" height="0.6" fill="#d0d0d0"/></svg>
<svg style="left:664px;top:145px" width="7.6" height="7.6" viewBox="0 0 7.6 7.6"><path d="M0 0L6.2 2.4L4 3.4L7.2 6.6L6.4 7.4L3.3 4.2L2.3 6.4Z" fill="#dcdcdc"/></svg>
<div style="left:673.8px;top:144px;width:1px;height:11px;background:#515456;"></div>
<svg style="left:677.3px;top:144.5px" width="10" height="10" viewBox="0 0 10 10"><circle cx="3.9" cy="3.9" r="3.3" fill="none" stroke="#d4d4d4" stroke-width="0.9"/><path d="M6.3 6.3L9.4 9.2" stroke="#d4d4d4" stroke-width="1.2"/><path d="M2.2 3.9H5.6" stroke="#d4d4d4" stroke-width="0.9"/><path d="M3.9 2.2V5.6" stroke="#d4d4d4" stroke-width="0.9"/></svg>
<svg style="left:689.9px;top:144.5px" width="10" height="10" viewBox="0 0 10 10"><circle cx="3.9" cy="3.9" r="3.3" fill="none" stroke="#d4d4d4" stroke-width="0.9"/><path d="M6.3 6.3L9.4 9.2" stroke="#d4d4d4" stroke-width="1.2"/><path d="M2.2 3.9H5.6" stroke="#d4d4d4" stroke-width="0.9"/></svg>
<svg style="left:703.5px;top:144.4px" width="8.8" height="9.2" viewBox="0 0 8.8 9.2"><path d="M2.4 9.2Q1.2 7.4 0.2 5.6Q-0.2 4.6 0.8 4.6Q1.5 4.7 2 5.6V1.4Q2.4 0.8 3 1.4V0.6Q3.6 -0.1 4.2 0.6V0.8Q4.8 0.2 5.4 0.9V1.6Q6.1 1 6.6 1.8V4Q6.6 5 7 4Q7.8 3 8.6 3.6Q8 6.6 6.8 9.2Z" fill="#e6e6e6"/></svg>
<svg style="left:715.8px;top:144.6px" width="9" height="9" viewBox="0 0 9 9"><path d="M2 2.2A3.6 3.6 0 1 1 1 5" fill="none" stroke="#d4d4d4" stroke-width="0.9"/><path d="M0.6 1.2L3 0.6L3 3.2Z" fill="#d4d4d4"/><circle cx="4.5" cy="4.6" r="1.1" fill="none" stroke="#d4d4d4" stroke-width="0.7"/></svg>
<svg style="left:728.4px;top:144.2px" width="9.8" height="9.8" viewBox="0 0 9.8 9.8"><circle cx="4.9" cy="4.9" r="4.7" fill="#2f7fd8"/><path d="M2 1.6Q3.6 0.6 4.8 1.4Q5.4 2.6 4 3.4Q3.4 4.6 2.2 4.2Q1 3.4 2 1.6Z M5 5.2Q6.6 4.6 7.4 5.8Q7 7.6 5.8 8.6Q4.8 7.4 5 5.2Z M6.6 1.4Q8.2 2 8.6 3.6Q7.4 3.6 6.6 2.6Z" fill="#56c04a"/></svg>
<div style="left:740.2px;top:144px;width:1px;height:11px;background:#515456;"></div>
<svg style="left:743px;top:144.4px" width="9.4" height="9.4" viewBox="0 0 9.4 9.4"><circle cx="4.7" cy="4.7" r="4.1" fill="none" stroke="#d4d4d4" stroke-width="0.9"/><path d="M4.7 4V7" stroke="#d4d4d4" stroke-width="1.1"/><circle cx="4.7" cy="2.6" r="0.65" fill="#d4d4d4"/></svg>
<div style="left:754.3px;top:144px;width:1px;height:11px;background:#34373a;"></div>
<svg style="left:773.4px;top:25px" width="6.4" height="4" viewBox="0 0 6.4 4"><path d="M0.4 0.4L3.2 3.2L6 0.4" fill="none" stroke="#a8abad" stroke-width="0.9"/></svg>
<svg style="left:786px;top:23.4px" width="9.6" height="6.6" viewBox="0 0 9.6 6.6"><path d="M0.2 6.4V0.6Q0.2 0.2 0.6 0.2H3L3.8 1.1H7.4V2.2H2.2L0.2 6.4Z" fill="#bdbdbd"/><path d="M2.5 2.8H9.5L7.4 6.5H0.5Z" fill="#e0e0e0"/></svg>
<div style="left:732.6px;top:8.5px;width:6.4px;height:1.1px;background:#777a7c;"></div>
<div style="left:758px;top:6px;width:6.2px;height:6.2px;border:0.9px solid #8e9193;"></div>
<svg style="left:783.4px;top:5.8px" width="7" height="7" viewBox="0 0 7 7"><path d="M0.3 0.3L6.7 6.7M6.7 0.3L0.3 6.7" stroke="#959899" stroke-width="0.85"/></svg>
<svg style="left:112px;top:59.2px" width="4" height="4" viewBox="0 0 4 4"><path d="M0.3 0.3L3.7 3.7M3.7 0.3L0.3 3.7" stroke="#9a9d9f" stroke-width="0.8"/></svg>
<svg style="left:183px;top:59.2px" width="4" height="4" viewBox="0 0 4 4"><path d="M0.3 0.3L3.7 3.7M3.7 0.3L0.3 3.7" stroke="#9a9d9f" stroke-width="0.8"/></svg>
<svg style="left:278.8px;top:59.2px" width="4" height="4" viewBox="0 0 4 4"><path d="M0.3 0.3L3.7 3.7M3.7 0.3L0.3 3.7" stroke="#9a9d9f" stroke-width="0.8"/></svg>
<svg style="left:333px;top:59.2px" width="4" height="4" viewBox="0 0 4 4"><path d="M0.3 0.3L3.7 3.7M3.7 0.3L0.3 3.7" stroke="#9a9d9f" stroke-width="0.8"/></svg>
<svg style="left:442px;top:163.4px" width="4" height="4" viewBox="0 0 4 4"><path d="M0.3 0.3L3.7 3.7M3.7 0.3L0.3 3.7" stroke="#9a9d9f" stroke-width="0.8"/></svg>

<span class="t" id="L0" style="left:23.75px;top:4.80px;font-size:8.2px;color:#c4c4c4;transform:scaleX(0.8142);">File</span>
<span class="t" id="L1" style="left:44.50px;top:4.80px;font-size:8.2px;color:#c4c4c4;transform:scaleX(0.8859);">Edit</span>
<span class="t" id="L2" style="left:66.00px;top:4.80px;font-size:8.2px;color:#c4c4c4;transform:scaleX(0.9568);">Options</span>
<span class="t" id="L3" style="left:102.50px;top:4.80px;font-size:8.2px;color:#c4c4c4;transform:scaleX(0.9105);">Apps</span>
<span class="t" id="L4" style="left:129.00px;top:4.80px;font-size:8.2px;color:#c4c4c4;transform:scaleX(0.9202);">Help</span>
<span class="t" id="L5" style="left:375.75px;top:4.80px;font-size:8.2px;color:#8a8d8f;transform:scaleX(0.9435);">MeteoInfoLab</span>
<span class="t" id="L6" style="left:498.00px;top:22.00px;font-size:8.2px;color:#bbbbbb;transform:scaleX(0.8899);">Current Folder:</span>
<span class="t" id="L7" style="left:555.00px;top:21.40px;font-size:8.2px;color:#bbbbbb;transform:scaleX(0.9520);">D:\Working\MIScript\Jython\mis\plot_types\funny</span>
<span class="t" id="L8" style="left:17.00px;top:40.70px;font-size:8.2px;color:#bbbbbb;transform:scaleX(0.9416);">Editor - D:\Working\MIScript\Jython\mis\plot_types\funny\tree_recursion_2d.py</span>
<span class="t" id="L9" style="left:11.25px;top:55.60px;font-size:8.2px;color:#bbbbbb;transform:scaleX(0.9075);">volumeplot_sagittal_basic.py</span>
<span class="t" id="L10" style="left:133.00px;top:55.60px;font-size:8.2px;color:#bbbbbb;transform:scaleX(0.8630);">curve_fit_1.py</span>
<span class="t" id="L11" style="left:203.75px;top:55.60px;font-size:8.2px;color:#bbbbbb;transform:scaleX(0.9003);">tree_recursion_2d.py</span>
<span class="t" id="L12" style="left:299.50px;top:55.60px;font-size:8.2px;color:#bbbbbb;transform:scaleX(0.8755);">color_...</span>
<span class="t" id="L13" style="left:17.00px;top:295.60px;font-size:8.2px;color:#bbbbbb;transform:scaleX(0.8986);">Console</span>
<span class="t" id="L14" style="left:415.00px;top:40.10px;font-size:8.2px;color:#dfe6f2;transform:scaleX(0.9154);">File explorer</span>
<span class="t" id="L15" style="left:453.00px;top:54.20px;font-size:8.2px;color:#bbbbbb;transform:scaleX(0.8927);">Name</span>
<span class="t" id="L16" style="left:560.75px;top:54.20px;font-size:8.2px;color:#bbbbbb;transform:scaleX(0.8157);">Size</span>
<span class="t" id="L17" style="left:641.75px;top:54.20px;font-size:8.2px;color:#bbbbbb;transform:scaleX(0.8843);">File Type</span>
<span class="t" id="L18" style="left:720.00px;top:54.20px;font-size:8.2px;color:#bbbbbb;transform:scaleX(0.9499);">Date Modified</span>
<span class="t" id="L19" style="left:417.50px;top:126.80px;font-size:8.2px;color:#bbbbbb;transform:scaleX(0.9585);">Variable explorer</span>
<span class="t" id="L20" style="left:496.25px;top:126.80px;font-size:8.2px;color:#bbbbbb;transform:scaleX(0.9265);">File explorer</span>
<span class="t" id="L21" style="left:415.00px;top:144.20px;font-size:8.2px;color:#bbbbbb;transform:scaleX(0.8787);">Figures</span>
<span class="t" id="L22" style="left:409.25px;top:159.90px;font-size:8.2px;color:#bbbbbb;transform:scaleX(0.8903);">Figure 1</span>
<span class="t" id="L23" style="left:743.75px;top:445.50px;font-size:7.4px;color:#bbbbbb;transform:scaleX(0.8167);">8% / 4.0G</span>
<span class="t" id="L24" style="left:416.00px;top:66.10px;font-size:8.2px;color:#bbbbbb;transform:scaleX(0.9483);">rocket.py</span>
<span class="t" id="L25" style="left:524.00px;top:66.10px;font-size:8.2px;color:#bbbbbb;transform:scaleX(0.8777);">276</span>
<span class="t" id="L26" style="left:613.75px;top:66.10px;font-size:8.2px;color:#bbbbbb;transform:scaleX(0.8375);">py</span>
<span class="t" id="L27" style="left:701.75px;top:66.10px;font-size:8.2px;color:#bbbbbb;transform:scaleX(0.9259);">2022/11/6 01:57</span>
<span class="t" id="L28" style="left:416.00px;top:77.70px;font-size:8.2px;color:#bbbbbb;transform:scaleX(0.9189);">tree.py</span>
<span class="t" id="L29" style="left:524.00px;top:77.70px;font-size:8.2px;color:#bbbbbb;transform:scaleX(0.9846);">2kb</span>
<span class="t" id="L30" style="left:613.75px;top:77.70px;font-size:8.2px;color:#bbbbbb;transform:scaleX(0.8375);">py</span>
<span class="t" id="L31" style="left:701.75px;top:77.70px;font-size:8.2px;color:#bbbbbb;transform:scaleX(0.9137);">2022/10/25 02:12</span>
<span class="t" id="L32" style="left:416.00px;top:89.40px;font-size:8.2px;color:#bbbbbb;transform:scaleX(0.8787);">tree_1.py</span>
<span class="t" id="L33" style="left:524.00px;top:89.40px;font-size:8.2px;color:#bbbbbb;transform:scaleX(0.9846);">2kb</span>
<span class="t" id="L34" style="left:613.75px;top:89.40px;font-size:8.2px;color:#bbbbbb;transform:scaleX(0.8375);">py</span>
<span class="t" id="L35" style="left:701.75px;top:89.40px;font-size:8.2px;color:#bbbbbb;transform:scaleX(0.9137);">2022/10/25 02:26</span>
<span class="t" id="L36" style="left:416.00px;top:101.00px;font-size:8.2px;color:#bbbbbb;transform:scaleX(0.8787);">tree_3.py</span>
<span class="t" id="L37" style="left:524.00px;top:101.00px;font-size:8.2px;color:#bbbbbb;transform:scaleX(0.8777);">639</span>
<span class="t" id="L38" style="left:613.75px;top:101.00px;font-size:8.2px;color:#bbbbbb;transform:scaleX(0.8375);">py</span>
<span class="t" id="L39" style="left:701.75px;top:101.00px;font-size:8.2px;color:#bbbbbb;transform:scaleX(0.9137);">2022/12/27 03:57</span>
<span class="t" id="L40" style="left:416.00px;top:112.70px;font-size:8.2px;color:#bbbbbb;transform:scaleX(0.8970);">tree_recursion_2d.py</span>
<span class="t" id="L41" style="left:524.00px;top:112.70px;font-size:8.2px;color:#bbbbbb;transform:scaleX(0.8777);">552</span>
<span class="t" id="L42" style="left:613.75px;top:112.70px;font-size:8.2px;color:#bbbbbb;transform:scaleX(0.8375);">py</span>
<span class="t" id="L43" style="left:701.75px;top:112.70px;font-size:8.2px;color:#bbbbbb;transform:scaleX(0.9137);">2022/12/27 03:59</span>

</body></html>
